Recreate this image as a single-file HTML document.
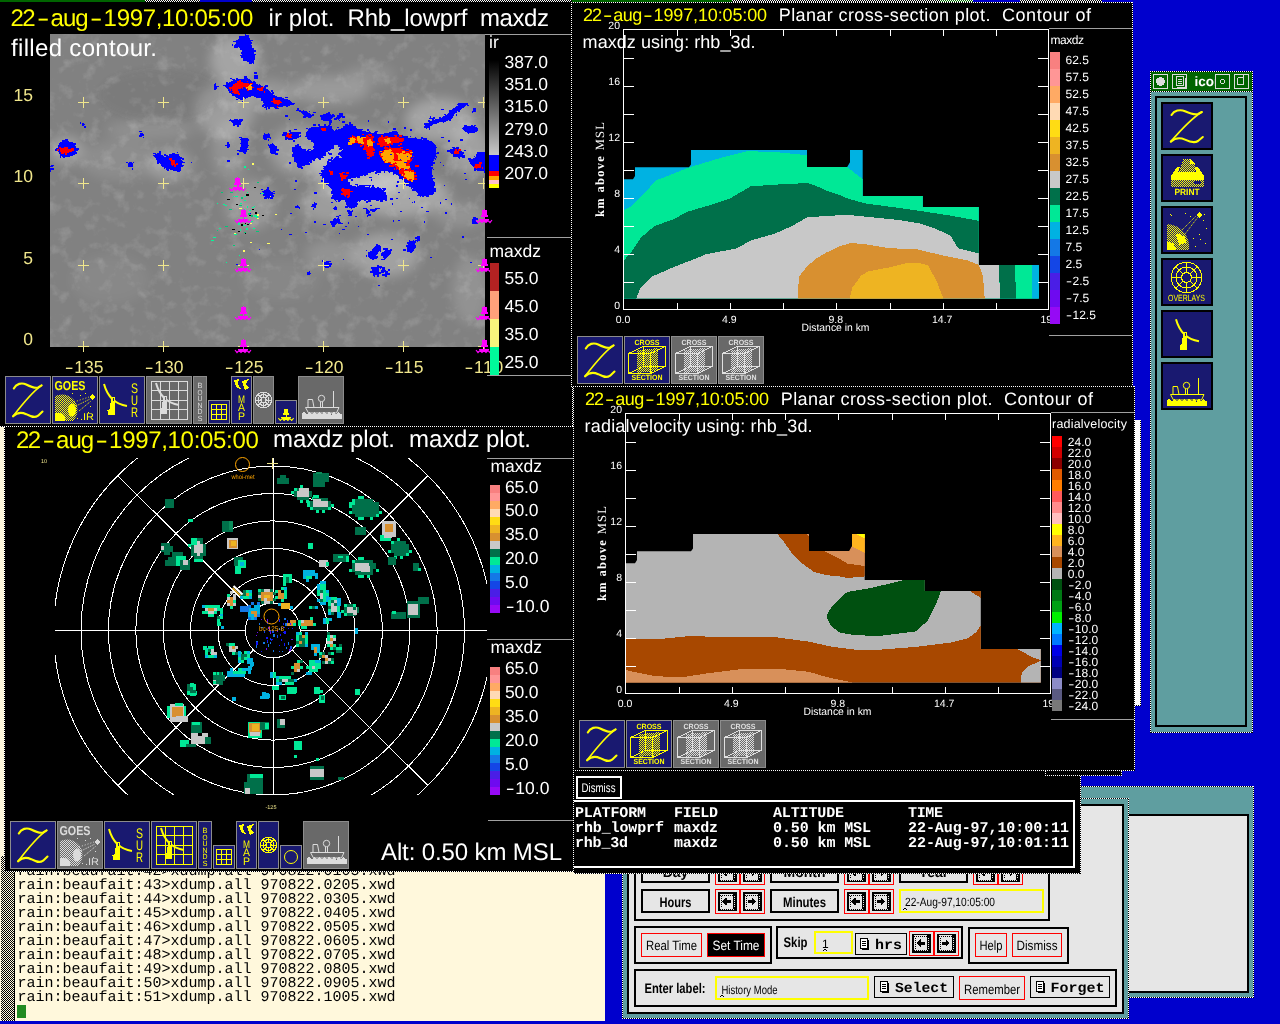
<!DOCTYPE html>
<html><head><meta charset="utf-8"><title>zeb display</title>
<style>html,body{margin:0;padding:0;background:#0000cd;overflow:hidden}svg{display:block;will-change:transform}text{white-space:pre}</style></head><body>
<svg width="1280" height="1024" viewBox="0 0 1280 1024" shape-rendering="crispEdges" text-rendering="geometricPrecision">
<defs>
<pattern id="stipY" width="2" height="2" patternUnits="userSpaceOnUse"><rect width="1" height="1" fill="#ffff00"/><rect x="1" y="1" width="1" height="1" fill="#ffff00"/></pattern>
<pattern id="stipG" width="2" height="2" patternUnits="userSpaceOnUse"><rect width="1" height="1" fill="#dcdcdc"/><rect x="1" y="1" width="1" height="1" fill="#dcdcdc"/></pattern>
<pattern id="stipK" width="2" height="2" patternUnits="userSpaceOnUse"><rect width="2" height="2" fill="#e6e6e6"/><rect width="1" height="1" fill="#000"/><rect x="1" y="1" width="1" height="1" fill="#000"/></pattern>
<pattern id="stipS" width="2" height="2" patternUnits="userSpaceOnUse"><rect width="2" height="2" fill="#fff8dc"/><rect width="1" height="1" fill="#000"/><rect x="1" y="1" width="1" height="1" fill="#000"/></pattern>
<filter id="blur3" x="-30%" y="-30%" width="160%" height="160%"><feGaussianBlur stdDeviation="3"/></filter>
<filter id="blur6" x="-30%" y="-30%" width="160%" height="160%"><feGaussianBlur stdDeviation="6"/></filter>
<filter id="blur1" x="-30%" y="-30%" width="160%" height="160%"><feGaussianBlur stdDeviation="1.2"/></filter>
<filter id="cloud" x="0" y="0" width="100%" height="100%"><feTurbulence type="fractalNoise" baseFrequency="0.07" numOctaves="4" seed="11"/><feColorMatrix type="matrix" values="0 0 0 0 1  0 0 0 0 1  0 0 0 0 1  2.6 0 0 0 -1.35"/></filter>
<linearGradient id="irg" x1="0" y1="0" x2="0" y2="1"><stop offset="0" stop-color="#000"/><stop offset="1" stop-color="#c8c8c8"/></linearGradient>
</defs>
<rect x="0" y="0" width="1280" height="1024" fill="#0000cd" />
<rect x="0" y="0" width="145" height="2" fill="#006400" />
<rect x="145" y="0" width="55" height="2" fill="#000" />
<line x1="145" y1="0.5" x2="200" y2="0.5" stroke="#fff" stroke-width="1" stroke-dasharray="1 1"/>
<line x1="146" y1="1.5" x2="200" y2="1.5" stroke="#fff" stroke-width="1" stroke-dasharray="1 1"/>
<rect x="200" y="0" width="52" height="2" fill="#0000cd" />
<rect x="252" y="0" width="319" height="2" fill="#000" />
<line x1="252" y1="0.5" x2="571" y2="0.5" stroke="#fff" stroke-width="1" stroke-dasharray="1 1"/>
<line x1="253" y1="1.5" x2="571" y2="1.5" stroke="#fff" stroke-width="1" stroke-dasharray="1 1"/>
<rect x="571" y="0" width="1" height="2" fill="#000" />
<rect x="572" y="0" width="160" height="2" fill="#006400" />
<rect x="732" y="0" width="208" height="2" fill="#000" />
<line x1="732" y1="0.5" x2="940" y2="0.5" stroke="#fff" stroke-width="1" stroke-dasharray="1 1"/>
<line x1="733" y1="1.5" x2="940" y2="1.5" stroke="#fff" stroke-width="1" stroke-dasharray="1 1"/>
<rect x="940" y="0" width="33" height="2" fill="#006400" />
<line x1="940" y1="0.5" x2="973" y2="0.5" stroke="#fff" stroke-width="1" stroke-dasharray="1 1"/>
<line x1="941" y1="1.5" x2="973" y2="1.5" stroke="#fff" stroke-width="1" stroke-dasharray="1 1"/>
<rect x="973" y="0" width="47" height="2" fill="#0000cd" />
<rect x="1020" y="0" width="82" height="2" fill="#000" />
<line x1="1020" y1="0.5" x2="1102" y2="0.5" stroke="#fff" stroke-width="1" stroke-dasharray="1 1"/>
<line x1="1021" y1="1.5" x2="1102" y2="1.5" stroke="#fff" stroke-width="1" stroke-dasharray="1 1"/>
<rect x="0" y="427" width="605" height="594" fill="#fff8dc" />
<rect x="1" y="856" width="13" height="165" fill="url(#stipS)" />
<rect x="14" y="856" width="1" height="165" fill="#000" />
<text x="17.6" y="874.75" font-size="15" fill="#000" font-family="'Liberation Mono', monospace" textLength="378" lengthAdjust="spacing" >rain:beaufait:42&gt;xdump.all 970822.0105.xwd</text>
<text x="17.6" y="888.75" font-size="15" fill="#000" font-family="'Liberation Mono', monospace" textLength="378" lengthAdjust="spacing" >rain:beaufait:43&gt;xdump.all 970822.0205.xwd</text>
<text x="17.6" y="902.75" font-size="15" fill="#000" font-family="'Liberation Mono', monospace" textLength="378" lengthAdjust="spacing" >rain:beaufait:44&gt;xdump.all 970822.0305.xwd</text>
<text x="17.6" y="916.75" font-size="15" fill="#000" font-family="'Liberation Mono', monospace" textLength="378" lengthAdjust="spacing" >rain:beaufait:45&gt;xdump.all 970822.0405.xwd</text>
<text x="17.6" y="930.75" font-size="15" fill="#000" font-family="'Liberation Mono', monospace" textLength="378" lengthAdjust="spacing" >rain:beaufait:46&gt;xdump.all 970822.0505.xwd</text>
<text x="17.6" y="944.75" font-size="15" fill="#000" font-family="'Liberation Mono', monospace" textLength="378" lengthAdjust="spacing" >rain:beaufait:47&gt;xdump.all 970822.0605.xwd</text>
<text x="17.6" y="958.75" font-size="15" fill="#000" font-family="'Liberation Mono', monospace" textLength="378" lengthAdjust="spacing" >rain:beaufait:48&gt;xdump.all 970822.0705.xwd</text>
<text x="17.6" y="972.75" font-size="15" fill="#000" font-family="'Liberation Mono', monospace" textLength="378" lengthAdjust="spacing" >rain:beaufait:49&gt;xdump.all 970822.0805.xwd</text>
<text x="17.6" y="986.75" font-size="15" fill="#000" font-family="'Liberation Mono', monospace" textLength="378" lengthAdjust="spacing" >rain:beaufait:50&gt;xdump.all 970822.0905.xwd</text>
<text x="17.6" y="1000.75" font-size="15" fill="#000" font-family="'Liberation Mono', monospace" textLength="378" lengthAdjust="spacing" >rain:beaufait:51&gt;xdump.all 970822.1005.xwd</text>
<rect x="17" y="1004.5" width="9" height="13" fill="#228b22" />
<rect x="1080" y="786" width="174" height="212" fill="#5f9ea0" />
<line x1="1080" y1="786.5" x2="1254" y2="786.5" stroke="#000" stroke-width="1" />
<line x1="1080" y1="786.5" x2="1254" y2="786.5" stroke="#fff" stroke-width="1" stroke-dasharray="1 1"/>
<line x1="1080" y1="997.5" x2="1254" y2="997.5" stroke="#000" stroke-width="1" />
<line x1="1080" y1="997.5" x2="1254" y2="997.5" stroke="#fff" stroke-width="1" stroke-dasharray="1 1"/>
<line x1="1253.5" y1="786" x2="1253.5" y2="998" stroke="#000" stroke-width="1" />
<line x1="1253.5" y1="786" x2="1253.5" y2="998" stroke="#fff" stroke-width="1" stroke-dasharray="1 1"/>
<rect x="1120" y="814" width="129" height="179" fill="#000" />
<rect x="1122" y="816" width="125" height="175" fill="#e6e6e6" />
<rect x="622" y="798" width="507" height="221" fill="#5f9ea0" />
<line x1="622" y1="798.5" x2="1129" y2="798.5" stroke="#000" stroke-width="1" />
<line x1="622" y1="798.5" x2="1129" y2="798.5" stroke="#fff" stroke-width="1" stroke-dasharray="1 1"/>
<line x1="622.5" y1="798" x2="622.5" y2="1019" stroke="#000" stroke-width="1" />
<line x1="622.5" y1="798" x2="622.5" y2="1019" stroke="#fff" stroke-width="1" stroke-dasharray="1 1"/>
<line x1="1128.5" y1="798" x2="1128.5" y2="1019" stroke="#000" stroke-width="1" />
<line x1="1128.5" y1="798" x2="1128.5" y2="1019" stroke="#fff" stroke-width="1" stroke-dasharray="1 1"/>
<line x1="622" y1="1018.5" x2="1129" y2="1018.5" stroke="#000" stroke-width="1" />
<line x1="622" y1="1018.5" x2="1129" y2="1018.5" stroke="#fff" stroke-width="1" stroke-dasharray="1 1"/>
<rect x="627" y="804" width="497" height="210" fill="#000" />
<rect x="629" y="806" width="493" height="206" fill="#e6e6e6" />
<rect x="635" y="841" width="414" height="79" fill="none" stroke="#000" stroke-width="2"/>
<rect x="642" y="861" width="67" height="21" fill="none" stroke="#000" stroke-width="2"/>
<text x="675.5" y="877" font-size="14" fill="#000" font-family="'Liberation Sans', sans-serif" font-weight="bold" text-anchor="middle" >Day</text>
<rect x="771" y="861" width="67" height="21" fill="none" stroke="#000" stroke-width="2"/>
<text x="804.5" y="877" font-size="14" fill="#000" font-family="'Liberation Sans', sans-serif" font-weight="bold" text-anchor="middle" >Month</text>
<rect x="900" y="861" width="67" height="21" fill="none" stroke="#000" stroke-width="2"/>
<text x="933.5" y="877" font-size="14" fill="#000" font-family="'Liberation Sans', sans-serif" font-weight="bold" text-anchor="middle" >Year</text>
<rect x="715.5" y="860.5" width="24" height="24" fill="none" stroke="#ff0000" stroke-width="1"/>
<rect x="718" y="863" width="19" height="19" fill="#000" />
<rect x="719.5" y="864.5" width="13.5" height="15" fill="#e6e6e6" />
<line x1="720" y1="866" x2="733" y2="866" stroke="#000" stroke-width="1" stroke-dasharray="1 1"/>
<line x1="721.5" y1="867" x2="721.5" y2="878" stroke="#000" stroke-width="1" stroke-dasharray="1 1"/>
<line x1="720" y1="879" x2="733" y2="879" stroke="#e6e6e6" stroke-width="1" stroke-dasharray="1 1"/>
<line x1="721" y1="880" x2="734" y2="880" stroke="#e6e6e6" stroke-width="1" stroke-dasharray="1 1"/>
<line x1="734.5" y1="867" x2="734.5" y2="879" stroke="#e6e6e6" stroke-width="1" stroke-dasharray="1 1"/>
<polygon points="730.5,871.0 726.5,871.0 726.5,868.5 722.0,872.5 726.5,876.5 726.5,874.0 730.5,874.0" fill="#000" />
<rect x="740.5" y="860.5" width="24" height="24" fill="none" stroke="#ff0000" stroke-width="1"/>
<rect x="743" y="863" width="19" height="19" fill="#000" />
<rect x="744.5" y="864.5" width="13.5" height="15" fill="#e6e6e6" />
<line x1="745" y1="866" x2="758" y2="866" stroke="#000" stroke-width="1" stroke-dasharray="1 1"/>
<line x1="746.5" y1="867" x2="746.5" y2="878" stroke="#000" stroke-width="1" stroke-dasharray="1 1"/>
<line x1="745" y1="879" x2="758" y2="879" stroke="#e6e6e6" stroke-width="1" stroke-dasharray="1 1"/>
<line x1="746" y1="880" x2="759" y2="880" stroke="#e6e6e6" stroke-width="1" stroke-dasharray="1 1"/>
<line x1="759.5" y1="867" x2="759.5" y2="879" stroke="#e6e6e6" stroke-width="1" stroke-dasharray="1 1"/>
<polygon points="747.5,871.0 751.5,871.0 751.5,868.5 756.0,872.5 751.5,876.5 751.5,874.0 747.5,874.0" fill="#000" />
<rect x="844.5" y="860.5" width="24" height="24" fill="none" stroke="#ff0000" stroke-width="1"/>
<rect x="847" y="863" width="19" height="19" fill="#000" />
<rect x="848.5" y="864.5" width="13.5" height="15" fill="#e6e6e6" />
<line x1="849" y1="866" x2="862" y2="866" stroke="#000" stroke-width="1" stroke-dasharray="1 1"/>
<line x1="850.5" y1="867" x2="850.5" y2="878" stroke="#000" stroke-width="1" stroke-dasharray="1 1"/>
<line x1="849" y1="879" x2="862" y2="879" stroke="#e6e6e6" stroke-width="1" stroke-dasharray="1 1"/>
<line x1="850" y1="880" x2="863" y2="880" stroke="#e6e6e6" stroke-width="1" stroke-dasharray="1 1"/>
<line x1="863.5" y1="867" x2="863.5" y2="879" stroke="#e6e6e6" stroke-width="1" stroke-dasharray="1 1"/>
<polygon points="859.5,871.0 855.5,871.0 855.5,868.5 851.0,872.5 855.5,876.5 855.5,874.0 859.5,874.0" fill="#000" />
<rect x="869.5" y="860.5" width="24" height="24" fill="none" stroke="#ff0000" stroke-width="1"/>
<rect x="872" y="863" width="19" height="19" fill="#000" />
<rect x="873.5" y="864.5" width="13.5" height="15" fill="#e6e6e6" />
<line x1="874" y1="866" x2="887" y2="866" stroke="#000" stroke-width="1" stroke-dasharray="1 1"/>
<line x1="875.5" y1="867" x2="875.5" y2="878" stroke="#000" stroke-width="1" stroke-dasharray="1 1"/>
<line x1="874" y1="879" x2="887" y2="879" stroke="#e6e6e6" stroke-width="1" stroke-dasharray="1 1"/>
<line x1="875" y1="880" x2="888" y2="880" stroke="#e6e6e6" stroke-width="1" stroke-dasharray="1 1"/>
<line x1="888.5" y1="867" x2="888.5" y2="879" stroke="#e6e6e6" stroke-width="1" stroke-dasharray="1 1"/>
<polygon points="876.5,871.0 880.5,871.0 880.5,868.5 885.0,872.5 880.5,876.5 880.5,874.0 876.5,874.0" fill="#000" />
<rect x="973.5" y="860.5" width="24" height="24" fill="none" stroke="#ff0000" stroke-width="1"/>
<rect x="976" y="863" width="19" height="19" fill="#000" />
<rect x="977.5" y="864.5" width="13.5" height="15" fill="#e6e6e6" />
<line x1="978" y1="866" x2="991" y2="866" stroke="#000" stroke-width="1" stroke-dasharray="1 1"/>
<line x1="979.5" y1="867" x2="979.5" y2="878" stroke="#000" stroke-width="1" stroke-dasharray="1 1"/>
<line x1="978" y1="879" x2="991" y2="879" stroke="#e6e6e6" stroke-width="1" stroke-dasharray="1 1"/>
<line x1="979" y1="880" x2="992" y2="880" stroke="#e6e6e6" stroke-width="1" stroke-dasharray="1 1"/>
<line x1="992.5" y1="867" x2="992.5" y2="879" stroke="#e6e6e6" stroke-width="1" stroke-dasharray="1 1"/>
<polygon points="988.5,871.0 984.5,871.0 984.5,868.5 980.0,872.5 984.5,876.5 984.5,874.0 988.5,874.0" fill="#000" />
<rect x="998.5" y="860.5" width="24" height="24" fill="none" stroke="#ff0000" stroke-width="1"/>
<rect x="1001" y="863" width="19" height="19" fill="#000" />
<rect x="1002.5" y="864.5" width="13.5" height="15" fill="#e6e6e6" />
<line x1="1003" y1="866" x2="1016" y2="866" stroke="#000" stroke-width="1" stroke-dasharray="1 1"/>
<line x1="1004.5" y1="867" x2="1004.5" y2="878" stroke="#000" stroke-width="1" stroke-dasharray="1 1"/>
<line x1="1003" y1="879" x2="1016" y2="879" stroke="#e6e6e6" stroke-width="1" stroke-dasharray="1 1"/>
<line x1="1004" y1="880" x2="1017" y2="880" stroke="#e6e6e6" stroke-width="1" stroke-dasharray="1 1"/>
<line x1="1017.5" y1="867" x2="1017.5" y2="879" stroke="#e6e6e6" stroke-width="1" stroke-dasharray="1 1"/>
<polygon points="1005.5,871.0 1009.5,871.0 1009.5,868.5 1014.0,872.5 1009.5,876.5 1009.5,874.0 1005.5,874.0" fill="#000" />
<rect x="642" y="890" width="67" height="22" fill="none" stroke="#000" stroke-width="2"/>
<text x="675.5" y="906.5" font-size="14" fill="#000" font-family="'Liberation Sans', sans-serif" textLength="32" lengthAdjust="spacingAndGlyphs" font-weight="bold" text-anchor="middle" >Hours</text>
<rect x="771" y="890" width="67" height="22" fill="none" stroke="#000" stroke-width="2"/>
<text x="804.5" y="906.5" font-size="14" fill="#000" font-family="'Liberation Sans', sans-serif" textLength="43" lengthAdjust="spacingAndGlyphs" font-weight="bold" text-anchor="middle" >Minutes</text>
<rect x="715.5" y="889.5" width="24" height="24" fill="none" stroke="#ff0000" stroke-width="1"/>
<rect x="718" y="892" width="19" height="19" fill="#000" />
<rect x="719.5" y="893.5" width="13.5" height="15" fill="#e6e6e6" />
<line x1="720" y1="895" x2="733" y2="895" stroke="#000" stroke-width="1" stroke-dasharray="1 1"/>
<line x1="721.5" y1="896" x2="721.5" y2="907" stroke="#000" stroke-width="1" stroke-dasharray="1 1"/>
<line x1="720" y1="908" x2="733" y2="908" stroke="#e6e6e6" stroke-width="1" stroke-dasharray="1 1"/>
<line x1="721" y1="909" x2="734" y2="909" stroke="#e6e6e6" stroke-width="1" stroke-dasharray="1 1"/>
<line x1="734.5" y1="896" x2="734.5" y2="908" stroke="#e6e6e6" stroke-width="1" stroke-dasharray="1 1"/>
<polygon points="730.5,900.0 726.5,900.0 726.5,897.5 722.0,901.5 726.5,905.5 726.5,903.0 730.5,903.0" fill="#000" />
<rect x="740.5" y="889.5" width="24" height="24" fill="none" stroke="#ff0000" stroke-width="1"/>
<rect x="743" y="892" width="19" height="19" fill="#000" />
<rect x="744.5" y="893.5" width="13.5" height="15" fill="#e6e6e6" />
<line x1="745" y1="895" x2="758" y2="895" stroke="#000" stroke-width="1" stroke-dasharray="1 1"/>
<line x1="746.5" y1="896" x2="746.5" y2="907" stroke="#000" stroke-width="1" stroke-dasharray="1 1"/>
<line x1="745" y1="908" x2="758" y2="908" stroke="#e6e6e6" stroke-width="1" stroke-dasharray="1 1"/>
<line x1="746" y1="909" x2="759" y2="909" stroke="#e6e6e6" stroke-width="1" stroke-dasharray="1 1"/>
<line x1="759.5" y1="896" x2="759.5" y2="908" stroke="#e6e6e6" stroke-width="1" stroke-dasharray="1 1"/>
<polygon points="747.5,900.0 751.5,900.0 751.5,897.5 756.0,901.5 751.5,905.5 751.5,903.0 747.5,903.0" fill="#000" />
<rect x="844.5" y="889.5" width="24" height="24" fill="none" stroke="#ff0000" stroke-width="1"/>
<rect x="847" y="892" width="19" height="19" fill="#000" />
<rect x="848.5" y="893.5" width="13.5" height="15" fill="#e6e6e6" />
<line x1="849" y1="895" x2="862" y2="895" stroke="#000" stroke-width="1" stroke-dasharray="1 1"/>
<line x1="850.5" y1="896" x2="850.5" y2="907" stroke="#000" stroke-width="1" stroke-dasharray="1 1"/>
<line x1="849" y1="908" x2="862" y2="908" stroke="#e6e6e6" stroke-width="1" stroke-dasharray="1 1"/>
<line x1="850" y1="909" x2="863" y2="909" stroke="#e6e6e6" stroke-width="1" stroke-dasharray="1 1"/>
<line x1="863.5" y1="896" x2="863.5" y2="908" stroke="#e6e6e6" stroke-width="1" stroke-dasharray="1 1"/>
<polygon points="859.5,900.0 855.5,900.0 855.5,897.5 851.0,901.5 855.5,905.5 855.5,903.0 859.5,903.0" fill="#000" />
<rect x="869.5" y="889.5" width="24" height="24" fill="none" stroke="#ff0000" stroke-width="1"/>
<rect x="872" y="892" width="19" height="19" fill="#000" />
<rect x="873.5" y="893.5" width="13.5" height="15" fill="#e6e6e6" />
<line x1="874" y1="895" x2="887" y2="895" stroke="#000" stroke-width="1" stroke-dasharray="1 1"/>
<line x1="875.5" y1="896" x2="875.5" y2="907" stroke="#000" stroke-width="1" stroke-dasharray="1 1"/>
<line x1="874" y1="908" x2="887" y2="908" stroke="#e6e6e6" stroke-width="1" stroke-dasharray="1 1"/>
<line x1="875" y1="909" x2="888" y2="909" stroke="#e6e6e6" stroke-width="1" stroke-dasharray="1 1"/>
<line x1="888.5" y1="896" x2="888.5" y2="908" stroke="#e6e6e6" stroke-width="1" stroke-dasharray="1 1"/>
<polygon points="876.5,900.0 880.5,900.0 880.5,897.5 885.0,901.5 880.5,905.5 880.5,903.0 876.5,903.0" fill="#000" />
<rect x="900" y="890" width="143" height="22" fill="none" stroke="#ffff00" stroke-width="2"/>
<text x="905" y="906" font-size="12" fill="#000" font-family="'Liberation Sans', sans-serif" textLength="90" lengthAdjust="spacingAndGlyphs" >22-Aug-97,10:05:00</text>
<path d="M902.5,910.5 l2.5,-2.5 l2.5,2.5" fill="none" stroke="#000" stroke-width="1"/>
<rect x="635" y="927" width="136" height="36" fill="none" stroke="#000" stroke-width="2"/>
<rect x="641.5" y="933.5" width="60" height="23" fill="none" stroke="#ff0000" stroke-width="1"/>
<text x="671.5" y="950" font-size="13.5" fill="#000" font-family="'Liberation Sans', sans-serif" textLength="51" lengthAdjust="spacingAndGlyphs" text-anchor="middle" >Real Time</text>
<rect x="707.5" y="933.5" width="57" height="23" fill="#000" stroke="#ff0000" stroke-width="1"/>
<text x="736" y="950" font-size="13.5" fill="#fff" font-family="'Liberation Sans', sans-serif" textLength="47" lengthAdjust="spacingAndGlyphs" text-anchor="middle" >Set Time</text>
<rect x="777" y="927" width="185" height="31" fill="none" stroke="#000" stroke-width="2"/>
<text x="783.5" y="946.5" font-size="14" fill="#000" font-family="'Liberation Sans', sans-serif" textLength="24" lengthAdjust="spacingAndGlyphs" font-weight="bold" >Skip</text>
<rect x="815" y="931.5" width="37" height="21.5" fill="none" stroke="#ffff00" stroke-width="2"/>
<text x="822" y="948" font-size="12" fill="#000" font-family="'Liberation Sans', sans-serif" >1</text>
<path d="M822.5,951.5 l2.5,-2.5 l2.5,2.5" fill="none" stroke="#000" stroke-width="1"/>
<rect x="855.5" y="933.5" width="51" height="21" fill="none" stroke="#000" stroke-width="1"/>
<rect x="860.5" y="938.5" width="7" height="10" fill="#fff" stroke="#000" stroke-width="1"/>
<line x1="862" y1="941.5" x2="866" y2="941.5" stroke="#000" stroke-width="1" />
<line x1="862" y1="943.5" x2="866" y2="943.5" stroke="#000" stroke-width="1" />
<line x1="862" y1="945.5" x2="866" y2="945.5" stroke="#000" stroke-width="1" />
<line x1="868.5" y1="940" x2="868.5" y2="950" stroke="#000" stroke-width="1" />
<line x1="862" y1="949.5" x2="869" y2="949.5" stroke="#000" stroke-width="1" />
<text x="875" y="948.5" font-size="14" fill="#000" font-family="'Liberation Mono', monospace" textLength="27" lengthAdjust="spacingAndGlyphs" font-weight="bold" >hrs</text>
<rect x="909.5" y="931" width="24" height="24" fill="none" stroke="#ff0000" stroke-width="1"/>
<rect x="912" y="933.5" width="19" height="19" fill="#000" />
<rect x="913.5" y="935" width="13.5" height="15" fill="#e6e6e6" />
<line x1="914" y1="936.5" x2="927" y2="936.5" stroke="#000" stroke-width="1" stroke-dasharray="1 1"/>
<line x1="915.5" y1="937.5" x2="915.5" y2="948.5" stroke="#000" stroke-width="1" stroke-dasharray="1 1"/>
<line x1="914" y1="949.5" x2="927" y2="949.5" stroke="#e6e6e6" stroke-width="1" stroke-dasharray="1 1"/>
<line x1="915" y1="950.5" x2="928" y2="950.5" stroke="#e6e6e6" stroke-width="1" stroke-dasharray="1 1"/>
<line x1="928.5" y1="937.5" x2="928.5" y2="949.5" stroke="#e6e6e6" stroke-width="1" stroke-dasharray="1 1"/>
<polygon points="924.5,941.5 920.5,941.5 920.5,939.0 916.0,943.0 920.5,947.0 920.5,944.5 924.5,944.5" fill="#000" />
<rect x="934.5" y="931" width="24" height="24" fill="none" stroke="#ff0000" stroke-width="1"/>
<rect x="937" y="933.5" width="19" height="19" fill="#000" />
<rect x="938.5" y="935" width="13.5" height="15" fill="#e6e6e6" />
<line x1="939" y1="936.5" x2="952" y2="936.5" stroke="#000" stroke-width="1" stroke-dasharray="1 1"/>
<line x1="940.5" y1="937.5" x2="940.5" y2="948.5" stroke="#000" stroke-width="1" stroke-dasharray="1 1"/>
<line x1="939" y1="949.5" x2="952" y2="949.5" stroke="#e6e6e6" stroke-width="1" stroke-dasharray="1 1"/>
<line x1="940" y1="950.5" x2="953" y2="950.5" stroke="#e6e6e6" stroke-width="1" stroke-dasharray="1 1"/>
<line x1="953.5" y1="937.5" x2="953.5" y2="949.5" stroke="#e6e6e6" stroke-width="1" stroke-dasharray="1 1"/>
<polygon points="941.5,941.5 945.5,941.5 945.5,939.0 950.0,943.0 945.5,947.0 945.5,944.5 941.5,944.5" fill="#000" />
<rect x="969" y="927.5" width="99" height="35" fill="none" stroke="#000" stroke-width="2"/>
<rect x="975.5" y="933.5" width="31" height="23" fill="none" stroke="#ff0000" stroke-width="1"/>
<text x="991" y="950" font-size="13.5" fill="#000" font-family="'Liberation Sans', sans-serif" textLength="23" lengthAdjust="spacingAndGlyphs" text-anchor="middle" >Help</text>
<rect x="1012.5" y="933.5" width="49" height="23" fill="none" stroke="#ff0000" stroke-width="1"/>
<text x="1037" y="950" font-size="13.5" fill="#000" font-family="'Liberation Sans', sans-serif" textLength="41" lengthAdjust="spacingAndGlyphs" text-anchor="middle" >Dismiss</text>
<rect x="635" y="970" width="481" height="36" fill="none" stroke="#000" stroke-width="2"/>
<text x="644.5" y="992.5" font-size="14" fill="#000" font-family="'Liberation Sans', sans-serif" textLength="61" lengthAdjust="spacingAndGlyphs" font-weight="bold" >Enter label:</text>
<rect x="716" y="977" width="152" height="21.5" fill="none" stroke="#ffff00" stroke-width="2"/>
<text x="721.5" y="993.5" font-size="12" fill="#000" font-family="'Liberation Sans', sans-serif" textLength="56" lengthAdjust="spacingAndGlyphs" >History Mode</text>
<path d="M719.5,997.5 l2.5,-2.5 l2.5,2.5" fill="none" stroke="#000" stroke-width="1"/>
<rect x="874.5" y="976.5" width="79" height="21" fill="none" stroke="#000" stroke-width="1"/>
<rect x="880.5" y="981.5" width="7" height="10" fill="#fff" stroke="#000" stroke-width="1"/>
<line x1="882" y1="984.5" x2="886" y2="984.5" stroke="#000" stroke-width="1" />
<line x1="882" y1="986.5" x2="886" y2="986.5" stroke="#000" stroke-width="1" />
<line x1="882" y1="988.5" x2="886" y2="988.5" stroke="#000" stroke-width="1" />
<line x1="888.5" y1="983" x2="888.5" y2="993" stroke="#000" stroke-width="1" />
<line x1="882" y1="992.5" x2="889" y2="992.5" stroke="#000" stroke-width="1" />
<text x="895" y="992" font-size="14" fill="#000" font-family="'Liberation Mono', monospace" textLength="53" lengthAdjust="spacingAndGlyphs" font-weight="bold" >Select</text>
<rect x="959.5" y="976.5" width="65" height="23" fill="none" stroke="#ff0000" stroke-width="1"/>
<text x="992" y="993.5" font-size="13.5" fill="#000" font-family="'Liberation Sans', sans-serif" textLength="56" lengthAdjust="spacingAndGlyphs" text-anchor="middle" >Remember</text>
<rect x="1030.5" y="976.5" width="79" height="21" fill="none" stroke="#000" stroke-width="1"/>
<rect x="1036.5" y="981.5" width="7" height="10" fill="#fff" stroke="#000" stroke-width="1"/>
<line x1="1038" y1="984.5" x2="1042" y2="984.5" stroke="#000" stroke-width="1" />
<line x1="1038" y1="986.5" x2="1042" y2="986.5" stroke="#000" stroke-width="1" />
<line x1="1038" y1="988.5" x2="1042" y2="988.5" stroke="#000" stroke-width="1" />
<line x1="1044.5" y1="983" x2="1044.5" y2="993" stroke="#000" stroke-width="1" />
<line x1="1038" y1="992.5" x2="1045" y2="992.5" stroke="#000" stroke-width="1" />
<text x="1050.5" y="992" font-size="14" fill="#000" font-family="'Liberation Mono', monospace" textLength="54" lengthAdjust="spacingAndGlyphs" font-weight="bold" >Forget</text>
<rect x="1150" y="71" width="103" height="662" fill="#5f9ea0" />
<rect x="1150" y="71" width="103" height="21" fill="#006400" />
<line x1="1150" y1="71.5" x2="1253" y2="71.5" stroke="#000" stroke-width="1" />
<line x1="1150" y1="71.5" x2="1253" y2="71.5" stroke="#fff" stroke-width="1" stroke-dasharray="1 1"/>
<line x1="1150" y1="91.5" x2="1253" y2="91.5" stroke="#000" stroke-width="1" />
<line x1="1150" y1="91.5" x2="1253" y2="91.5" stroke="#fff" stroke-width="1" stroke-dasharray="1 1"/>
<line x1="1150" y1="732.5" x2="1253" y2="732.5" stroke="#000" stroke-width="1" />
<line x1="1150" y1="732.5" x2="1253" y2="732.5" stroke="#fff" stroke-width="1" stroke-dasharray="1 1"/>
<line x1="1150.5" y1="71" x2="1150.5" y2="733" stroke="#000" stroke-width="1" />
<line x1="1150.5" y1="71" x2="1150.5" y2="733" stroke="#fff" stroke-width="1" stroke-dasharray="1 1"/>
<line x1="1252.5" y1="71" x2="1252.5" y2="733" stroke="#000" stroke-width="1" />
<line x1="1252.5" y1="71" x2="1252.5" y2="733" stroke="#fff" stroke-width="1" stroke-dasharray="1 1"/>
<text x="1194.5" y="86" font-size="13.5" fill="#fff" font-family="'Liberation Sans', sans-serif" font-weight="bold" >icons</text>
<rect x="1153.5" y="74.5" width="14" height="14" fill="#006400" stroke="#dcdcdc" stroke-width="1"/>
<rect x="1172.5" y="74.5" width="14" height="14" fill="#006400" stroke="#dcdcdc" stroke-width="1"/>
<rect x="1215.5" y="74.5" width="14" height="14" fill="#006400" stroke="#dcdcdc" stroke-width="1"/>
<rect x="1234.5" y="74.5" width="14" height="14" fill="#006400" stroke="#dcdcdc" stroke-width="1"/>
<circle cx="1160.5" cy="81.5" r="4.5" fill="#dcdcdc"/>
<rect x="1176.5" y="76.5" width="7" height="9" fill="none" stroke="#dcdcdc" stroke-width="1"/>
<line x1="1178" y1="79.5" x2="1182" y2="79.5" stroke="#dcdcdc" stroke-width="1" />
<line x1="1178" y1="81.5" x2="1182" y2="81.5" stroke="#dcdcdc" stroke-width="1" />
<line x1="1178" y1="83.5" x2="1182" y2="83.5" stroke="#dcdcdc" stroke-width="1" />
<line x1="1177" y1="87.5" x2="1186" y2="87.5" stroke="#dcdcdc" stroke-width="1" />
<line x1="1185.5" y1="78" x2="1185.5" y2="88" stroke="#dcdcdc" stroke-width="1" />
<circle cx="1222.5" cy="81.5" r="2" fill="none" stroke="#dcdcdc" stroke-width="1"/>
<path d="M1237.5,77.5 h6 v-3 M1243.5,77.5 v7 h-6 v-7" fill="none" stroke="#dcdcdc" stroke-width="1"/>
<rect x="1156" y="97" width="90" height="629" fill="none" stroke="#000" stroke-width="2"/>
<rect x="1161" y="102" width="52" height="48" fill="#000" />
<rect x="1163" y="104" width="48" height="44" fill="#191970" />
<rect x="1161" y="154" width="52" height="48" fill="#000" />
<rect x="1163" y="156" width="48" height="44" fill="#191970" />
<rect x="1161" y="206" width="52" height="48" fill="#000" />
<rect x="1163" y="208" width="48" height="44" fill="#191970" />
<rect x="1161" y="258" width="52" height="48" fill="#000" />
<rect x="1163" y="260" width="48" height="44" fill="#191970" />
<rect x="1161" y="310" width="52" height="48" fill="#000" />
<rect x="1163" y="312" width="48" height="44" fill="#191970" />
<rect x="1161" y="362" width="52" height="48" fill="#000" />
<rect x="1163" y="364" width="48" height="44" fill="#191970" />
<g fill="none" stroke="#ffff00" stroke-linecap="round" stroke-linejoin="round" shape-rendering="auto">
<path d="M1171.5,115.0 C1174.0,110.5 1180.0,109.0 1185.0,111.2 C1190.0,113.5 1194.0,115.0 1198.0,114.0 L1201.8,112.0" stroke-width="2.1"/>
<path d="M1201.8,112.0 C1193.0,117.5 1183.0,127.5 1170.8,141.6" stroke-width="1.7"/>
<path d="M1170.8,141.6 C1175.0,138.0 1180.0,137.5 1185.0,139.6 C1190.0,142.0 1194.0,143.5 1198.0,141.0 L1202.8,137.0" stroke-width="2.1"/>
</g>
<polygon points="1179.0,172.0 1183.0,159.0 1190.0,159.0 1195.0,164.0 1195.0,172.0" fill="url(#stipY)" />
<polygon points="1190.0,159.0 1195.0,164.0 1190.0,164.0" fill="#ffff00" />
<polygon points="1171.0,176.0 1177.0,167.0 1180.0,167.0 1178.0,172.0 1196.0,172.0 1195.0,167.0 1198.0,167.0 1204.0,176.0" fill="#ffff00" />
<rect x="1171" y="176" width="33" height="4" fill="#ffff00" />
<rect x="1171" y="180" width="33" height="7" fill="url(#stipY)" />
<rect x="1194" y="181" width="7" height="3" fill="#191970" />
<text x="1187" y="195" font-size="9" fill="#ffff00" font-family="'Liberation Sans', sans-serif" textLength="25" lengthAdjust="spacingAndGlyphs" font-weight="bold" text-anchor="middle" >PRINT</text>
<path d="M1167,250 v-26 a23,23 0 0 1 22,26 z" fill="url(#stipY)" shape-rendering="auto"/>
<path d="M1176,234 a9,8 0 0 1 10,9 l-7,2 z" fill="#ffff00"/>
<path d="M1167,250 v-8 a8,8 0 0 1 9,8 z" fill="#ffff00"/>
<line x1="1185" y1="234" x2="1198" y2="217" stroke="#ffff00" stroke-width="1" stroke-dasharray="1 1" shape-rendering="auto"/>
<line x1="1182" y1="230" x2="1196" y2="216" stroke="#ffff00" stroke-width="1" stroke-dasharray="1 1" shape-rendering="auto"/>
<polygon points="1199.0,212.0 1202.0,215.0 1199.0,218.0 1196.0,215.0" fill="#ffff00" />
<rect x="1170" y="214" width="1" height="1" fill="#ffff00" />
<rect x="1171" y="215" width="1" height="1" fill="#ffff00" />
<rect x="1185" y="213" width="1" height="1" fill="#ffff00" />
<rect x="1190" y="216" width="1" height="1" fill="#ffff00" />
<rect x="1204" y="214" width="1" height="1" fill="#ffff00" />
<rect x="1206" y="228" width="1" height="1" fill="#ffff00" />
<rect x="1199" y="234" width="1" height="1" fill="#ffff00" />
<rect x="1205" y="243" width="1" height="1" fill="#ffff00" />
<rect x="1195" y="246" width="1" height="1" fill="#ffff00" />
<rect x="1200" y="239" width="1" height="1" fill="#ffff00" />
<rect x="1193" y="238" width="1" height="1" fill="#ffff00" />
<rect x="1203" y="220" width="1" height="1" fill="#ffff00" />
<g fill="none" stroke="#ffff00" stroke-width="1">
<circle cx="1186.5" cy="277.5" r="15.3"/><circle cx="1186.5" cy="277.5" r="10.4"/><circle cx="1186.5" cy="277.5" r="4.9"/>
<line x1="1191.4" y1="277.5" x2="1201.8" y2="277.5"/>
<line x1="1190.0" y1="281.0" x2="1197.3" y2="288.3"/>
<line x1="1186.5" y1="282.4" x2="1186.5" y2="292.8"/>
<line x1="1183.0" y1="281.0" x2="1175.7" y2="288.3"/>
<line x1="1181.6" y1="277.5" x2="1171.2" y2="277.5"/>
<line x1="1183.0" y1="274.0" x2="1175.7" y2="266.7"/>
<line x1="1186.5" y1="272.6" x2="1186.5" y2="262.2"/>
<line x1="1190.0" y1="274.0" x2="1197.3" y2="266.7"/>
</g>
<text x="1186.5" y="301" font-size="9" fill="#ffff00" font-family="'Liberation Sans', sans-serif" textLength="37" lengthAdjust="spacingAndGlyphs" text-anchor="middle" >OVERLAYS</text>
<path d="M1176.0,319.2 C1179.0,330.2 1186.0,339.2 1199.0,341.2" fill="none" stroke="#ffff00" stroke-width="2.0" shape-rendering="auto"/>
<polygon points="1183.5,331.7 1187.0,331.7 1187.0,350.2 1179.5,350.2 1179.5,345.7 1181.5,344.2" fill="#ffff00" />
<rect x="1184.5" y="333.2" width="1.5" height="2.5" fill="#191970" />
<g shape-rendering="auto">
<polygon points="1170.5,394.5 1204.0,394.5 1201.5,400.0 1173.5,400.0" fill="none" stroke="#ffff00" stroke-width="1"/>
<polygon points="1173.0,394.5 1173.0,386.5 1177.5,386.5 1179.0,394.5" fill="none" stroke="#ffff00" stroke-width="1"/>
<circle cx="1186.5" cy="385.5" r="3.2" fill="none" stroke="#ffff00" stroke-width="1"/>
</g>
<line x1="1185.5" y1="388.7" x2="1185.5" y2="394.5" stroke="#ffff00" stroke-width="1" />
<line x1="1187.5" y1="388.7" x2="1187.5" y2="394.5" stroke="#ffff00" stroke-width="1" />
<line x1="1198.5" y1="378" x2="1198.5" y2="394.5" stroke="#ffff00" stroke-width="1" />
<polygon points="1167.0,406.0 1167.0,400.0 1169.5,398.8 1172.0,401.6 1174.4,398.8 1176.9,401.6 1179.3,398.8 1181.8,401.6 1184.2,398.8 1186.7,401.6 1189.1,398.8 1191.6,401.6 1194.0,398.8 1196.5,401.6 1198.9,398.8 1201.4,401.6 1203.8,398.8 1206.3,401.6 1207.0,399.0 1207.0,406.0" fill="#ffff00" />
<rect x="0" y="2" width="574" height="425" fill="#000" />
<g>
<clipPath id="irclip"><rect x="50" y="34" width="435" height="313"/></clipPath>
<g clip-path="url(#irclip)" shape-rendering="auto">
<rect x="50" y="34" width="435" height="313" fill="#818181" />
<rect x="50" y="34" width="435" height="313" filter="url(#cloud)" opacity="0.16"/>
<g filter="url(#blur6)" fill="#fff">
<ellipse cx="235" cy="60" rx="25" ry="25" opacity="0.28"/>
<ellipse cx="225" cy="110" rx="30" ry="28" opacity="0.22"/>
<ellipse cx="270" cy="95" rx="25" ry="15" opacity="0.18"/>
<ellipse cx="330" cy="90" rx="40" ry="14" opacity="0.2"/>
<ellipse cx="370" cy="75" rx="25" ry="10" opacity="0.12"/>
<ellipse cx="360" cy="165" rx="50" ry="35" opacity="0.34"/>
<ellipse cx="400" cy="195" rx="50" ry="22" opacity="0.3"/>
<ellipse cx="440" cy="120" rx="35" ry="22" opacity="0.28"/>
<ellipse cx="470" cy="150" rx="20" ry="25" opacity="0.25"/>
<ellipse cx="300" cy="150" rx="30" ry="25" opacity="0.22"/>
<ellipse cx="330" cy="205" rx="30" ry="18" opacity="0.22"/>
<ellipse cx="385" cy="255" rx="35" ry="22" opacity="0.26"/>
<ellipse cx="250" cy="205" rx="25" ry="25" opacity="0.18"/>
<ellipse cx="230" cy="150" rx="18" ry="30" opacity="0.15"/>
<ellipse cx="470" cy="290" rx="18" ry="35" opacity="0.14"/>
<ellipse cx="460" cy="215" rx="25" ry="12" opacity="0.15"/>
<ellipse cx="66" cy="150" rx="18" ry="14" opacity="0.25"/>
<ellipse cx="170" cy="165" rx="22" ry="16" opacity="0.22"/>
<ellipse cx="120" cy="160" rx="40" ry="20" opacity="0.1"/>
<ellipse cx="150" cy="130" rx="45" ry="10" opacity="0.12"/>
<ellipse cx="330" cy="255" rx="25" ry="15" opacity="0.14"/>
<ellipse cx="110" cy="280" rx="40" ry="25" opacity="0.06"/>
<ellipse cx="280" cy="280" rx="40" ry="20" opacity="0.05"/>
</g>
<g filter="url(#blur3)" fill="#505050">
<ellipse cx="160" cy="95" rx="60" ry="25" opacity="0.1"/>
</g>
</g>
<g clip-path="url(#irclip)">
<polygon points="239.6,35.7 248.7,35.7 252.6,48.1 255.5,59.0 251.7,64.0 243.0,59.5 241.2,48.1 234.0,45.9 237.4,42.5" fill="#0000ff" />
<rect x="241" y="36" width="1" height="2" fill="#0000ff" />
<rect x="240" y="36" width="2" height="1" fill="#0000ff" />
<rect x="239" y="33" width="3" height="1" fill="#0000ff" />
<rect x="245" y="34" width="1" height="2" fill="#0000ff" />
<rect x="249" y="41" width="2" height="2" fill="#0000ff" />
<rect x="249" y="40" width="2" height="1" fill="#0000ff" />
<rect x="251" y="42" width="1" height="2" fill="#0000ff" />
<rect x="246" y="35" width="3" height="2" fill="#0000ff" />
<rect x="251" y="40" width="2" height="1" fill="#0000ff" />
<rect x="252" y="54" width="3" height="2" fill="#0000ff" />
<rect x="254" y="57" width="1" height="2" fill="#0000ff" />
<rect x="253" y="50" width="3" height="2" fill="#0000ff" />
<rect x="252" y="48" width="2" height="2" fill="#0000ff" />
<rect x="253" y="54" width="3" height="1" fill="#0000ff" />
<rect x="253" y="63" width="1" height="1" fill="#0000ff" />
<rect x="251" y="61" width="3" height="2" fill="#0000ff" />
<rect x="245" y="59" width="3" height="2" fill="#0000ff" />
<rect x="248" y="61" width="2" height="1" fill="#0000ff" />
<rect x="243" y="60" width="3" height="1" fill="#0000ff" />
<rect x="249" y="62" width="2" height="2" fill="#0000ff" />
<rect x="240" y="48" width="2" height="2" fill="#0000ff" />
<rect x="242" y="47" width="2" height="1" fill="#0000ff" />
<rect x="241" y="56" width="2" height="2" fill="#0000ff" />
<rect x="240" y="55" width="2" height="1" fill="#0000ff" />
<rect x="241" y="52" width="1" height="2" fill="#0000ff" />
<rect x="234" y="46" width="3" height="2" fill="#0000ff" />
<rect x="237" y="47" width="1" height="1" fill="#0000ff" />
<rect x="239" y="46" width="2" height="2" fill="#0000ff" />
<rect x="232" y="44" width="1" height="2" fill="#0000ff" />
<rect x="233" y="41" width="3" height="1" fill="#0000ff" />
<rect x="239" y="37" width="3" height="1" fill="#0000ff" />
<rect x="236" y="42" width="3" height="2" fill="#0000ff" />
<rect x="236" y="40" width="2" height="2" fill="#0000ff" />
<polygon points="224.9,85.1 234.0,79.8 247.6,78.0 254.4,83.2 265.7,87.8 274.8,95.7 290.6,100.7 294.0,104.8 277.0,107.5 265.7,107.0 261.2,98.0 249.8,95.7 240.8,100.2 234.0,96.2 228.3,90.7" fill="#0000ff" />
<rect x="230" y="78" width="2" height="1" fill="#0000ff" />
<rect x="231" y="81" width="2" height="2" fill="#0000ff" />
<rect x="232" y="79" width="2" height="1" fill="#0000ff" />
<rect x="226" y="82" width="2" height="2" fill="#0000ff" />
<rect x="237" y="80" width="2" height="1" fill="#0000ff" />
<rect x="244" y="76" width="3" height="2" fill="#0000ff" />
<rect x="244" y="78" width="3" height="2" fill="#0000ff" />
<rect x="236" y="78" width="2" height="2" fill="#0000ff" />
<rect x="233" y="79" width="2" height="1" fill="#0000ff" />
<rect x="242" y="79" width="1" height="2" fill="#0000ff" />
<rect x="253" y="83" width="1" height="2" fill="#0000ff" />
<rect x="253" y="81" width="2" height="2" fill="#0000ff" />
<rect x="251" y="82" width="3" height="2" fill="#0000ff" />
<rect x="259" y="85" width="2" height="1" fill="#0000ff" />
<rect x="254" y="82" width="2" height="2" fill="#0000ff" />
<rect x="264" y="86" width="2" height="1" fill="#0000ff" />
<rect x="259" y="84" width="1" height="2" fill="#0000ff" />
<rect x="261" y="87" width="2" height="1" fill="#0000ff" />
<rect x="264" y="87" width="2" height="2" fill="#0000ff" />
<rect x="271" y="90" width="2" height="2" fill="#0000ff" />
<rect x="272" y="92" width="2" height="2" fill="#0000ff" />
<rect x="266" y="89" width="2" height="2" fill="#0000ff" />
<rect x="265" y="85" width="3" height="2" fill="#0000ff" />
<rect x="285" y="97" width="3" height="1" fill="#0000ff" />
<rect x="287" y="99" width="1" height="1" fill="#0000ff" />
<rect x="283" y="99" width="1" height="2" fill="#0000ff" />
<rect x="280" y="97" width="2" height="2" fill="#0000ff" />
<rect x="278" y="97" width="2" height="2" fill="#0000ff" />
<rect x="283" y="99" width="2" height="2" fill="#0000ff" />
<rect x="275" y="96" width="1" height="2" fill="#0000ff" />
<rect x="290" y="102" width="1" height="1" fill="#0000ff" />
<rect x="293" y="103" width="2" height="1" fill="#0000ff" />
<rect x="275" y="107" width="3" height="2" fill="#0000ff" />
<rect x="290" y="103" width="3" height="2" fill="#0000ff" />
<rect x="286" y="105" width="1" height="2" fill="#0000ff" />
<rect x="287" y="105" width="1" height="2" fill="#0000ff" />
<rect x="288" y="105" width="1" height="1" fill="#0000ff" />
<rect x="278" y="108" width="1" height="1" fill="#0000ff" />
<rect x="287" y="105" width="2" height="1" fill="#0000ff" />
<rect x="268" y="107" width="2" height="2" fill="#0000ff" />
<rect x="276" y="107" width="2" height="1" fill="#0000ff" />
<rect x="274" y="106" width="1" height="2" fill="#0000ff" />
<rect x="266" y="108" width="1" height="2" fill="#0000ff" />
<rect x="264" y="107" width="3" height="1" fill="#0000ff" />
<rect x="263" y="104" width="2" height="2" fill="#0000ff" />
<rect x="265" y="105" width="1" height="1" fill="#0000ff" />
<rect x="262" y="105" width="2" height="2" fill="#0000ff" />
<rect x="261" y="99" width="2" height="2" fill="#0000ff" />
<rect x="255" y="96" width="1" height="1" fill="#0000ff" />
<rect x="252" y="94" width="3" height="1" fill="#0000ff" />
<rect x="248" y="95" width="3" height="2" fill="#0000ff" />
<rect x="256" y="96" width="2" height="2" fill="#0000ff" />
<rect x="257" y="96" width="2" height="2" fill="#0000ff" />
<rect x="242" y="101" width="1" height="1" fill="#0000ff" />
<rect x="245" y="98" width="1" height="1" fill="#0000ff" />
<rect x="242" y="98" width="2" height="2" fill="#0000ff" />
<rect x="246" y="96" width="2" height="2" fill="#0000ff" />
<rect x="236" y="99" width="2" height="1" fill="#0000ff" />
<rect x="241" y="98" width="2" height="1" fill="#0000ff" />
<rect x="236" y="97" width="2" height="1" fill="#0000ff" />
<rect x="229" y="92" width="1" height="1" fill="#0000ff" />
<rect x="229" y="91" width="2" height="2" fill="#0000ff" />
<rect x="232" y="94" width="2" height="2" fill="#0000ff" />
<rect x="225" y="85" width="2" height="2" fill="#0000ff" />
<rect x="223" y="85" width="2" height="1" fill="#0000ff" />
<rect x="225" y="85" width="3" height="2" fill="#0000ff" />
<polygon points="214.0,83.9 216.3,83.9 216.8,88.5 214.5,88.5" fill="#0000ff" />
<rect x="215" y="85" width="1" height="2" fill="#0000ff" />
<rect x="217" y="86" width="2" height="1" fill="#0000ff" />
<rect x="215" y="83" width="1" height="2" fill="#0000ff" />
<rect x="214" y="88" width="2" height="2" fill="#0000ff" />
<rect x="214" y="85" width="1" height="2" fill="#0000ff" />
<rect x="215" y="85" width="1" height="2" fill="#0000ff" />
<polygon points="254.4,74.9 257.5,74.9 257.5,78.7 254.4,78.7" fill="#0000ff" />
<rect x="254" y="72" width="3" height="2" fill="#0000ff" />
<rect x="255" y="78" width="2" height="1" fill="#0000ff" />
<rect x="255" y="76" width="2" height="2" fill="#0000ff" />
<rect x="254" y="76" width="2" height="1" fill="#0000ff" />
<polygon points="298.6,110.4 306.5,111.1 312.8,115.6 311.0,117.9 303.1,115.0" fill="#0000ff" />
<rect x="302" y="112" width="1" height="2" fill="#0000ff" />
<rect x="299" y="110" width="2" height="2" fill="#0000ff" />
<rect x="302" y="111" width="2" height="2" fill="#0000ff" />
<rect x="313" y="112" width="3" height="1" fill="#0000ff" />
<rect x="312" y="114" width="2" height="2" fill="#0000ff" />
<rect x="309" y="111" width="1" height="1" fill="#0000ff" />
<rect x="310" y="116" width="2" height="1" fill="#0000ff" />
<rect x="303" y="116" width="3" height="2" fill="#0000ff" />
<rect x="308" y="116" width="3" height="2" fill="#0000ff" />
<rect x="306" y="116" width="2" height="1" fill="#0000ff" />
<rect x="296" y="110" width="3" height="1" fill="#0000ff" />
<rect x="297" y="108" width="2" height="2" fill="#0000ff" />
<polygon points="320.1,116.1 326.9,112.9 333.7,115.6 330.3,120.6 323.5,120.6" fill="#0000ff" />
<rect x="322" y="116" width="1" height="2" fill="#0000ff" />
<rect x="326" y="113" width="2" height="1" fill="#0000ff" />
<rect x="320" y="115" width="2" height="1" fill="#0000ff" />
<rect x="332" y="114" width="2" height="2" fill="#0000ff" />
<rect x="333" y="115" width="2" height="2" fill="#0000ff" />
<rect x="328" y="112" width="2" height="2" fill="#0000ff" />
<rect x="330" y="120" width="2" height="1" fill="#0000ff" />
<rect x="331" y="116" width="2" height="2" fill="#0000ff" />
<rect x="324" y="119" width="3" height="1" fill="#0000ff" />
<rect x="327" y="118" width="3" height="2" fill="#0000ff" />
<rect x="329" y="121" width="3" height="2" fill="#0000ff" />
<rect x="321" y="118" width="2" height="2" fill="#0000ff" />
<rect x="321" y="118" width="2" height="1" fill="#0000ff" />
<polygon points="335.9,117.2 342.3,113.8 342.7,116.1 338.6,119.7" fill="#0000ff" />
<rect x="339" y="113" width="2" height="2" fill="#0000ff" />
<rect x="337" y="115" width="2" height="1" fill="#0000ff" />
<rect x="339" y="115" width="2" height="1" fill="#0000ff" />
<rect x="340" y="113" width="3" height="2" fill="#0000ff" />
<rect x="339" y="120" width="1" height="1" fill="#0000ff" />
<rect x="342" y="116" width="3" height="2" fill="#0000ff" />
<rect x="334" y="118" width="3" height="2" fill="#0000ff" />
<polygon points="230.6,120.6 236.2,118.8 241.9,120.6 240.8,124.7 234.0,125.2" fill="#0000ff" />
<rect x="230" y="119" width="1" height="2" fill="#0000ff" />
<rect x="235" y="120" width="1" height="2" fill="#0000ff" />
<rect x="239" y="119" width="1" height="2" fill="#0000ff" />
<rect x="240" y="119" width="3" height="2" fill="#0000ff" />
<rect x="239" y="122" width="2" height="2" fill="#0000ff" />
<rect x="239" y="122" width="2" height="2" fill="#0000ff" />
<rect x="237" y="125" width="2" height="2" fill="#0000ff" />
<rect x="236" y="122" width="3" height="2" fill="#0000ff" />
<rect x="229" y="120" width="3" height="1" fill="#0000ff" />
<rect x="233" y="124" width="2" height="2" fill="#0000ff" />
<polygon points="240.8,138.7 248.0,137.6 248.0,145.5 246.4,152.3 238.5,152.3 240.8,146.7" fill="#0000ff" />
<rect x="239" y="137" width="3" height="1" fill="#0000ff" />
<rect x="240" y="139" width="1" height="1" fill="#0000ff" />
<rect x="242" y="138" width="2" height="1" fill="#0000ff" />
<rect x="247" y="142" width="1" height="2" fill="#0000ff" />
<rect x="246" y="139" width="3" height="2" fill="#0000ff" />
<rect x="248" y="139" width="1" height="1" fill="#0000ff" />
<rect x="248" y="145" width="1" height="1" fill="#0000ff" />
<rect x="248" y="149" width="1" height="1" fill="#0000ff" />
<rect x="245" y="149" width="3" height="1" fill="#0000ff" />
<rect x="244" y="152" width="2" height="2" fill="#0000ff" />
<rect x="243" y="151" width="2" height="2" fill="#0000ff" />
<rect x="237" y="153" width="2" height="2" fill="#0000ff" />
<rect x="239" y="150" width="3" height="1" fill="#0000ff" />
<rect x="237" y="150" width="3" height="1" fill="#0000ff" />
<rect x="240" y="143" width="3" height="1" fill="#0000ff" />
<rect x="241" y="138" width="1" height="2" fill="#0000ff" />
<rect x="242" y="145" width="1" height="2" fill="#0000ff" />
<polygon points="269.1,145.5 272.9,142.8 277.0,147.8 275.9,154.6 270.7,153.5" fill="#0000ff" />
<rect x="269" y="146" width="1" height="2" fill="#0000ff" />
<rect x="272" y="144" width="2" height="1" fill="#0000ff" />
<rect x="276" y="147" width="1" height="1" fill="#0000ff" />
<rect x="274" y="146" width="3" height="2" fill="#0000ff" />
<rect x="276" y="153" width="2" height="2" fill="#0000ff" />
<rect x="277" y="149" width="2" height="2" fill="#0000ff" />
<rect x="277" y="149" width="1" height="2" fill="#0000ff" />
<rect x="275" y="153" width="1" height="2" fill="#0000ff" />
<rect x="274" y="153" width="3" height="1" fill="#0000ff" />
<rect x="268" y="144" width="1" height="2" fill="#0000ff" />
<rect x="270" y="148" width="2" height="1" fill="#0000ff" />
<rect x="270" y="150" width="1" height="2" fill="#0000ff" />
<polygon points="283.8,134.2 290.6,132.4 299.7,131.9 299.2,137.8 290.6,140.1 285.6,138.7" fill="#0000ff" />
<rect x="285" y="132" width="2" height="1" fill="#0000ff" />
<rect x="285" y="132" width="2" height="2" fill="#0000ff" />
<rect x="283" y="132" width="2" height="2" fill="#0000ff" />
<rect x="294" y="129" width="3" height="1" fill="#0000ff" />
<rect x="290" y="132" width="3" height="2" fill="#0000ff" />
<rect x="289" y="130" width="2" height="2" fill="#0000ff" />
<rect x="299" y="132" width="2" height="2" fill="#0000ff" />
<rect x="299" y="136" width="1" height="1" fill="#0000ff" />
<rect x="300" y="135" width="1" height="2" fill="#0000ff" />
<rect x="294" y="140" width="1" height="2" fill="#0000ff" />
<rect x="293" y="140" width="2" height="2" fill="#0000ff" />
<rect x="291" y="138" width="2" height="1" fill="#0000ff" />
<rect x="292" y="138" width="1" height="2" fill="#0000ff" />
<rect x="285" y="138" width="2" height="2" fill="#0000ff" />
<rect x="286" y="137" width="2" height="2" fill="#0000ff" />
<rect x="282" y="134" width="2" height="2" fill="#0000ff" />
<rect x="285" y="137" width="2" height="2" fill="#0000ff" />
<polygon points="262.3,134.7 269.1,134.2 270.2,138.3 264.6,138.7" fill="#0000ff" />
<rect x="264" y="133" width="1" height="2" fill="#0000ff" />
<rect x="267" y="134" width="3" height="2" fill="#0000ff" />
<rect x="268" y="133" width="1" height="1" fill="#0000ff" />
<rect x="270" y="137" width="1" height="2" fill="#0000ff" />
<rect x="265" y="138" width="2" height="2" fill="#0000ff" />
<rect x="268" y="139" width="1" height="2" fill="#0000ff" />
<rect x="263" y="137" width="2" height="2" fill="#0000ff" />
<rect x="264" y="138" width="3" height="2" fill="#0000ff" />
<polygon points="226.7,142.8 229.9,143.7 229.5,147.4 226.7,146.0" fill="#0000ff" />
<rect x="227" y="142" width="2" height="2" fill="#0000ff" />
<rect x="228" y="145" width="2" height="2" fill="#0000ff" />
<rect x="227" y="146" width="2" height="2" fill="#0000ff" />
<rect x="225" y="145" width="2" height="1" fill="#0000ff" />
<polygon points="305.3,136.5 308.7,128.6 322.3,126.3 330.3,125.2 333.7,130.8 345.0,127.4 345.0,123.8 351.8,125.2 358.6,129.7 368.8,132.4 381.2,134.2 397.1,130.8 399.4,136.5 417.5,138.7 431.1,141.0 436.7,146.7 435.6,156.9 431.1,165.9 433.3,184.1 434.5,193.1 426.6,196.5 417.5,192.0 410.7,186.3 399.4,177.3 392.6,168.2 381.2,163.7 374.4,165.9 368.8,172.3 363.1,167.1 356.3,163.7 349.5,165.9 345.0,160.3 338.2,153.5 345.0,147.8 335.9,144.4 326.9,147.8 322.3,156.9 313.3,159.1 306.5,163.7 299.7,167.1 294.0,159.1 292.9,150.1 300.8,147.8 308.7,152.3 315.5,147.8 313.3,142.1" fill="#0000ff" />
<rect x="308" y="129" width="2" height="1" fill="#0000ff" />
<rect x="306" y="134" width="2" height="2" fill="#0000ff" />
<rect x="306" y="132" width="2" height="2" fill="#0000ff" />
<rect x="313" y="124" width="3" height="2" fill="#0000ff" />
<rect x="311" y="127" width="3" height="1" fill="#0000ff" />
<rect x="318" y="124" width="2" height="2" fill="#0000ff" />
<rect x="314" y="127" width="1" height="1" fill="#0000ff" />
<rect x="316" y="127" width="1" height="1" fill="#0000ff" />
<rect x="319" y="126" width="2" height="1" fill="#0000ff" />
<rect x="330" y="126" width="1" height="1" fill="#0000ff" />
<rect x="324" y="124" width="2" height="2" fill="#0000ff" />
<rect x="329" y="123" width="2" height="2" fill="#0000ff" />
<rect x="331" y="130" width="2" height="2" fill="#0000ff" />
<rect x="330" y="126" width="2" height="2" fill="#0000ff" />
<rect x="331" y="126" width="1" height="1" fill="#0000ff" />
<rect x="334" y="131" width="2" height="2" fill="#0000ff" />
<rect x="336" y="129" width="1" height="2" fill="#0000ff" />
<rect x="344" y="127" width="1" height="2" fill="#0000ff" />
<rect x="344" y="126" width="2" height="2" fill="#0000ff" />
<rect x="337" y="127" width="2" height="1" fill="#0000ff" />
<rect x="343" y="126" width="1" height="2" fill="#0000ff" />
<rect x="349" y="124" width="2" height="2" fill="#0000ff" />
<rect x="342" y="121" width="3" height="2" fill="#0000ff" />
<rect x="349" y="122" width="2" height="2" fill="#0000ff" />
<rect x="354" y="126" width="2" height="2" fill="#0000ff" />
<rect x="351" y="124" width="2" height="2" fill="#0000ff" />
<rect x="351" y="126" width="2" height="1" fill="#0000ff" />
<rect x="358" y="129" width="3" height="1" fill="#0000ff" />
<rect x="357" y="129" width="2" height="2" fill="#0000ff" />
<rect x="367" y="129" width="2" height="2" fill="#0000ff" />
<rect x="363" y="131" width="3" height="1" fill="#0000ff" />
<rect x="369" y="131" width="1" height="2" fill="#0000ff" />
<rect x="370" y="134" width="1" height="1" fill="#0000ff" />
<rect x="375" y="131" width="3" height="1" fill="#0000ff" />
<rect x="374" y="132" width="3" height="2" fill="#0000ff" />
<rect x="370" y="132" width="1" height="2" fill="#0000ff" />
<rect x="393" y="128" width="3" height="2" fill="#0000ff" />
<rect x="393" y="131" width="2" height="1" fill="#0000ff" />
<rect x="396" y="131" width="1" height="2" fill="#0000ff" />
<rect x="396" y="132" width="2" height="2" fill="#0000ff" />
<rect x="382" y="134" width="2" height="2" fill="#0000ff" />
<rect x="392" y="131" width="1" height="1" fill="#0000ff" />
<rect x="384" y="133" width="2" height="2" fill="#0000ff" />
<rect x="397" y="135" width="2" height="2" fill="#0000ff" />
<rect x="398" y="135" width="3" height="2" fill="#0000ff" />
<rect x="414" y="138" width="3" height="2" fill="#0000ff" />
<rect x="403" y="136" width="3" height="2" fill="#0000ff" />
<rect x="410" y="136" width="1" height="1" fill="#0000ff" />
<rect x="401" y="135" width="2" height="2" fill="#0000ff" />
<rect x="398" y="137" width="1" height="2" fill="#0000ff" />
<rect x="398" y="137" width="2" height="1" fill="#0000ff" />
<rect x="415" y="139" width="1" height="2" fill="#0000ff" />
<rect x="415" y="137" width="1" height="1" fill="#0000ff" />
<rect x="419" y="139" width="1" height="2" fill="#0000ff" />
<rect x="425" y="138" width="2" height="2" fill="#0000ff" />
<rect x="421" y="137" width="2" height="2" fill="#0000ff" />
<rect x="417" y="139" width="3" height="2" fill="#0000ff" />
<rect x="423" y="138" width="3" height="2" fill="#0000ff" />
<rect x="427" y="140" width="2" height="2" fill="#0000ff" />
<rect x="434" y="146" width="2" height="2" fill="#0000ff" />
<rect x="430" y="141" width="1" height="1" fill="#0000ff" />
<rect x="431" y="143" width="2" height="2" fill="#0000ff" />
<rect x="437" y="152" width="2" height="2" fill="#0000ff" />
<rect x="436" y="153" width="2" height="1" fill="#0000ff" />
<rect x="436" y="156" width="1" height="2" fill="#0000ff" />
<rect x="435" y="151" width="1" height="2" fill="#0000ff" />
<rect x="429" y="163" width="2" height="2" fill="#0000ff" />
<rect x="431" y="164" width="2" height="2" fill="#0000ff" />
<rect x="435" y="158" width="1" height="2" fill="#0000ff" />
<rect x="432" y="162" width="3" height="2" fill="#0000ff" />
<rect x="431" y="175" width="2" height="2" fill="#0000ff" />
<rect x="430" y="170" width="2" height="2" fill="#0000ff" />
<rect x="430" y="169" width="2" height="2" fill="#0000ff" />
<rect x="430" y="167" width="2" height="1" fill="#0000ff" />
<rect x="433" y="169" width="1" height="1" fill="#0000ff" />
<rect x="431" y="182" width="2" height="2" fill="#0000ff" />
<rect x="432" y="178" width="1" height="2" fill="#0000ff" />
<rect x="430" y="167" width="3" height="2" fill="#0000ff" />
<rect x="433" y="189" width="3" height="1" fill="#0000ff" />
<rect x="433" y="184" width="2" height="2" fill="#0000ff" />
<rect x="433" y="190" width="2" height="2" fill="#0000ff" />
<rect x="434" y="190" width="2" height="2" fill="#0000ff" />
<rect x="431" y="193" width="2" height="2" fill="#0000ff" />
<rect x="429" y="193" width="3" height="2" fill="#0000ff" />
<rect x="426" y="195" width="3" height="2" fill="#0000ff" />
<rect x="427" y="195" width="2" height="2" fill="#0000ff" />
<rect x="422" y="196" width="1" height="1" fill="#0000ff" />
<rect x="422" y="195" width="2" height="2" fill="#0000ff" />
<rect x="424" y="194" width="2" height="2" fill="#0000ff" />
<rect x="412" y="189" width="2" height="2" fill="#0000ff" />
<rect x="415" y="189" width="2" height="2" fill="#0000ff" />
<rect x="414" y="189" width="2" height="2" fill="#0000ff" />
<rect x="416" y="191" width="1" height="1" fill="#0000ff" />
<rect x="405" y="182" width="2" height="2" fill="#0000ff" />
<rect x="406" y="184" width="2" height="2" fill="#0000ff" />
<rect x="404" y="183" width="1" height="2" fill="#0000ff" />
<rect x="408" y="184" width="2" height="2" fill="#0000ff" />
<rect x="403" y="180" width="3" height="2" fill="#0000ff" />
<rect x="399" y="176" width="3" height="2" fill="#0000ff" />
<rect x="392" y="170" width="2" height="2" fill="#0000ff" />
<rect x="394" y="171" width="2" height="2" fill="#0000ff" />
<rect x="396" y="173" width="3" height="2" fill="#0000ff" />
<rect x="395" y="170" width="2" height="2" fill="#0000ff" />
<rect x="399" y="177" width="2" height="2" fill="#0000ff" />
<rect x="383" y="162" width="1" height="1" fill="#0000ff" />
<rect x="382" y="163" width="1" height="2" fill="#0000ff" />
<rect x="389" y="167" width="2" height="1" fill="#0000ff" />
<rect x="389" y="167" width="1" height="2" fill="#0000ff" />
<rect x="382" y="164" width="2" height="1" fill="#0000ff" />
<rect x="375" y="162" width="3" height="2" fill="#0000ff" />
<rect x="374" y="164" width="2" height="1" fill="#0000ff" />
<rect x="377" y="164" width="2" height="2" fill="#0000ff" />
<rect x="371" y="169" width="1" height="1" fill="#0000ff" />
<rect x="369" y="170" width="2" height="2" fill="#0000ff" />
<rect x="372" y="169" width="1" height="1" fill="#0000ff" />
<rect x="365" y="167" width="1" height="2" fill="#0000ff" />
<rect x="366" y="169" width="1" height="2" fill="#0000ff" />
<rect x="366" y="168" width="2" height="2" fill="#0000ff" />
<rect x="358" y="163" width="2" height="2" fill="#0000ff" />
<rect x="359" y="165" width="2" height="2" fill="#0000ff" />
<rect x="359" y="165" width="2" height="2" fill="#0000ff" />
<rect x="353" y="163" width="2" height="2" fill="#0000ff" />
<rect x="353" y="164" width="1" height="2" fill="#0000ff" />
<rect x="355" y="162" width="1" height="1" fill="#0000ff" />
<rect x="347" y="163" width="1" height="2" fill="#0000ff" />
<rect x="345" y="162" width="3" height="2" fill="#0000ff" />
<rect x="343" y="160" width="3" height="2" fill="#0000ff" />
<rect x="344" y="159" width="1" height="1" fill="#0000ff" />
<rect x="344" y="159" width="2" height="1" fill="#0000ff" />
<rect x="341" y="155" width="1" height="2" fill="#0000ff" />
<rect x="345" y="158" width="2" height="2" fill="#0000ff" />
<rect x="344" y="148" width="1" height="2" fill="#0000ff" />
<rect x="338" y="153" width="1" height="2" fill="#0000ff" />
<rect x="339" y="148" width="3" height="2" fill="#0000ff" />
<rect x="341" y="147" width="3" height="2" fill="#0000ff" />
<rect x="340" y="146" width="3" height="2" fill="#0000ff" />
<rect x="338" y="145" width="2" height="2" fill="#0000ff" />
<rect x="343" y="148" width="1" height="1" fill="#0000ff" />
<rect x="341" y="146" width="2" height="2" fill="#0000ff" />
<rect x="330" y="147" width="1" height="2" fill="#0000ff" />
<rect x="329" y="148" width="1" height="2" fill="#0000ff" />
<rect x="330" y="145" width="2" height="1" fill="#0000ff" />
<rect x="327" y="145" width="1" height="2" fill="#0000ff" />
<rect x="325" y="148" width="3" height="2" fill="#0000ff" />
<rect x="325" y="147" width="3" height="2" fill="#0000ff" />
<rect x="322" y="154" width="2" height="2" fill="#0000ff" />
<rect x="326" y="148" width="3" height="2" fill="#0000ff" />
<rect x="315" y="157" width="1" height="2" fill="#0000ff" />
<rect x="313" y="159" width="2" height="2" fill="#0000ff" />
<rect x="313" y="156" width="2" height="2" fill="#0000ff" />
<rect x="318" y="156" width="3" height="2" fill="#0000ff" />
<rect x="307" y="162" width="1" height="2" fill="#0000ff" />
<rect x="311" y="160" width="1" height="2" fill="#0000ff" />
<rect x="308" y="163" width="2" height="2" fill="#0000ff" />
<rect x="299" y="166" width="3" height="2" fill="#0000ff" />
<rect x="301" y="164" width="3" height="1" fill="#0000ff" />
<rect x="301" y="167" width="2" height="2" fill="#0000ff" />
<rect x="298" y="166" width="2" height="2" fill="#0000ff" />
<rect x="296" y="160" width="1" height="2" fill="#0000ff" />
<rect x="295" y="159" width="2" height="2" fill="#0000ff" />
<rect x="297" y="163" width="2" height="1" fill="#0000ff" />
<rect x="294" y="157" width="2" height="2" fill="#0000ff" />
<rect x="293" y="150" width="3" height="2" fill="#0000ff" />
<rect x="292" y="151" width="1" height="1" fill="#0000ff" />
<rect x="292" y="155" width="1" height="1" fill="#0000ff" />
<rect x="293" y="150" width="3" height="2" fill="#0000ff" />
<rect x="295" y="148" width="3" height="1" fill="#0000ff" />
<rect x="300" y="148" width="2" height="2" fill="#0000ff" />
<rect x="305" y="152" width="3" height="1" fill="#0000ff" />
<rect x="298" y="146" width="3" height="2" fill="#0000ff" />
<rect x="308" y="149" width="3" height="1" fill="#0000ff" />
<rect x="304" y="149" width="2" height="2" fill="#0000ff" />
<rect x="310" y="151" width="2" height="2" fill="#0000ff" />
<rect x="313" y="147" width="2" height="1" fill="#0000ff" />
<rect x="308" y="151" width="1" height="1" fill="#0000ff" />
<rect x="313" y="146" width="3" height="1" fill="#0000ff" />
<rect x="314" y="145" width="2" height="2" fill="#0000ff" />
<rect x="307" y="137" width="1" height="2" fill="#0000ff" />
<rect x="308" y="138" width="3" height="2" fill="#0000ff" />
<rect x="311" y="140" width="1" height="2" fill="#0000ff" />
<rect x="306" y="136" width="2" height="1" fill="#0000ff" />
<polygon points="335.9,156.9 347.3,159.6 356.3,163.2 347.3,168.6 338.2,167.3 329.6,167.7 324.2,175.0 328.0,182.2 335.9,181.3 343.2,188.1 358.6,186.3 381.2,188.6 386.2,193.1 385.8,199.9 333.7,199.9 331.4,188.6 323.5,182.2 321.2,173.9 326.9,164.8" fill="#0000ff" />
<rect x="347" y="160" width="2" height="2" fill="#0000ff" />
<rect x="348" y="159" width="1" height="2" fill="#0000ff" />
<rect x="337" y="156" width="2" height="2" fill="#0000ff" />
<rect x="336" y="156" width="1" height="1" fill="#0000ff" />
<rect x="343" y="157" width="2" height="2" fill="#0000ff" />
<rect x="349" y="159" width="2" height="2" fill="#0000ff" />
<rect x="352" y="160" width="3" height="2" fill="#0000ff" />
<rect x="349" y="158" width="2" height="2" fill="#0000ff" />
<rect x="350" y="160" width="2" height="2" fill="#0000ff" />
<rect x="351" y="164" width="2" height="1" fill="#0000ff" />
<rect x="352" y="163" width="2" height="1" fill="#0000ff" />
<rect x="345" y="169" width="2" height="2" fill="#0000ff" />
<rect x="352" y="164" width="2" height="1" fill="#0000ff" />
<rect x="342" y="167" width="2" height="2" fill="#0000ff" />
<rect x="346" y="167" width="2" height="2" fill="#0000ff" />
<rect x="344" y="168" width="3" height="2" fill="#0000ff" />
<rect x="344" y="168" width="2" height="2" fill="#0000ff" />
<rect x="332" y="167" width="3" height="2" fill="#0000ff" />
<rect x="329" y="166" width="2" height="2" fill="#0000ff" />
<rect x="329" y="165" width="3" height="1" fill="#0000ff" />
<rect x="323" y="172" width="2" height="1" fill="#0000ff" />
<rect x="328" y="169" width="1" height="2" fill="#0000ff" />
<rect x="326" y="171" width="1" height="2" fill="#0000ff" />
<rect x="326" y="173" width="2" height="2" fill="#0000ff" />
<rect x="327" y="182" width="2" height="1" fill="#0000ff" />
<rect x="327" y="181" width="2" height="1" fill="#0000ff" />
<rect x="323" y="176" width="2" height="1" fill="#0000ff" />
<rect x="330" y="183" width="1" height="1" fill="#0000ff" />
<rect x="335" y="179" width="3" height="2" fill="#0000ff" />
<rect x="329" y="181" width="1" height="2" fill="#0000ff" />
<rect x="336" y="181" width="2" height="1" fill="#0000ff" />
<rect x="336" y="180" width="2" height="1" fill="#0000ff" />
<rect x="336" y="182" width="2" height="1" fill="#0000ff" />
<rect x="342" y="187" width="1" height="2" fill="#0000ff" />
<rect x="355" y="184" width="3" height="1" fill="#0000ff" />
<rect x="356" y="187" width="2" height="2" fill="#0000ff" />
<rect x="354" y="186" width="2" height="1" fill="#0000ff" />
<rect x="357" y="184" width="1" height="2" fill="#0000ff" />
<rect x="345" y="186" width="1" height="1" fill="#0000ff" />
<rect x="345" y="187" width="3" height="2" fill="#0000ff" />
<rect x="345" y="189" width="1" height="1" fill="#0000ff" />
<rect x="378" y="189" width="2" height="2" fill="#0000ff" />
<rect x="371" y="187" width="2" height="1" fill="#0000ff" />
<rect x="369" y="188" width="2" height="1" fill="#0000ff" />
<rect x="365" y="185" width="2" height="1" fill="#0000ff" />
<rect x="369" y="186" width="1" height="2" fill="#0000ff" />
<rect x="360" y="185" width="2" height="2" fill="#0000ff" />
<rect x="361" y="186" width="3" height="2" fill="#0000ff" />
<rect x="372" y="187" width="2" height="2" fill="#0000ff" />
<rect x="377" y="187" width="2" height="1" fill="#0000ff" />
<rect x="362" y="185" width="3" height="2" fill="#0000ff" />
<rect x="384" y="188" width="2" height="2" fill="#0000ff" />
<rect x="383" y="189" width="2" height="2" fill="#0000ff" />
<rect x="379" y="188" width="2" height="2" fill="#0000ff" />
<rect x="385" y="198" width="2" height="2" fill="#0000ff" />
<rect x="385" y="199" width="2" height="2" fill="#0000ff" />
<rect x="385" y="195" width="2" height="2" fill="#0000ff" />
<rect x="380" y="200" width="3" height="2" fill="#0000ff" />
<rect x="345" y="200" width="2" height="2" fill="#0000ff" />
<rect x="338" y="200" width="1" height="2" fill="#0000ff" />
<rect x="366" y="198" width="2" height="2" fill="#0000ff" />
<rect x="352" y="198" width="3" height="2" fill="#0000ff" />
<rect x="346" y="198" width="3" height="2" fill="#0000ff" />
<rect x="368" y="200" width="3" height="2" fill="#0000ff" />
<rect x="361" y="198" width="2" height="2" fill="#0000ff" />
<rect x="355" y="198" width="2" height="2" fill="#0000ff" />
<rect x="335" y="198" width="2" height="1" fill="#0000ff" />
<rect x="336" y="201" width="1" height="1" fill="#0000ff" />
<rect x="373" y="198" width="2" height="2" fill="#0000ff" />
<rect x="352" y="199" width="3" height="2" fill="#0000ff" />
<rect x="359" y="199" width="3" height="1" fill="#0000ff" />
<rect x="350" y="198" width="2" height="2" fill="#0000ff" />
<rect x="364" y="199" width="2" height="2" fill="#0000ff" />
<rect x="359" y="199" width="2" height="2" fill="#0000ff" />
<rect x="358" y="198" width="2" height="2" fill="#0000ff" />
<rect x="335" y="199" width="1" height="2" fill="#0000ff" />
<rect x="338" y="199" width="3" height="2" fill="#0000ff" />
<rect x="376" y="199" width="2" height="2" fill="#0000ff" />
<rect x="376" y="199" width="2" height="2" fill="#0000ff" />
<rect x="333" y="197" width="3" height="1" fill="#0000ff" />
<rect x="331" y="191" width="1" height="2" fill="#0000ff" />
<rect x="331" y="193" width="1" height="1" fill="#0000ff" />
<rect x="333" y="197" width="2" height="2" fill="#0000ff" />
<rect x="333" y="196" width="1" height="1" fill="#0000ff" />
<rect x="331" y="197" width="3" height="2" fill="#0000ff" />
<rect x="328" y="185" width="2" height="1" fill="#0000ff" />
<rect x="324" y="182" width="2" height="2" fill="#0000ff" />
<rect x="331" y="187" width="2" height="1" fill="#0000ff" />
<rect x="326" y="183" width="3" height="2" fill="#0000ff" />
<rect x="319" y="173" width="2" height="1" fill="#0000ff" />
<rect x="321" y="180" width="2" height="2" fill="#0000ff" />
<rect x="323" y="181" width="3" height="2" fill="#0000ff" />
<rect x="323" y="173" width="1" height="1" fill="#0000ff" />
<rect x="324" y="166" width="3" height="2" fill="#0000ff" />
<rect x="323" y="168" width="2" height="1" fill="#0000ff" />
<rect x="321" y="170" width="2" height="2" fill="#0000ff" />
<rect x="329" y="159" width="3" height="2" fill="#0000ff" />
<rect x="328" y="159" width="2" height="2" fill="#0000ff" />
<rect x="327" y="161" width="2" height="2" fill="#0000ff" />
<rect x="327" y="163" width="2" height="1" fill="#0000ff" />
<rect x="331" y="157" width="2" height="2" fill="#0000ff" />
<polygon points="338.2,168.2 349.5,170.5 350.7,177.3 342.7,181.3 335.9,177.3" fill="#0000ff" />
<rect x="343" y="169" width="2" height="2" fill="#0000ff" />
<rect x="342" y="168" width="2" height="2" fill="#0000ff" />
<rect x="347" y="168" width="3" height="2" fill="#0000ff" />
<rect x="339" y="166" width="3" height="2" fill="#0000ff" />
<rect x="349" y="169" width="2" height="1" fill="#0000ff" />
<rect x="348" y="175" width="2" height="2" fill="#0000ff" />
<rect x="349" y="175" width="2" height="2" fill="#0000ff" />
<rect x="349" y="170" width="2" height="2" fill="#0000ff" />
<rect x="349" y="176" width="2" height="2" fill="#0000ff" />
<rect x="343" y="181" width="1" height="1" fill="#0000ff" />
<rect x="348" y="177" width="2" height="2" fill="#0000ff" />
<rect x="343" y="180" width="2" height="2" fill="#0000ff" />
<rect x="340" y="181" width="2" height="2" fill="#0000ff" />
<rect x="342" y="180" width="3" height="2" fill="#0000ff" />
<rect x="334" y="176" width="2" height="2" fill="#0000ff" />
<rect x="338" y="169" width="1" height="2" fill="#0000ff" />
<rect x="334" y="174" width="3" height="2" fill="#0000ff" />
<rect x="334" y="176" width="2" height="2" fill="#0000ff" />
<rect x="337" y="169" width="2" height="2" fill="#0000ff" />
<polygon points="374.4,165.9 383.5,165.9 384.6,170.0 376.7,171.6" fill="#0000ff" />
<rect x="380" y="167" width="1" height="2" fill="#0000ff" />
<rect x="375" y="167" width="1" height="1" fill="#0000ff" />
<rect x="378" y="164" width="2" height="2" fill="#0000ff" />
<rect x="381" y="166" width="2" height="2" fill="#0000ff" />
<rect x="382" y="168" width="3" height="2" fill="#0000ff" />
<rect x="378" y="171" width="3" height="2" fill="#0000ff" />
<rect x="384" y="169" width="2" height="2" fill="#0000ff" />
<rect x="376" y="171" width="2" height="1" fill="#0000ff" />
<rect x="376" y="168" width="2" height="1" fill="#0000ff" />
<rect x="373" y="165" width="1" height="1" fill="#0000ff" />
<polygon points="321.8,172.2 329.2,165.6 339.1,164.0 352.2,156.6 365.3,164.8 371.9,166.9 385.0,165.3 394.8,172.2 378.4,170.5 368.6,173.0 358.8,177.1 348.9,178.8 343.2,182.9 345.6,187.0 334.1,185.3 327.6,178.8 321.8,177.1" fill="#0000ff" />
<rect x="324" y="167" width="3" height="2" fill="#0000ff" />
<rect x="325" y="166" width="3" height="1" fill="#0000ff" />
<rect x="327" y="164" width="2" height="2" fill="#0000ff" />
<rect x="324" y="168" width="3" height="1" fill="#0000ff" />
<rect x="333" y="165" width="3" height="1" fill="#0000ff" />
<rect x="329" y="164" width="2" height="1" fill="#0000ff" />
<rect x="328" y="164" width="2" height="2" fill="#0000ff" />
<rect x="337" y="163" width="2" height="2" fill="#0000ff" />
<rect x="338" y="160" width="3" height="1" fill="#0000ff" />
<rect x="347" y="158" width="2" height="1" fill="#0000ff" />
<rect x="348" y="158" width="2" height="1" fill="#0000ff" />
<rect x="341" y="160" width="2" height="2" fill="#0000ff" />
<rect x="340" y="159" width="3" height="1" fill="#0000ff" />
<rect x="341" y="161" width="2" height="1" fill="#0000ff" />
<rect x="363" y="163" width="2" height="2" fill="#0000ff" />
<rect x="355" y="157" width="2" height="1" fill="#0000ff" />
<rect x="358" y="161" width="2" height="1" fill="#0000ff" />
<rect x="351" y="156" width="3" height="1" fill="#0000ff" />
<rect x="364" y="163" width="2" height="2" fill="#0000ff" />
<rect x="360" y="159" width="2" height="1" fill="#0000ff" />
<rect x="354" y="157" width="1" height="2" fill="#0000ff" />
<rect x="367" y="165" width="1" height="2" fill="#0000ff" />
<rect x="371" y="165" width="2" height="1" fill="#0000ff" />
<rect x="369" y="165" width="2" height="1" fill="#0000ff" />
<rect x="377" y="166" width="2" height="2" fill="#0000ff" />
<rect x="375" y="166" width="2" height="2" fill="#0000ff" />
<rect x="372" y="165" width="3" height="2" fill="#0000ff" />
<rect x="384" y="165" width="3" height="2" fill="#0000ff" />
<rect x="380" y="164" width="2" height="2" fill="#0000ff" />
<rect x="380" y="165" width="2" height="2" fill="#0000ff" />
<rect x="390" y="170" width="1" height="1" fill="#0000ff" />
<rect x="387" y="166" width="2" height="2" fill="#0000ff" />
<rect x="390" y="170" width="2" height="2" fill="#0000ff" />
<rect x="386" y="165" width="2" height="1" fill="#0000ff" />
<rect x="393" y="172" width="2" height="2" fill="#0000ff" />
<rect x="382" y="170" width="3" height="1" fill="#0000ff" />
<rect x="384" y="171" width="1" height="2" fill="#0000ff" />
<rect x="385" y="169" width="3" height="2" fill="#0000ff" />
<rect x="393" y="173" width="1" height="2" fill="#0000ff" />
<rect x="378" y="168" width="3" height="2" fill="#0000ff" />
<rect x="393" y="172" width="1" height="1" fill="#0000ff" />
<rect x="389" y="171" width="1" height="2" fill="#0000ff" />
<rect x="377" y="171" width="3" height="2" fill="#0000ff" />
<rect x="376" y="172" width="1" height="2" fill="#0000ff" />
<rect x="367" y="171" width="2" height="1" fill="#0000ff" />
<rect x="375" y="172" width="1" height="2" fill="#0000ff" />
<rect x="366" y="173" width="2" height="2" fill="#0000ff" />
<rect x="364" y="174" width="2" height="2" fill="#0000ff" />
<rect x="365" y="172" width="2" height="2" fill="#0000ff" />
<rect x="364" y="171" width="3" height="1" fill="#0000ff" />
<rect x="350" y="176" width="2" height="1" fill="#0000ff" />
<rect x="357" y="177" width="3" height="1" fill="#0000ff" />
<rect x="351" y="179" width="2" height="2" fill="#0000ff" />
<rect x="357" y="175" width="3" height="1" fill="#0000ff" />
<rect x="341" y="180" width="3" height="2" fill="#0000ff" />
<rect x="343" y="182" width="2" height="2" fill="#0000ff" />
<rect x="344" y="180" width="2" height="1" fill="#0000ff" />
<rect x="342" y="183" width="2" height="2" fill="#0000ff" />
<rect x="344" y="183" width="2" height="2" fill="#0000ff" />
<rect x="345" y="186" width="1" height="1" fill="#0000ff" />
<rect x="341" y="184" width="2" height="2" fill="#0000ff" />
<rect x="336" y="184" width="2" height="2" fill="#0000ff" />
<rect x="339" y="187" width="1" height="2" fill="#0000ff" />
<rect x="332" y="183" width="3" height="2" fill="#0000ff" />
<rect x="328" y="181" width="2" height="1" fill="#0000ff" />
<rect x="328" y="181" width="2" height="2" fill="#0000ff" />
<rect x="326" y="179" width="3" height="2" fill="#0000ff" />
<rect x="332" y="183" width="3" height="2" fill="#0000ff" />
<rect x="324" y="176" width="2" height="1" fill="#0000ff" />
<rect x="324" y="178" width="3" height="2" fill="#0000ff" />
<rect x="321" y="173" width="2" height="2" fill="#0000ff" />
<rect x="320" y="175" width="2" height="1" fill="#0000ff" />
<polygon points="291.5,147.6 298.0,146.8 306.3,152.5 316.1,149.2 317.7,144.3 334.1,142.7 334.1,147.6 325.9,152.5 321.0,159.1 312.8,157.4 304.6,165.6 298.0,165.6 293.9,157.4" fill="#0000ff" />
<rect x="297" y="144" width="2" height="2" fill="#0000ff" />
<rect x="295" y="145" width="3" height="2" fill="#0000ff" />
<rect x="295" y="146" width="2" height="2" fill="#0000ff" />
<rect x="305" y="152" width="2" height="1" fill="#0000ff" />
<rect x="302" y="149" width="2" height="2" fill="#0000ff" />
<rect x="299" y="146" width="2" height="2" fill="#0000ff" />
<rect x="297" y="145" width="1" height="2" fill="#0000ff" />
<rect x="308" y="150" width="1" height="2" fill="#0000ff" />
<rect x="307" y="150" width="1" height="2" fill="#0000ff" />
<rect x="310" y="151" width="2" height="1" fill="#0000ff" />
<rect x="315" y="147" width="2" height="2" fill="#0000ff" />
<rect x="317" y="145" width="1" height="1" fill="#0000ff" />
<rect x="317" y="146" width="1" height="2" fill="#0000ff" />
<rect x="328" y="142" width="1" height="1" fill="#0000ff" />
<rect x="319" y="144" width="1" height="2" fill="#0000ff" />
<rect x="330" y="142" width="2" height="2" fill="#0000ff" />
<rect x="333" y="141" width="2" height="2" fill="#0000ff" />
<rect x="323" y="142" width="3" height="2" fill="#0000ff" />
<rect x="321" y="144" width="2" height="2" fill="#0000ff" />
<rect x="317" y="144" width="2" height="1" fill="#0000ff" />
<rect x="333" y="148" width="1" height="1" fill="#0000ff" />
<rect x="332" y="145" width="2" height="2" fill="#0000ff" />
<rect x="326" y="151" width="2" height="1" fill="#0000ff" />
<rect x="328" y="152" width="1" height="2" fill="#0000ff" />
<rect x="325" y="151" width="3" height="1" fill="#0000ff" />
<rect x="327" y="150" width="3" height="1" fill="#0000ff" />
<rect x="325" y="153" width="1" height="1" fill="#0000ff" />
<rect x="322" y="157" width="2" height="1" fill="#0000ff" />
<rect x="323" y="154" width="3" height="2" fill="#0000ff" />
<rect x="314" y="156" width="2" height="2" fill="#0000ff" />
<rect x="315" y="156" width="3" height="2" fill="#0000ff" />
<rect x="319" y="158" width="2" height="2" fill="#0000ff" />
<rect x="306" y="163" width="2" height="2" fill="#0000ff" />
<rect x="309" y="159" width="2" height="1" fill="#0000ff" />
<rect x="310" y="161" width="2" height="2" fill="#0000ff" />
<rect x="312" y="158" width="2" height="1" fill="#0000ff" />
<rect x="307" y="162" width="2" height="2" fill="#0000ff" />
<rect x="301" y="164" width="1" height="1" fill="#0000ff" />
<rect x="297" y="166" width="1" height="1" fill="#0000ff" />
<rect x="294" y="160" width="3" height="2" fill="#0000ff" />
<rect x="292" y="156" width="1" height="1" fill="#0000ff" />
<rect x="297" y="164" width="1" height="2" fill="#0000ff" />
<rect x="299" y="164" width="1" height="1" fill="#0000ff" />
<rect x="293" y="148" width="1" height="1" fill="#0000ff" />
<rect x="293" y="155" width="1" height="2" fill="#0000ff" />
<rect x="292" y="154" width="2" height="1" fill="#0000ff" />
<rect x="293" y="148" width="1" height="2" fill="#0000ff" />
<polygon points="371.1,163.2 385.0,162.0 394.8,166.9 398.9,173.5 385.0,166.3 371.1,167.9" fill="#0000ff" />
<rect x="379" y="161" width="1" height="1" fill="#0000ff" />
<rect x="377" y="162" width="2" height="2" fill="#0000ff" />
<rect x="371" y="163" width="2" height="2" fill="#0000ff" />
<rect x="374" y="163" width="2" height="2" fill="#0000ff" />
<rect x="376" y="161" width="2" height="2" fill="#0000ff" />
<rect x="382" y="163" width="1" height="1" fill="#0000ff" />
<rect x="391" y="163" width="3" height="1" fill="#0000ff" />
<rect x="393" y="164" width="1" height="2" fill="#0000ff" />
<rect x="385" y="160" width="3" height="2" fill="#0000ff" />
<rect x="390" y="164" width="3" height="2" fill="#0000ff" />
<rect x="390" y="163" width="3" height="1" fill="#0000ff" />
<rect x="398" y="173" width="2" height="2" fill="#0000ff" />
<rect x="396" y="166" width="2" height="1" fill="#0000ff" />
<rect x="397" y="169" width="2" height="2" fill="#0000ff" />
<rect x="385" y="166" width="3" height="2" fill="#0000ff" />
<rect x="394" y="172" width="2" height="2" fill="#0000ff" />
<rect x="394" y="171" width="2" height="1" fill="#0000ff" />
<rect x="387" y="168" width="1" height="2" fill="#0000ff" />
<rect x="394" y="171" width="1" height="2" fill="#0000ff" />
<rect x="395" y="170" width="2" height="2" fill="#0000ff" />
<rect x="387" y="167" width="1" height="2" fill="#0000ff" />
<rect x="380" y="166" width="3" height="2" fill="#0000ff" />
<rect x="378" y="167" width="2" height="1" fill="#0000ff" />
<rect x="374" y="166" width="2" height="2" fill="#0000ff" />
<rect x="379" y="166" width="1" height="2" fill="#0000ff" />
<rect x="381" y="164" width="2" height="2" fill="#0000ff" />
<rect x="373" y="166" width="2" height="2" fill="#0000ff" />
<rect x="369" y="164" width="1" height="1" fill="#0000ff" />
<rect x="372" y="166" width="2" height="1" fill="#0000ff" />
<polygon points="323.0,172.2 329.2,177.1 329.2,182.0 325.1,180.4" fill="#0000ff" />
<rect x="326" y="173" width="2" height="2" fill="#0000ff" />
<rect x="325" y="173" width="2" height="2" fill="#0000ff" />
<rect x="326" y="176" width="2" height="1" fill="#0000ff" />
<rect x="327" y="178" width="3" height="2" fill="#0000ff" />
<rect x="328" y="180" width="1" height="1" fill="#0000ff" />
<rect x="325" y="179" width="3" height="2" fill="#0000ff" />
<rect x="323" y="178" width="3" height="2" fill="#0000ff" />
<rect x="325" y="177" width="2" height="2" fill="#0000ff" />
<rect x="324" y="179" width="2" height="2" fill="#0000ff" />
<rect x="324" y="177" width="1" height="1" fill="#0000ff" />
<polygon points="424.3,126.3 431.1,120.6 440.1,118.8 446.9,114.3 453.7,108.2 460.5,103.6 467.3,102.5 465.1,106.6 456.0,112.0 451.9,118.8 444.7,121.8 435.6,122.9 426.6,128.8" fill="#0000ff" />
<rect x="429" y="118" width="3" height="1" fill="#0000ff" />
<rect x="428" y="120" width="2" height="2" fill="#0000ff" />
<rect x="426" y="123" width="3" height="2" fill="#0000ff" />
<rect x="424" y="123" width="2" height="2" fill="#0000ff" />
<rect x="433" y="117" width="2" height="2" fill="#0000ff" />
<rect x="432" y="118" width="2" height="2" fill="#0000ff" />
<rect x="435" y="119" width="2" height="2" fill="#0000ff" />
<rect x="432" y="119" width="2" height="2" fill="#0000ff" />
<rect x="439" y="117" width="2" height="2" fill="#0000ff" />
<rect x="444" y="114" width="2" height="1" fill="#0000ff" />
<rect x="443" y="116" width="2" height="1" fill="#0000ff" />
<rect x="449" y="110" width="2" height="1" fill="#0000ff" />
<rect x="449" y="111" width="2" height="2" fill="#0000ff" />
<rect x="450" y="110" width="2" height="1" fill="#0000ff" />
<rect x="447" y="114" width="1" height="1" fill="#0000ff" />
<rect x="457" y="104" width="2" height="1" fill="#0000ff" />
<rect x="459" y="103" width="3" height="1" fill="#0000ff" />
<rect x="458" y="103" width="2" height="2" fill="#0000ff" />
<rect x="464" y="103" width="2" height="2" fill="#0000ff" />
<rect x="459" y="104" width="1" height="2" fill="#0000ff" />
<rect x="462" y="103" width="3" height="2" fill="#0000ff" />
<rect x="467" y="105" width="2" height="1" fill="#0000ff" />
<rect x="466" y="103" width="2" height="2" fill="#0000ff" />
<rect x="458" y="110" width="2" height="2" fill="#0000ff" />
<rect x="455" y="111" width="2" height="2" fill="#0000ff" />
<rect x="455" y="110" width="2" height="1" fill="#0000ff" />
<rect x="459" y="108" width="2" height="2" fill="#0000ff" />
<rect x="454" y="112" width="1" height="2" fill="#0000ff" />
<rect x="456" y="114" width="1" height="2" fill="#0000ff" />
<rect x="452" y="116" width="1" height="1" fill="#0000ff" />
<rect x="449" y="120" width="1" height="1" fill="#0000ff" />
<rect x="449" y="119" width="2" height="2" fill="#0000ff" />
<rect x="443" y="121" width="1" height="2" fill="#0000ff" />
<rect x="441" y="120" width="2" height="2" fill="#0000ff" />
<rect x="440" y="121" width="2" height="1" fill="#0000ff" />
<rect x="443" y="121" width="3" height="1" fill="#0000ff" />
<rect x="435" y="120" width="3" height="2" fill="#0000ff" />
<rect x="432" y="122" width="3" height="2" fill="#0000ff" />
<rect x="429" y="128" width="1" height="2" fill="#0000ff" />
<rect x="429" y="126" width="1" height="2" fill="#0000ff" />
<rect x="435" y="123" width="2" height="1" fill="#0000ff" />
<rect x="424" y="126" width="2" height="2" fill="#0000ff" />
<polygon points="461.7,127.9 471.9,125.2 477.5,127.9 476.4,132.4 467.3,133.1" fill="#0000ff" />
<rect x="464" y="126" width="2" height="1" fill="#0000ff" />
<rect x="465" y="125" width="2" height="2" fill="#0000ff" />
<rect x="464" y="125" width="2" height="2" fill="#0000ff" />
<rect x="470" y="126" width="1" height="1" fill="#0000ff" />
<rect x="476" y="128" width="2" height="2" fill="#0000ff" />
<rect x="474" y="125" width="2" height="1" fill="#0000ff" />
<rect x="477" y="128" width="1" height="1" fill="#0000ff" />
<rect x="475" y="130" width="1" height="1" fill="#0000ff" />
<rect x="474" y="130" width="2" height="2" fill="#0000ff" />
<rect x="468" y="132" width="1" height="2" fill="#0000ff" />
<rect x="469" y="131" width="3" height="2" fill="#0000ff" />
<rect x="476" y="130" width="2" height="1" fill="#0000ff" />
<rect x="463" y="127" width="2" height="2" fill="#0000ff" />
<rect x="465" y="131" width="3" height="1" fill="#0000ff" />
<rect x="465" y="131" width="1" height="1" fill="#0000ff" />
<polygon points="446.9,150.1 456.0,148.5 463.9,152.3 462.8,156.9 456.0,156.9" fill="#0000ff" />
<rect x="452" y="147" width="3" height="1" fill="#0000ff" />
<rect x="453" y="148" width="3" height="2" fill="#0000ff" />
<rect x="453" y="147" width="2" height="1" fill="#0000ff" />
<rect x="454" y="149" width="2" height="2" fill="#0000ff" />
<rect x="459" y="150" width="2" height="2" fill="#0000ff" />
<rect x="463" y="153" width="1" height="1" fill="#0000ff" />
<rect x="464" y="150" width="2" height="1" fill="#0000ff" />
<rect x="456" y="147" width="3" height="2" fill="#0000ff" />
<rect x="462" y="156" width="3" height="2" fill="#0000ff" />
<rect x="463" y="155" width="2" height="2" fill="#0000ff" />
<rect x="458" y="156" width="2" height="2" fill="#0000ff" />
<rect x="459" y="157" width="1" height="2" fill="#0000ff" />
<rect x="456" y="154" width="3" height="2" fill="#0000ff" />
<rect x="451" y="152" width="2" height="1" fill="#0000ff" />
<rect x="453" y="154" width="2" height="2" fill="#0000ff" />
<rect x="453" y="155" width="3" height="2" fill="#0000ff" />
<rect x="450" y="151" width="1" height="2" fill="#0000ff" />
<rect x="447" y="150" width="2" height="2" fill="#0000ff" />
<polygon points="469.6,160.3 475.3,158.0 477.5,152.3 485.0,152.3 485.0,171.6 477.5,170.5 470.7,164.8" fill="#0000ff" />
<rect x="469" y="159" width="3" height="2" fill="#0000ff" />
<rect x="473" y="158" width="2" height="1" fill="#0000ff" />
<rect x="474" y="156" width="1" height="1" fill="#0000ff" />
<rect x="476" y="154" width="2" height="2" fill="#0000ff" />
<rect x="477" y="152" width="3" height="1" fill="#0000ff" />
<rect x="485" y="152" width="1" height="2" fill="#0000ff" />
<rect x="481" y="153" width="2" height="2" fill="#0000ff" />
<rect x="485" y="164" width="1" height="2" fill="#0000ff" />
<rect x="484" y="163" width="1" height="2" fill="#0000ff" />
<rect x="484" y="153" width="2" height="2" fill="#0000ff" />
<rect x="483" y="164" width="3" height="1" fill="#0000ff" />
<rect x="485" y="151" width="2" height="2" fill="#0000ff" />
<rect x="484" y="171" width="2" height="2" fill="#0000ff" />
<rect x="486" y="163" width="2" height="2" fill="#0000ff" />
<rect x="482" y="166" width="3" height="2" fill="#0000ff" />
<rect x="484" y="170" width="3" height="2" fill="#0000ff" />
<rect x="482" y="169" width="3" height="1" fill="#0000ff" />
<rect x="478" y="169" width="1" height="1" fill="#0000ff" />
<rect x="475" y="169" width="1" height="2" fill="#0000ff" />
<rect x="474" y="169" width="2" height="2" fill="#0000ff" />
<rect x="476" y="167" width="2" height="2" fill="#0000ff" />
<rect x="474" y="167" width="2" height="2" fill="#0000ff" />
<rect x="468" y="158" width="3" height="2" fill="#0000ff" />
<rect x="469" y="161" width="2" height="1" fill="#0000ff" />
<polygon points="473.0,109.3 475.5,109.3 475.5,111.6 473.0,111.6" fill="#0000ff" />
<rect x="473" y="108" width="3" height="1" fill="#0000ff" />
<rect x="474" y="110" width="2" height="2" fill="#0000ff" />
<rect x="474" y="109" width="2" height="2" fill="#0000ff" />
<rect x="472" y="111" width="1" height="2" fill="#0000ff" />
<polygon points="57.2,148.6 59.3,142.6 65.8,140.9 73.5,142.6 77.0,148.6 75.2,154.6 67.5,157.2 60.3,156.3" fill="#0000ff" />
<rect x="57" y="149" width="1" height="2" fill="#0000ff" />
<rect x="56" y="148" width="1" height="2" fill="#0000ff" />
<rect x="62" y="142" width="2" height="2" fill="#0000ff" />
<rect x="62" y="140" width="2" height="2" fill="#0000ff" />
<rect x="64" y="140" width="2" height="1" fill="#0000ff" />
<rect x="68" y="142" width="1" height="2" fill="#0000ff" />
<rect x="65" y="139" width="3" height="2" fill="#0000ff" />
<rect x="67" y="141" width="2" height="1" fill="#0000ff" />
<rect x="75" y="143" width="1" height="2" fill="#0000ff" />
<rect x="76" y="148" width="3" height="2" fill="#0000ff" />
<rect x="74" y="143" width="2" height="2" fill="#0000ff" />
<rect x="76" y="149" width="2" height="2" fill="#0000ff" />
<rect x="75" y="148" width="1" height="2" fill="#0000ff" />
<rect x="74" y="152" width="2" height="1" fill="#0000ff" />
<rect x="75" y="152" width="2" height="2" fill="#0000ff" />
<rect x="74" y="154" width="1" height="1" fill="#0000ff" />
<rect x="63" y="156" width="2" height="2" fill="#0000ff" />
<rect x="61" y="155" width="2" height="1" fill="#0000ff" />
<rect x="64" y="156" width="1" height="1" fill="#0000ff" />
<rect x="55" y="149" width="3" height="2" fill="#0000ff" />
<rect x="60" y="156" width="1" height="2" fill="#0000ff" />
<rect x="60" y="153" width="1" height="2" fill="#0000ff" />
<polygon points="153.4,155.5 158.6,152.9 165.5,157.2 172.3,153.4 178.9,154.1 182.3,162.3 180.1,172.7 172.3,170.1 163.8,167.5 158.6,162.3" fill="#0000ff" />
<rect x="157" y="154" width="1" height="2" fill="#0000ff" />
<rect x="153" y="153" width="3" height="1" fill="#0000ff" />
<rect x="159" y="153" width="2" height="1" fill="#0000ff" />
<rect x="159" y="151" width="2" height="2" fill="#0000ff" />
<rect x="164" y="154" width="2" height="2" fill="#0000ff" />
<rect x="169" y="154" width="1" height="1" fill="#0000ff" />
<rect x="167" y="156" width="2" height="2" fill="#0000ff" />
<rect x="166" y="155" width="2" height="2" fill="#0000ff" />
<rect x="172" y="153" width="3" height="1" fill="#0000ff" />
<rect x="177" y="152" width="1" height="1" fill="#0000ff" />
<rect x="181" y="157" width="1" height="2" fill="#0000ff" />
<rect x="181" y="161" width="2" height="1" fill="#0000ff" />
<rect x="179" y="157" width="2" height="2" fill="#0000ff" />
<rect x="182" y="158" width="2" height="2" fill="#0000ff" />
<rect x="181" y="165" width="3" height="1" fill="#0000ff" />
<rect x="179" y="163" width="3" height="1" fill="#0000ff" />
<rect x="182" y="162" width="3" height="1" fill="#0000ff" />
<rect x="181" y="165" width="2" height="2" fill="#0000ff" />
<rect x="175" y="170" width="2" height="1" fill="#0000ff" />
<rect x="179" y="171" width="1" height="1" fill="#0000ff" />
<rect x="173" y="169" width="3" height="2" fill="#0000ff" />
<rect x="166" y="168" width="3" height="1" fill="#0000ff" />
<rect x="167" y="169" width="2" height="2" fill="#0000ff" />
<rect x="166" y="168" width="3" height="2" fill="#0000ff" />
<rect x="164" y="165" width="3" height="2" fill="#0000ff" />
<rect x="161" y="165" width="2" height="1" fill="#0000ff" />
<rect x="162" y="166" width="1" height="1" fill="#0000ff" />
<rect x="164" y="167" width="1" height="2" fill="#0000ff" />
<rect x="157" y="162" width="2" height="2" fill="#0000ff" />
<rect x="157" y="161" width="3" height="2" fill="#0000ff" />
<rect x="158" y="161" width="1" height="2" fill="#0000ff" />
<polygon points="127.7,163.2 130.8,161.5 133.7,164.1 132.0,167.5 128.5,167.2" fill="#0000ff" />
<rect x="126" y="162" width="2" height="1" fill="#0000ff" />
<rect x="133" y="162" width="1" height="1" fill="#0000ff" />
<rect x="132" y="168" width="1" height="2" fill="#0000ff" />
<rect x="130" y="165" width="3" height="2" fill="#0000ff" />
<rect x="128" y="164" width="3" height="1" fill="#0000ff" />
<polygon points="139.7,133.5 143.1,132.8 144.2,135.7 141.1,136.9" fill="#0000ff" />
<rect x="139" y="131" width="3" height="1" fill="#0000ff" />
<rect x="142" y="134" width="1" height="1" fill="#0000ff" />
<rect x="143" y="137" width="1" height="1" fill="#0000ff" />
<rect x="139" y="135" width="2" height="2" fill="#0000ff" />
<polygon points="81.8,123.7 84.0,123.7 84.0,125.9 81.8,125.9" fill="#0000ff" />
<rect x="84" y="124" width="1" height="1" fill="#0000ff" />
<rect x="82" y="123" width="2" height="2" fill="#0000ff" />
<rect x="84" y="126" width="2" height="2" fill="#0000ff" />
<rect x="80" y="122" width="1" height="2" fill="#0000ff" />
<polygon points="50.0,167.5 52.4,168.4 50.7,172.3 50.0,172.3" fill="#0000ff" />
<rect x="51" y="165" width="3" height="1" fill="#0000ff" />
<rect x="52" y="168" width="2" height="2" fill="#0000ff" />
<rect x="50" y="166" width="3" height="1" fill="#0000ff" />
<rect x="47" y="171" width="3" height="2" fill="#0000ff" />
<polygon points="329.1,182.3 335.9,180.0 347.3,180.0 349.5,186.8 363.1,186.8 381.2,189.1 386.2,193.6 384.6,199.3 367.6,198.1 358.6,200.4 354.1,208.3 347.3,207.2 345.0,200.4 333.7,199.3 334.8,192.5" fill="#0000ff" />
<rect x="335" y="180" width="2" height="1" fill="#0000ff" />
<rect x="328" y="181" width="2" height="2" fill="#0000ff" />
<rect x="329" y="180" width="2" height="1" fill="#0000ff" />
<rect x="340" y="180" width="2" height="2" fill="#0000ff" />
<rect x="341" y="179" width="3" height="1" fill="#0000ff" />
<rect x="336" y="180" width="2" height="2" fill="#0000ff" />
<rect x="346" y="180" width="1" height="2" fill="#0000ff" />
<rect x="337" y="181" width="1" height="2" fill="#0000ff" />
<rect x="348" y="182" width="2" height="2" fill="#0000ff" />
<rect x="348" y="183" width="2" height="2" fill="#0000ff" />
<rect x="346" y="179" width="2" height="2" fill="#0000ff" />
<rect x="354" y="186" width="2" height="2" fill="#0000ff" />
<rect x="349" y="186" width="1" height="1" fill="#0000ff" />
<rect x="359" y="185" width="1" height="1" fill="#0000ff" />
<rect x="357" y="186" width="2" height="2" fill="#0000ff" />
<rect x="349" y="185" width="3" height="2" fill="#0000ff" />
<rect x="358" y="187" width="1" height="2" fill="#0000ff" />
<rect x="369" y="185" width="2" height="1" fill="#0000ff" />
<rect x="379" y="188" width="2" height="2" fill="#0000ff" />
<rect x="361" y="187" width="2" height="2" fill="#0000ff" />
<rect x="374" y="187" width="1" height="1" fill="#0000ff" />
<rect x="372" y="185" width="2" height="2" fill="#0000ff" />
<rect x="364" y="185" width="2" height="1" fill="#0000ff" />
<rect x="368" y="188" width="2" height="2" fill="#0000ff" />
<rect x="371" y="187" width="2" height="2" fill="#0000ff" />
<rect x="382" y="188" width="2" height="1" fill="#0000ff" />
<rect x="381" y="190" width="2" height="2" fill="#0000ff" />
<rect x="380" y="189" width="2" height="1" fill="#0000ff" />
<rect x="385" y="198" width="1" height="1" fill="#0000ff" />
<rect x="386" y="196" width="1" height="2" fill="#0000ff" />
<rect x="374" y="197" width="3" height="1" fill="#0000ff" />
<rect x="377" y="199" width="2" height="2" fill="#0000ff" />
<rect x="375" y="196" width="2" height="2" fill="#0000ff" />
<rect x="378" y="198" width="1" height="2" fill="#0000ff" />
<rect x="380" y="198" width="3" height="1" fill="#0000ff" />
<rect x="382" y="197" width="2" height="2" fill="#0000ff" />
<rect x="368" y="196" width="2" height="2" fill="#0000ff" />
<rect x="359" y="200" width="1" height="2" fill="#0000ff" />
<rect x="360" y="198" width="2" height="1" fill="#0000ff" />
<rect x="367" y="197" width="2" height="2" fill="#0000ff" />
<rect x="368" y="198" width="1" height="2" fill="#0000ff" />
<rect x="356" y="203" width="2" height="2" fill="#0000ff" />
<rect x="353" y="204" width="3" height="2" fill="#0000ff" />
<rect x="355" y="205" width="2" height="2" fill="#0000ff" />
<rect x="357" y="203" width="1" height="2" fill="#0000ff" />
<rect x="350" y="207" width="2" height="1" fill="#0000ff" />
<rect x="351" y="207" width="1" height="2" fill="#0000ff" />
<rect x="351" y="206" width="3" height="1" fill="#0000ff" />
<rect x="345" y="206" width="3" height="2" fill="#0000ff" />
<rect x="344" y="198" width="3" height="1" fill="#0000ff" />
<rect x="346" y="203" width="2" height="1" fill="#0000ff" />
<rect x="339" y="200" width="1" height="2" fill="#0000ff" />
<rect x="339" y="201" width="1" height="1" fill="#0000ff" />
<rect x="336" y="198" width="3" height="1" fill="#0000ff" />
<rect x="341" y="198" width="3" height="1" fill="#0000ff" />
<rect x="335" y="197" width="2" height="1" fill="#0000ff" />
<rect x="332" y="195" width="3" height="2" fill="#0000ff" />
<rect x="333" y="196" width="2" height="2" fill="#0000ff" />
<rect x="335" y="197" width="1" height="2" fill="#0000ff" />
<rect x="327" y="181" width="2" height="1" fill="#0000ff" />
<rect x="333" y="189" width="3" height="1" fill="#0000ff" />
<rect x="332" y="188" width="1" height="2" fill="#0000ff" />
<rect x="333" y="189" width="2" height="2" fill="#0000ff" />
<rect x="327" y="180" width="2" height="2" fill="#0000ff" />
<polygon points="405.0,180.0 433.3,180.0 434.5,187.9 426.6,194.7 419.8,197.0 415.2,189.1 407.3,185.7" fill="#0000ff" />
<rect x="416" y="180" width="2" height="2" fill="#0000ff" />
<rect x="415" y="180" width="1" height="2" fill="#0000ff" />
<rect x="425" y="179" width="2" height="1" fill="#0000ff" />
<rect x="416" y="180" width="2" height="2" fill="#0000ff" />
<rect x="432" y="178" width="3" height="1" fill="#0000ff" />
<rect x="430" y="179" width="2" height="2" fill="#0000ff" />
<rect x="411" y="178" width="3" height="2" fill="#0000ff" />
<rect x="407" y="178" width="2" height="1" fill="#0000ff" />
<rect x="403" y="178" width="3" height="2" fill="#0000ff" />
<rect x="406" y="180" width="2" height="2" fill="#0000ff" />
<rect x="423" y="177" width="3" height="2" fill="#0000ff" />
<rect x="405" y="178" width="2" height="1" fill="#0000ff" />
<rect x="434" y="188" width="2" height="2" fill="#0000ff" />
<rect x="433" y="182" width="2" height="2" fill="#0000ff" />
<rect x="432" y="182" width="3" height="2" fill="#0000ff" />
<rect x="427" y="192" width="1" height="2" fill="#0000ff" />
<rect x="430" y="190" width="1" height="1" fill="#0000ff" />
<rect x="426" y="192" width="2" height="1" fill="#0000ff" />
<rect x="433" y="189" width="2" height="1" fill="#0000ff" />
<rect x="424" y="192" width="2" height="1" fill="#0000ff" />
<rect x="421" y="194" width="2" height="2" fill="#0000ff" />
<rect x="422" y="195" width="1" height="2" fill="#0000ff" />
<rect x="417" y="195" width="2" height="1" fill="#0000ff" />
<rect x="415" y="189" width="3" height="1" fill="#0000ff" />
<rect x="420" y="195" width="1" height="1" fill="#0000ff" />
<rect x="415" y="189" width="1" height="1" fill="#0000ff" />
<rect x="411" y="187" width="1" height="2" fill="#0000ff" />
<rect x="413" y="187" width="3" height="1" fill="#0000ff" />
<rect x="410" y="185" width="3" height="1" fill="#0000ff" />
<rect x="407" y="183" width="3" height="1" fill="#0000ff" />
<rect x="405" y="180" width="2" height="2" fill="#0000ff" />
<polygon points="262.3,191.3 268.0,188.6 272.0,192.5 274.8,197.0 268.0,198.1 263.4,195.9" fill="#0000ff" />
<rect x="261" y="189" width="2" height="1" fill="#0000ff" />
<rect x="266" y="189" width="2" height="1" fill="#0000ff" />
<rect x="273" y="193" width="2" height="1" fill="#0000ff" />
<rect x="267" y="187" width="2" height="2" fill="#0000ff" />
<rect x="273" y="191" width="2" height="1" fill="#0000ff" />
<rect x="271" y="192" width="2" height="2" fill="#0000ff" />
<rect x="268" y="197" width="1" height="2" fill="#0000ff" />
<rect x="270" y="197" width="3" height="2" fill="#0000ff" />
<rect x="270" y="196" width="3" height="2" fill="#0000ff" />
<rect x="264" y="197" width="2" height="2" fill="#0000ff" />
<rect x="265" y="197" width="2" height="2" fill="#0000ff" />
<rect x="264" y="195" width="1" height="1" fill="#0000ff" />
<rect x="260" y="193" width="2" height="1" fill="#0000ff" />
<polygon points="330.3,221.9 338.6,217.4 340.5,220.8 334.8,225.3 331.4,225.3" fill="#0000ff" />
<rect x="338" y="218" width="1" height="2" fill="#0000ff" />
<rect x="334" y="218" width="2" height="2" fill="#0000ff" />
<rect x="333" y="220" width="1" height="1" fill="#0000ff" />
<rect x="333" y="219" width="1" height="2" fill="#0000ff" />
<rect x="336" y="216" width="3" height="1" fill="#0000ff" />
<rect x="338" y="222" width="2" height="2" fill="#0000ff" />
<rect x="338" y="222" width="1" height="1" fill="#0000ff" />
<rect x="338" y="222" width="3" height="2" fill="#0000ff" />
<rect x="332" y="225" width="3" height="2" fill="#0000ff" />
<rect x="330" y="221" width="2" height="2" fill="#0000ff" />
<polygon points="367.2,255.9 375.6,245.7 380.1,244.6 381.2,248.0 374.4,258.2 371.0,259.3" fill="#0000ff" />
<rect x="368" y="253" width="2" height="1" fill="#0000ff" />
<rect x="368" y="254" width="2" height="2" fill="#0000ff" />
<rect x="368" y="252" width="2" height="2" fill="#0000ff" />
<rect x="368" y="254" width="2" height="2" fill="#0000ff" />
<rect x="370" y="251" width="1" height="1" fill="#0000ff" />
<rect x="378" y="245" width="2" height="2" fill="#0000ff" />
<rect x="376" y="244" width="2" height="1" fill="#0000ff" />
<rect x="379" y="247" width="2" height="2" fill="#0000ff" />
<rect x="376" y="256" width="2" height="2" fill="#0000ff" />
<rect x="379" y="249" width="2" height="1" fill="#0000ff" />
<rect x="380" y="250" width="1" height="2" fill="#0000ff" />
<rect x="373" y="256" width="2" height="2" fill="#0000ff" />
<rect x="374" y="257" width="3" height="2" fill="#0000ff" />
<rect x="372" y="258" width="2" height="2" fill="#0000ff" />
<rect x="368" y="256" width="2" height="1" fill="#0000ff" />
<rect x="366" y="255" width="1" height="2" fill="#0000ff" />
<polygon points="382.4,252.5 386.2,249.1 390.8,250.2 389.2,255.9 384.0,260.4" fill="#0000ff" />
<rect x="383" y="248" width="3" height="2" fill="#0000ff" />
<rect x="385" y="248" width="3" height="2" fill="#0000ff" />
<rect x="390" y="249" width="2" height="2" fill="#0000ff" />
<rect x="390" y="251" width="1" height="2" fill="#0000ff" />
<rect x="387" y="253" width="2" height="1" fill="#0000ff" />
<rect x="390" y="252" width="1" height="2" fill="#0000ff" />
<rect x="381" y="259" width="3" height="1" fill="#0000ff" />
<rect x="384" y="257" width="2" height="2" fill="#0000ff" />
<rect x="384" y="258" width="1" height="1" fill="#0000ff" />
<rect x="384" y="257" width="2" height="2" fill="#0000ff" />
<rect x="381" y="254" width="2" height="2" fill="#0000ff" />
<rect x="381" y="253" width="3" height="2" fill="#0000ff" />
<polygon points="406.6,245.7 410.7,241.2 415.2,241.6 415.7,246.8 411.8,252.9 407.3,252.0" fill="#0000ff" />
<rect x="407" y="242" width="3" height="2" fill="#0000ff" />
<rect x="409" y="240" width="1" height="2" fill="#0000ff" />
<rect x="413" y="240" width="1" height="2" fill="#0000ff" />
<rect x="414" y="241" width="2" height="2" fill="#0000ff" />
<rect x="413" y="242" width="2" height="2" fill="#0000ff" />
<rect x="413" y="242" width="2" height="2" fill="#0000ff" />
<rect x="413" y="247" width="3" height="1" fill="#0000ff" />
<rect x="413" y="246" width="2" height="2" fill="#0000ff" />
<rect x="412" y="250" width="2" height="1" fill="#0000ff" />
<rect x="410" y="251" width="1" height="2" fill="#0000ff" />
<rect x="409" y="250" width="3" height="2" fill="#0000ff" />
<rect x="408" y="251" width="1" height="1" fill="#0000ff" />
<rect x="406" y="245" width="2" height="2" fill="#0000ff" />
<polygon points="416.4,238.5 419.8,237.8 420.2,241.2 417.0,241.6" fill="#0000ff" />
<rect x="415" y="237" width="3" height="2" fill="#0000ff" />
<rect x="417" y="236" width="3" height="2" fill="#0000ff" />
<rect x="417" y="239" width="2" height="2" fill="#0000ff" />
<rect x="415" y="240" width="2" height="1" fill="#0000ff" />
<polygon points="371.0,267.2 379.0,267.2 379.0,275.2 373.3,275.6" fill="#0000ff" />
<rect x="374" y="267" width="3" height="2" fill="#0000ff" />
<rect x="377" y="265" width="2" height="2" fill="#0000ff" />
<rect x="371" y="267" width="1" height="2" fill="#0000ff" />
<rect x="378" y="266" width="3" height="2" fill="#0000ff" />
<rect x="380" y="268" width="1" height="1" fill="#0000ff" />
<rect x="378" y="272" width="3" height="2" fill="#0000ff" />
<rect x="374" y="275" width="1" height="2" fill="#0000ff" />
<rect x="377" y="275" width="2" height="2" fill="#0000ff" />
<rect x="370" y="271" width="2" height="2" fill="#0000ff" />
<rect x="372" y="269" width="2" height="1" fill="#0000ff" />
<rect x="372" y="269" width="2" height="2" fill="#0000ff" />
<polygon points="381.2,267.2 384.6,267.2 386.2,271.8 383.1,272.9" fill="#0000ff" />
<rect x="380" y="266" width="2" height="2" fill="#0000ff" />
<rect x="384" y="270" width="2" height="1" fill="#0000ff" />
<rect x="384" y="268" width="1" height="2" fill="#0000ff" />
<rect x="381" y="271" width="3" height="1" fill="#0000ff" />
<rect x="381" y="272" width="2" height="1" fill="#0000ff" />
<rect x="381" y="270" width="1" height="2" fill="#0000ff" />
<polygon points="384.6,271.8 388.0,271.1 387.6,275.2 384.6,275.2" fill="#0000ff" />
<rect x="388" y="269" width="2" height="2" fill="#0000ff" />
<rect x="388" y="273" width="2" height="2" fill="#0000ff" />
<rect x="382" y="274" width="3" height="2" fill="#0000ff" />
<rect x="385" y="275" width="2" height="2" fill="#0000ff" />
<polygon points="324.2,262.0 328.2,260.7 330.0,264.3 328.2,268.4 324.6,267.9" fill="#0000ff" />
<rect x="322" y="260" width="1" height="2" fill="#0000ff" />
<rect x="329" y="261" width="2" height="1" fill="#0000ff" />
<rect x="329" y="265" width="2" height="2" fill="#0000ff" />
<rect x="329" y="263" width="3" height="2" fill="#0000ff" />
<rect x="326" y="266" width="2" height="1" fill="#0000ff" />
<rect x="323" y="266" width="1" height="2" fill="#0000ff" />
<rect x="323" y="262" width="3" height="2" fill="#0000ff" />
<polygon points="306.9,272.4 309.9,271.5 309.7,274.7 307.2,275.2" fill="#0000ff" />
<rect x="309" y="271" width="1" height="2" fill="#0000ff" />
<rect x="309" y="273" width="2" height="1" fill="#0000ff" />
<rect x="307" y="273" width="2" height="2" fill="#0000ff" />
<rect x="307" y="272" width="1" height="2" fill="#0000ff" />
<polygon points="471.9,219.6 475.9,217.4 476.4,221.9 473.0,223.5" fill="#0000ff" />
<rect x="473" y="217" width="3" height="2" fill="#0000ff" />
<rect x="476" y="218" width="2" height="2" fill="#0000ff" />
<rect x="474" y="222" width="2" height="2" fill="#0000ff" />
<rect x="476" y="222" width="2" height="2" fill="#0000ff" />
<rect x="473" y="223" width="2" height="1" fill="#0000ff" />
<rect x="472" y="222" width="1" height="2" fill="#0000ff" />
<polygon points="348.4,211.7 352.2,211.3 351.8,215.8 348.6,215.3" fill="#0000ff" />
<rect x="352" y="210" width="1" height="2" fill="#0000ff" />
<rect x="351" y="213" width="1" height="1" fill="#0000ff" />
<rect x="350" y="213" width="1" height="2" fill="#0000ff" />
<rect x="348" y="215" width="2" height="1" fill="#0000ff" />
<rect x="347" y="210" width="3" height="2" fill="#0000ff" />
<polygon points="366.5,209.9 368.8,209.5 368.6,214.0 366.1,214.0" fill="#0000ff" />
<rect x="365" y="208" width="2" height="1" fill="#0000ff" />
<rect x="368" y="214" width="3" height="2" fill="#0000ff" />
<rect x="368" y="211" width="2" height="2" fill="#0000ff" />
<rect x="367" y="215" width="1" height="2" fill="#0000ff" />
<rect x="366" y="209" width="2" height="2" fill="#0000ff" />
<polygon points="311.5,204.9 316.9,202.7 317.4,204.5 312.1,207.6" fill="#0000ff" />
<rect x="314" y="202" width="1" height="2" fill="#0000ff" />
<rect x="312" y="204" width="1" height="1" fill="#0000ff" />
<rect x="314" y="206" width="2" height="2" fill="#0000ff" />
<rect x="313" y="208" width="1" height="2" fill="#0000ff" />
<rect x="311" y="206" width="2" height="1" fill="#0000ff" />
<polygon points="295.2,206.1 298.8,206.1 298.8,208.1 295.2,208.1" fill="#0000ff" />
<rect x="297" y="205" width="1" height="1" fill="#0000ff" />
<rect x="299" y="207" width="1" height="2" fill="#0000ff" />
<polygon points="333.7,206.7 336.4,206.3 335.9,209.5 333.7,209.5" fill="#0000ff" />
<rect x="334" y="207" width="2" height="1" fill="#0000ff" />
<rect x="336" y="207" width="1" height="2" fill="#0000ff" />
<rect x="335" y="208" width="2" height="2" fill="#0000ff" />
<rect x="333" y="208" width="3" height="1" fill="#0000ff" />
<polygon points="372.2,209.0 374.9,209.0 374.9,211.7 372.2,211.7" fill="#0000ff" />
<rect x="375" y="208" width="2" height="2" fill="#0000ff" />
<rect x="374" y="210" width="2" height="1" fill="#0000ff" />
<rect x="372" y="211" width="1" height="1" fill="#0000ff" />
<rect x="370" y="209" width="2" height="2" fill="#0000ff" />
<polygon points="232.9,84.4 239.6,82.1 248.7,83.2 252.1,86.6 250.3,90.0 243.0,86.6 238.1,89.4 239.0,93.4 234.0,93.9 231.7,89.4" fill="#ff0000" />
<rect x="237" y="81" width="2" height="2" fill="#ff0000" />
<rect x="236" y="83" width="2" height="2" fill="#ff0000" />
<rect x="239" y="81" width="2" height="2" fill="#ff0000" />
<rect x="239" y="81" width="2" height="2" fill="#ff0000" />
<rect x="247" y="81" width="1" height="1" fill="#ff0000" />
<rect x="244" y="83" width="2" height="2" fill="#ff0000" />
<rect x="239" y="80" width="2" height="2" fill="#ff0000" />
<rect x="250" y="83" width="3" height="1" fill="#ff0000" />
<rect x="251" y="86" width="1" height="2" fill="#ff0000" />
<rect x="252" y="87" width="2" height="1" fill="#ff0000" />
<rect x="247" y="88" width="2" height="1" fill="#ff0000" />
<rect x="247" y="89" width="2" height="2" fill="#ff0000" />
<rect x="242" y="87" width="1" height="2" fill="#ff0000" />
<rect x="239" y="87" width="2" height="2" fill="#ff0000" />
<rect x="241" y="87" width="1" height="1" fill="#ff0000" />
<rect x="238" y="93" width="2" height="2" fill="#ff0000" />
<rect x="235" y="92" width="2" height="2" fill="#ff0000" />
<rect x="235" y="92" width="1" height="2" fill="#ff0000" />
<rect x="230" y="89" width="1" height="2" fill="#ff0000" />
<rect x="232" y="92" width="1" height="1" fill="#ff0000" />
<rect x="230" y="87" width="2" height="2" fill="#ff0000" />
<rect x="229" y="87" width="3" height="2" fill="#ff0000" />
<polygon points="247.1,86.6 251.7,86.2 252.1,90.3 248.0,90.3" fill="#ffa500" />
<rect x="249" y="85" width="1" height="2" fill="#ffa500" />
<rect x="250" y="84" width="2" height="1" fill="#ffa500" />
<rect x="250" y="85" width="1" height="2" fill="#ffa500" />
<rect x="248" y="88" width="3" height="1" fill="#ffa500" />
<rect x="246" y="87" width="1" height="2" fill="#ffa500" />
<polygon points="259.4,87.8 263.4,87.8 263.4,91.2 259.4,91.2" fill="#ff0000" />
<rect x="261" y="87" width="3" height="1" fill="#ff0000" />
<rect x="264" y="91" width="1" height="2" fill="#ff0000" />
<rect x="260" y="89" width="2" height="2" fill="#ff0000" />
<rect x="257" y="88" width="2" height="2" fill="#ff0000" />
<polygon points="272.9,100.7 278.2,99.8 281.6,102.0 278.2,104.8 273.6,103.9" fill="#ff0000" />
<rect x="273" y="99" width="2" height="2" fill="#ff0000" />
<rect x="273" y="98" width="2" height="2" fill="#ff0000" />
<rect x="278" y="100" width="2" height="1" fill="#ff0000" />
<rect x="280" y="102" width="2" height="1" fill="#ff0000" />
<rect x="277" y="106" width="1" height="2" fill="#ff0000" />
<rect x="274" y="102" width="3" height="2" fill="#ff0000" />
<rect x="271" y="101" width="3" height="1" fill="#ff0000" />
<polygon points="349.5,136.9 372.2,136.5 373.3,145.5 374.4,155.7 368.8,156.9 365.4,150.1 363.1,144.4 356.3,143.3 350.7,142.8" fill="#ff0000" />
<rect x="352" y="135" width="1" height="2" fill="#ff0000" />
<rect x="355" y="137" width="1" height="1" fill="#ff0000" />
<rect x="366" y="135" width="2" height="2" fill="#ff0000" />
<rect x="353" y="136" width="2" height="1" fill="#ff0000" />
<rect x="371" y="134" width="1" height="2" fill="#ff0000" />
<rect x="366" y="136" width="2" height="2" fill="#ff0000" />
<rect x="368" y="134" width="3" height="1" fill="#ff0000" />
<rect x="362" y="134" width="2" height="1" fill="#ff0000" />
<rect x="369" y="134" width="3" height="2" fill="#ff0000" />
<rect x="367" y="136" width="2" height="2" fill="#ff0000" />
<rect x="372" y="136" width="2" height="2" fill="#ff0000" />
<rect x="373" y="141" width="2" height="2" fill="#ff0000" />
<rect x="371" y="136" width="1" height="2" fill="#ff0000" />
<rect x="370" y="138" width="3" height="2" fill="#ff0000" />
<rect x="372" y="151" width="3" height="2" fill="#ff0000" />
<rect x="372" y="148" width="2" height="2" fill="#ff0000" />
<rect x="373" y="149" width="2" height="2" fill="#ff0000" />
<rect x="372" y="148" width="2" height="1" fill="#ff0000" />
<rect x="368" y="157" width="2" height="2" fill="#ff0000" />
<rect x="370" y="155" width="2" height="2" fill="#ff0000" />
<rect x="366" y="153" width="2" height="1" fill="#ff0000" />
<rect x="367" y="154" width="2" height="2" fill="#ff0000" />
<rect x="367" y="157" width="1" height="2" fill="#ff0000" />
<rect x="363" y="148" width="3" height="2" fill="#ff0000" />
<rect x="363" y="148" width="2" height="2" fill="#ff0000" />
<rect x="360" y="145" width="2" height="2" fill="#ff0000" />
<rect x="360" y="141" width="3" height="1" fill="#ff0000" />
<rect x="362" y="144" width="1" height="2" fill="#ff0000" />
<rect x="353" y="142" width="2" height="1" fill="#ff0000" />
<rect x="352" y="143" width="2" height="1" fill="#ff0000" />
<rect x="348" y="138" width="2" height="1" fill="#ff0000" />
<rect x="350" y="142" width="2" height="1" fill="#ff0000" />
<polygon points="350.0,138.3 354.5,138.3 354.5,142.8 350.0,142.8" fill="#ffa500" />
<rect x="351" y="139" width="2" height="2" fill="#ffa500" />
<rect x="352" y="137" width="1" height="2" fill="#ffa500" />
<rect x="353" y="139" width="3" height="1" fill="#ffa500" />
<rect x="353" y="140" width="2" height="1" fill="#ffa500" />
<rect x="348" y="143" width="2" height="2" fill="#ffa500" />
<rect x="348" y="142" width="3" height="2" fill="#ffa500" />
<rect x="350" y="143" width="2" height="2" fill="#ffa500" />
<rect x="349" y="140" width="1" height="2" fill="#ffa500" />
<polygon points="357.5,137.4 363.1,137.4 363.1,143.3 357.5,143.3" fill="#ffa500" />
<rect x="357" y="136" width="3" height="2" fill="#ffa500" />
<rect x="361" y="138" width="2" height="2" fill="#ffa500" />
<rect x="363" y="137" width="3" height="1" fill="#ffa500" />
<rect x="361" y="142" width="2" height="2" fill="#ffa500" />
<rect x="362" y="142" width="2" height="2" fill="#ffa500" />
<rect x="360" y="140" width="3" height="1" fill="#ffa500" />
<rect x="357" y="139" width="3" height="2" fill="#ffa500" />
<rect x="357" y="137" width="2" height="2" fill="#ffa500" />
<polygon points="366.5,139.9 372.2,141.0 372.6,146.0 367.6,145.1" fill="#ffa500" />
<rect x="371" y="141" width="1" height="2" fill="#ffa500" />
<rect x="369" y="139" width="2" height="2" fill="#ffa500" />
<rect x="371" y="144" width="2" height="1" fill="#ffa500" />
<rect x="370" y="142" width="3" height="2" fill="#ffa500" />
<rect x="368" y="145" width="3" height="1" fill="#ffa500" />
<rect x="368" y="145" width="1" height="2" fill="#ffa500" />
<rect x="368" y="144" width="1" height="2" fill="#ffa500" />
<rect x="367" y="142" width="1" height="2" fill="#ffa500" />
<polygon points="377.8,137.6 394.8,136.5 405.0,138.7 402.8,142.1 392.6,143.3 385.8,146.7 379.0,144.4" fill="#ff0000" />
<rect x="379" y="137" width="2" height="2" fill="#ff0000" />
<rect x="386" y="136" width="2" height="2" fill="#ff0000" />
<rect x="386" y="136" width="1" height="1" fill="#ff0000" />
<rect x="381" y="135" width="2" height="2" fill="#ff0000" />
<rect x="385" y="136" width="2" height="2" fill="#ff0000" />
<rect x="386" y="138" width="1" height="1" fill="#ff0000" />
<rect x="386" y="137" width="2" height="2" fill="#ff0000" />
<rect x="401" y="139" width="1" height="1" fill="#ff0000" />
<rect x="399" y="135" width="3" height="2" fill="#ff0000" />
<rect x="395" y="135" width="2" height="2" fill="#ff0000" />
<rect x="394" y="135" width="1" height="1" fill="#ff0000" />
<rect x="401" y="139" width="2" height="2" fill="#ff0000" />
<rect x="400" y="143" width="2" height="2" fill="#ff0000" />
<rect x="398" y="142" width="1" height="1" fill="#ff0000" />
<rect x="393" y="140" width="3" height="2" fill="#ff0000" />
<rect x="396" y="141" width="3" height="2" fill="#ff0000" />
<rect x="386" y="144" width="2" height="2" fill="#ff0000" />
<rect x="391" y="143" width="2" height="2" fill="#ff0000" />
<rect x="388" y="142" width="3" height="2" fill="#ff0000" />
<rect x="381" y="145" width="2" height="2" fill="#ff0000" />
<rect x="382" y="145" width="3" height="1" fill="#ff0000" />
<rect x="380" y="145" width="3" height="2" fill="#ff0000" />
<rect x="379" y="142" width="2" height="2" fill="#ff0000" />
<rect x="379" y="139" width="2" height="2" fill="#ff0000" />
<rect x="377" y="143" width="2" height="2" fill="#ff0000" />
<polygon points="384.6,138.7 390.3,138.3 389.9,142.1 384.9,142.4" fill="#ffa500" />
<rect x="385" y="139" width="2" height="1" fill="#ffa500" />
<rect x="387" y="138" width="2" height="2" fill="#ffa500" />
<rect x="388" y="141" width="3" height="2" fill="#ffa500" />
<rect x="387" y="143" width="2" height="1" fill="#ffa500" />
<rect x="387" y="142" width="2" height="1" fill="#ffa500" />
<rect x="384" y="139" width="1" height="1" fill="#ffa500" />
<polygon points="379.0,152.3 388.0,147.8 399.4,147.8 411.8,153.5 410.7,161.4 407.3,165.9 414.1,172.7 415.2,179.5 408.4,181.3 401.6,175.0 397.1,168.2 390.3,163.7 382.4,160.3" fill="#ff0000" />
<rect x="386" y="147" width="2" height="2" fill="#ff0000" />
<rect x="384" y="147" width="2" height="2" fill="#ff0000" />
<rect x="379" y="151" width="3" height="1" fill="#ff0000" />
<rect x="387" y="148" width="2" height="2" fill="#ff0000" />
<rect x="389" y="146" width="1" height="2" fill="#ff0000" />
<rect x="389" y="147" width="1" height="1" fill="#ff0000" />
<rect x="398" y="145" width="2" height="1" fill="#ff0000" />
<rect x="387" y="145" width="3" height="1" fill="#ff0000" />
<rect x="389" y="147" width="2" height="1" fill="#ff0000" />
<rect x="409" y="150" width="2" height="1" fill="#ff0000" />
<rect x="400" y="147" width="3" height="1" fill="#ff0000" />
<rect x="409" y="150" width="3" height="2" fill="#ff0000" />
<rect x="406" y="149" width="3" height="1" fill="#ff0000" />
<rect x="407" y="151" width="3" height="2" fill="#ff0000" />
<rect x="409" y="151" width="2" height="2" fill="#ff0000" />
<rect x="411" y="159" width="1" height="2" fill="#ff0000" />
<rect x="413" y="156" width="1" height="1" fill="#ff0000" />
<rect x="412" y="158" width="1" height="1" fill="#ff0000" />
<rect x="409" y="160" width="2" height="2" fill="#ff0000" />
<rect x="408" y="164" width="2" height="1" fill="#ff0000" />
<rect x="412" y="170" width="1" height="2" fill="#ff0000" />
<rect x="409" y="168" width="2" height="1" fill="#ff0000" />
<rect x="408" y="165" width="2" height="2" fill="#ff0000" />
<rect x="413" y="170" width="1" height="2" fill="#ff0000" />
<rect x="415" y="175" width="2" height="2" fill="#ff0000" />
<rect x="412" y="172" width="3" height="1" fill="#ff0000" />
<rect x="413" y="172" width="3" height="2" fill="#ff0000" />
<rect x="415" y="178" width="2" height="2" fill="#ff0000" />
<rect x="412" y="179" width="2" height="1" fill="#ff0000" />
<rect x="411" y="179" width="2" height="1" fill="#ff0000" />
<rect x="405" y="177" width="2" height="2" fill="#ff0000" />
<rect x="404" y="178" width="2" height="1" fill="#ff0000" />
<rect x="403" y="175" width="3" height="2" fill="#ff0000" />
<rect x="401" y="175" width="1" height="1" fill="#ff0000" />
<rect x="396" y="168" width="1" height="2" fill="#ff0000" />
<rect x="400" y="171" width="1" height="1" fill="#ff0000" />
<rect x="399" y="172" width="2" height="2" fill="#ff0000" />
<rect x="391" y="165" width="3" height="2" fill="#ff0000" />
<rect x="394" y="168" width="1" height="2" fill="#ff0000" />
<rect x="389" y="165" width="3" height="2" fill="#ff0000" />
<rect x="386" y="160" width="1" height="2" fill="#ff0000" />
<rect x="384" y="161" width="2" height="2" fill="#ff0000" />
<rect x="384" y="161" width="2" height="2" fill="#ff0000" />
<rect x="379" y="154" width="1" height="1" fill="#ff0000" />
<rect x="379" y="153" width="1" height="2" fill="#ff0000" />
<rect x="380" y="156" width="2" height="1" fill="#ff0000" />
<polygon points="381.2,153.5 388.0,149.6 394.4,153.5 392.6,162.5 386.2,161.4" fill="#ffa500" />
<rect x="384" y="150" width="2" height="2" fill="#ffa500" />
<rect x="386" y="150" width="2" height="1" fill="#ffa500" />
<rect x="388" y="150" width="1" height="1" fill="#ffa500" />
<rect x="389" y="149" width="2" height="2" fill="#ffa500" />
<rect x="391" y="150" width="1" height="1" fill="#ffa500" />
<rect x="391" y="152" width="1" height="1" fill="#ffa500" />
<rect x="391" y="162" width="2" height="2" fill="#ffa500" />
<rect x="392" y="160" width="2" height="2" fill="#ffa500" />
<rect x="391" y="158" width="3" height="1" fill="#ffa500" />
<rect x="392" y="162" width="3" height="1" fill="#ffa500" />
<rect x="385" y="161" width="2" height="2" fill="#ffa500" />
<rect x="385" y="161" width="3" height="2" fill="#ffa500" />
<rect x="383" y="159" width="2" height="2" fill="#ffa500" />
<rect x="381" y="154" width="2" height="2" fill="#ffa500" />
<rect x="382" y="157" width="2" height="2" fill="#ffa500" />
<rect x="380" y="151" width="2" height="2" fill="#ffa500" />
<polygon points="397.1,153.5 410.7,154.6 409.6,159.6 399.4,160.3" fill="#ffa500" />
<rect x="410" y="152" width="3" height="1" fill="#ffa500" />
<rect x="403" y="154" width="1" height="1" fill="#ffa500" />
<rect x="400" y="153" width="3" height="2" fill="#ffa500" />
<rect x="402" y="151" width="3" height="2" fill="#ffa500" />
<rect x="398" y="153" width="1" height="1" fill="#ffa500" />
<rect x="406" y="153" width="3" height="2" fill="#ffa500" />
<rect x="409" y="155" width="3" height="2" fill="#ffa500" />
<rect x="408" y="154" width="2" height="2" fill="#ffa500" />
<rect x="403" y="158" width="2" height="1" fill="#ffa500" />
<rect x="399" y="158" width="2" height="2" fill="#ffa500" />
<rect x="403" y="160" width="2" height="2" fill="#ffa500" />
<rect x="400" y="159" width="2" height="1" fill="#ffa500" />
<rect x="396" y="153" width="2" height="1" fill="#ffa500" />
<rect x="398" y="158" width="2" height="2" fill="#ffa500" />
<rect x="398" y="157" width="2" height="1" fill="#ffa500" />
<polygon points="396.0,161.4 405.0,161.4 407.3,168.2 399.4,168.6" fill="#ffa500" />
<rect x="396" y="161" width="1" height="2" fill="#ffa500" />
<rect x="402" y="159" width="2" height="1" fill="#ffa500" />
<rect x="402" y="160" width="2" height="2" fill="#ffa500" />
<rect x="400" y="161" width="1" height="2" fill="#ffa500" />
<rect x="405" y="160" width="2" height="2" fill="#ffa500" />
<rect x="404" y="168" width="3" height="2" fill="#ffa500" />
<rect x="407" y="166" width="3" height="2" fill="#ffa500" />
<rect x="405" y="167" width="3" height="2" fill="#ffa500" />
<rect x="399" y="168" width="1" height="2" fill="#ffa500" />
<rect x="406" y="167" width="3" height="2" fill="#ffa500" />
<rect x="395" y="164" width="2" height="1" fill="#ffa500" />
<rect x="397" y="164" width="1" height="2" fill="#ffa500" />
<rect x="394" y="161" width="3" height="1" fill="#ffa500" />
<polygon points="403.9,171.6 413.0,171.6 414.1,178.4 407.3,180.0" fill="#ffa500" />
<rect x="406" y="171" width="2" height="2" fill="#ffa500" />
<rect x="410" y="171" width="1" height="2" fill="#ffa500" />
<rect x="407" y="171" width="2" height="2" fill="#ffa500" />
<rect x="409" y="172" width="1" height="2" fill="#ffa500" />
<rect x="413" y="172" width="1" height="1" fill="#ffa500" />
<rect x="412" y="172" width="2" height="2" fill="#ffa500" />
<rect x="412" y="174" width="2" height="2" fill="#ffa500" />
<rect x="411" y="180" width="1" height="1" fill="#ffa500" />
<rect x="411" y="180" width="2" height="2" fill="#ffa500" />
<rect x="412" y="179" width="2" height="1" fill="#ffa500" />
<rect x="406" y="174" width="1" height="1" fill="#ffa500" />
<rect x="402" y="174" width="1" height="2" fill="#ffa500" />
<rect x="404" y="175" width="2" height="2" fill="#ffa500" />
<rect x="404" y="171" width="3" height="2" fill="#ffa500" />
<polygon points="415.2,165.0 419.3,164.6 418.8,167.3 415.2,167.3" fill="#ff0000" />
<rect x="418" y="165" width="1" height="1" fill="#ff0000" />
<rect x="417" y="166" width="1" height="1" fill="#ff0000" />
<rect x="416" y="165" width="2" height="2" fill="#ff0000" />
<rect x="415" y="166" width="2" height="1" fill="#ff0000" />
<polygon points="330.3,170.9 333.2,170.9 333.2,175.0 330.3,175.0" fill="#ff0000" />
<rect x="331" y="171" width="2" height="2" fill="#ff0000" />
<rect x="331" y="171" width="2" height="1" fill="#ff0000" />
<rect x="330" y="173" width="1" height="2" fill="#ff0000" />
<rect x="329" y="170" width="1" height="2" fill="#ff0000" />
<polygon points="340.0,175.0 348.4,174.5 345.0,179.5 340.9,178.4" fill="#ff0000" />
<rect x="342" y="175" width="3" height="2" fill="#ff0000" />
<rect x="339" y="173" width="2" height="1" fill="#ff0000" />
<rect x="342" y="172" width="3" height="1" fill="#ff0000" />
<rect x="346" y="172" width="3" height="2" fill="#ff0000" />
<rect x="344" y="175" width="2" height="2" fill="#ff0000" />
<rect x="341" y="179" width="2" height="2" fill="#ff0000" />
<rect x="340" y="173" width="3" height="2" fill="#ff0000" />
<polygon points="342.7,190.9 350.7,190.9 350.0,195.4 343.2,194.3" fill="#ff0000" />
<rect x="342" y="189" width="3" height="2" fill="#ff0000" />
<rect x="344" y="191" width="2" height="2" fill="#ff0000" />
<rect x="346" y="189" width="1" height="2" fill="#ff0000" />
<rect x="349" y="191" width="3" height="1" fill="#ff0000" />
<rect x="350" y="191" width="3" height="1" fill="#ff0000" />
<rect x="342" y="193" width="2" height="2" fill="#ff0000" />
<rect x="345" y="195" width="1" height="2" fill="#ff0000" />
<rect x="344" y="194" width="2" height="2" fill="#ff0000" />
<rect x="341" y="193" width="3" height="2" fill="#ff0000" />
<polygon points="474.6,164.1 480.9,163.7 480.9,167.7 475.3,168.2" fill="#ff0000" />
<rect x="479" y="165" width="1" height="2" fill="#ff0000" />
<rect x="479" y="162" width="3" height="2" fill="#ff0000" />
<rect x="482" y="167" width="1" height="2" fill="#ff0000" />
<rect x="476" y="168" width="1" height="1" fill="#ff0000" />
<rect x="478" y="166" width="2" height="2" fill="#ff0000" />
<rect x="474" y="166" width="3" height="2" fill="#ff0000" />
<polygon points="453.7,151.2 459.4,151.2 459.4,153.5 453.7,153.5" fill="#ff0000" />
<rect x="455" y="149" width="2" height="2" fill="#ff0000" />
<rect x="454" y="151" width="3" height="2" fill="#ff0000" />
<rect x="458" y="149" width="3" height="2" fill="#ff0000" />
<rect x="456" y="152" width="3" height="1" fill="#ff0000" />
<rect x="454" y="152" width="1" height="1" fill="#ff0000" />
<rect x="452" y="151" width="2" height="1" fill="#ff0000" />
<polygon points="287.2,135.3 291.8,134.7 291.1,137.8 287.9,138.3" fill="#ff0000" />
<rect x="287" y="135" width="3" height="2" fill="#ff0000" />
<rect x="287" y="133" width="2" height="2" fill="#ff0000" />
<rect x="290" y="134" width="2" height="2" fill="#ff0000" />
<rect x="290" y="137" width="2" height="1" fill="#ff0000" />
<rect x="286" y="135" width="3" height="2" fill="#ff0000" />
<polygon points="322.3,127.9 326.0,127.9 325.5,130.6 322.3,130.6" fill="#ff0000" />
<rect x="324" y="128" width="2" height="1" fill="#ff0000" />
<rect x="324" y="129" width="2" height="1" fill="#ff0000" />
<rect x="324" y="130" width="1" height="1" fill="#ff0000" />
<rect x="321" y="128" width="2" height="2" fill="#ff0000" />
<polygon points="59.6,148.6 65.8,147.7 68.4,149.5 74.4,148.3 74.0,151.2 65.8,152.9 59.9,152.4" fill="#ff0000" />
<rect x="64" y="147" width="2" height="1" fill="#ff0000" />
<rect x="59" y="147" width="2" height="2" fill="#ff0000" />
<rect x="66" y="147" width="2" height="2" fill="#ff0000" />
<rect x="71" y="148" width="2" height="2" fill="#ff0000" />
<rect x="73" y="149" width="1" height="2" fill="#ff0000" />
<rect x="71" y="149" width="3" height="2" fill="#ff0000" />
<rect x="66" y="151" width="2" height="2" fill="#ff0000" />
<rect x="65" y="153" width="2" height="2" fill="#ff0000" />
<rect x="67" y="151" width="2" height="2" fill="#ff0000" />
<rect x="61" y="152" width="2" height="2" fill="#ff0000" />
<rect x="62" y="152" width="2" height="2" fill="#ff0000" />
<rect x="57" y="149" width="2" height="2" fill="#ff0000" />
<polygon points="171.0,160.3 175.4,160.3 175.1,164.9 171.0,164.9" fill="#ff0000" />
<rect x="170" y="159" width="2" height="2" fill="#ff0000" />
<rect x="169" y="158" width="3" height="2" fill="#ff0000" />
<rect x="174" y="164" width="2" height="2" fill="#ff0000" />
<rect x="176" y="163" width="2" height="2" fill="#ff0000" />
<rect x="174" y="165" width="2" height="2" fill="#ff0000" />
<rect x="172" y="164" width="1" height="2" fill="#ff0000" />
<rect x="170" y="159" width="1" height="2" fill="#ff0000" />
<polygon points="342.7,190.2 347.3,190.2 347.3,192.5 342.7,192.5" fill="#ff0000" />
<rect x="342" y="188" width="2" height="1" fill="#ff0000" />
<rect x="345" y="189" width="1" height="2" fill="#ff0000" />
<rect x="347" y="189" width="2" height="2" fill="#ff0000" />
<rect x="345" y="191" width="2" height="2" fill="#ff0000" />
<rect x="342" y="191" width="2" height="1" fill="#ff0000" />
<rect x="341" y="189" width="3" height="2" fill="#ff0000" />
<polygon points="347.7,191.8 350.0,191.8 350.0,195.9 347.7,195.9" fill="#ff0000" />
<rect x="348" y="189" width="2" height="2" fill="#ff0000" />
<rect x="349" y="191" width="2" height="1" fill="#ff0000" />
<rect x="348" y="195" width="2" height="2" fill="#ff0000" />
<rect x="347" y="196" width="2" height="2" fill="#ff0000" />
<rect x="391" y="239" width="2" height="1" fill="#0000ff" />
<rect x="420" y="157" width="2" height="1" fill="#0000ff" />
<rect x="423" y="162" width="2" height="1" fill="#0000ff" />
<rect x="393" y="220" width="1" height="2" fill="#0000ff" />
<rect x="430" y="116" width="1" height="2" fill="#0000ff" />
<rect x="375" y="136" width="1" height="1" fill="#0000ff" />
<rect x="398" y="220" width="2" height="1" fill="#0000ff" />
<rect x="345" y="134" width="3" height="1" fill="#0000ff" />
<rect x="345" y="226" width="2" height="1" fill="#0000ff" />
<rect x="363" y="208" width="3" height="1" fill="#0000ff" />
<rect x="384" y="195" width="1" height="1" fill="#0000ff" />
<rect x="342" y="134" width="1" height="2" fill="#0000ff" />
<rect x="451" y="203" width="1" height="2" fill="#0000ff" />
<rect x="421" y="207" width="2" height="1" fill="#0000ff" />
<rect x="452" y="151" width="2" height="1" fill="#0000ff" />
<rect x="423" y="151" width="3" height="1" fill="#0000ff" />
<rect x="323" y="166" width="2" height="1" fill="#0000ff" />
<rect x="367" y="145" width="1" height="1" fill="#0000ff" />
<rect x="441" y="137" width="3" height="1" fill="#0000ff" />
<rect x="412" y="202" width="1" height="1" fill="#0000ff" />
<rect x="352" y="179" width="1" height="1" fill="#0000ff" />
<rect x="368" y="160" width="1" height="1" fill="#0000ff" />
<rect x="375" y="147" width="3" height="1" fill="#0000ff" />
<rect x="380" y="152" width="2" height="1" fill="#0000ff" />
<rect x="366" y="201" width="2" height="2" fill="#0000ff" />
<rect x="352" y="186" width="3" height="2" fill="#0000ff" />
<rect x="191" y="162" width="1" height="1" fill="#0000ff" />
<rect x="423" y="176" width="2" height="1" fill="#0000ff" />
<rect x="414" y="201" width="1" height="1" fill="#0000ff" />
<rect x="431" y="150" width="1" height="1" fill="#0000ff" />
<rect x="339" y="233" width="1" height="1" fill="#0000ff" />
<rect x="294" y="154" width="2" height="1" fill="#0000ff" />
<rect x="444" y="185" width="1" height="1" fill="#0000ff" />
<rect x="400" y="169" width="1" height="1" fill="#0000ff" />
<rect x="445" y="212" width="2" height="2" fill="#0000ff" />
<rect x="227" y="160" width="3" height="2" fill="#0000ff" />
<rect x="424" y="221" width="1" height="2" fill="#0000ff" />
<rect x="369" y="177" width="3" height="1" fill="#0000ff" />
<rect x="342" y="163" width="2" height="2" fill="#0000ff" />
<rect x="314" y="192" width="3" height="2" fill="#0000ff" />
<rect x="331" y="202" width="2" height="1" fill="#0000ff" />
<rect x="259" y="249" width="1" height="1" fill="#0000ff" />
<rect x="465" y="179" width="2" height="1" fill="#0000ff" />
<rect x="294" y="189" width="2" height="1" fill="#0000ff" />
<rect x="371" y="179" width="1" height="2" fill="#0000ff" />
<rect x="355" y="216" width="2" height="1" fill="#0000ff" />
<rect x="407" y="156" width="1" height="1" fill="#0000ff" />
<rect x="367" y="234" width="2" height="1" fill="#0000ff" />
<rect x="337" y="191" width="2" height="1" fill="#0000ff" />
<rect x="305" y="232" width="2" height="1" fill="#0000ff" />
<rect x="432" y="164" width="1" height="1" fill="#0000ff" />
<rect x="360" y="129" width="3" height="1" fill="#0000ff" />
<rect x="373" y="151" width="3" height="1" fill="#0000ff" />
<rect x="330" y="186" width="1" height="2" fill="#0000ff" />
<rect x="377" y="208" width="3" height="1" fill="#0000ff" />
<rect x="440" y="202" width="1" height="2" fill="#0000ff" />
<rect x="360" y="137" width="1" height="1" fill="#0000ff" />
<rect x="378" y="166" width="2" height="1" fill="#0000ff" />
<rect x="404" y="162" width="3" height="1" fill="#0000ff" />
<rect x="406" y="136" width="2" height="2" fill="#0000ff" />
<rect x="403" y="249" width="3" height="2" fill="#0000ff" />
<rect x="470" y="262" width="2" height="1" fill="#0000ff" />
<rect x="448" y="140" width="2" height="2" fill="#0000ff" />
<rect x="396" y="198" width="2" height="1" fill="#0000ff" />
<rect x="400" y="159" width="1" height="1" fill="#0000ff" />
<rect x="398" y="192" width="2" height="1" fill="#0000ff" />
<rect x="290" y="213" width="2" height="1" fill="#0000ff" />
<rect x="405" y="169" width="2" height="1" fill="#0000ff" />
<rect x="249" y="213" width="2" height="1" fill="#0000ff" />
<rect x="443" y="165" width="1" height="1" fill="#0000ff" />
<rect x="462" y="236" width="2" height="2" fill="#0000ff" />
<rect x="330" y="167" width="1" height="2" fill="#0000ff" />
<rect x="323" y="224" width="3" height="1" fill="#0000ff" />
<rect x="464" y="173" width="2" height="1" fill="#0000ff" />
<rect x="412" y="185" width="1" height="1" fill="#0000ff" />
<rect x="404" y="127" width="2" height="2" fill="#0000ff" />
<rect x="370" y="205" width="2" height="1" fill="#0000ff" />
<rect x="329" y="117" width="1" height="2" fill="#0000ff" />
<rect x="368" y="120" width="1" height="2" fill="#0000ff" />
<rect x="405" y="179" width="2" height="2" fill="#0000ff" />
<rect x="445" y="199" width="2" height="1" fill="#0000ff" />
<rect x="378" y="285" width="2" height="1" fill="#0000ff" />
<rect x="366" y="250" width="1" height="1" fill="#0000ff" />
<rect x="338" y="141" width="3" height="1" fill="#0000ff" />
<rect x="295" y="133" width="2" height="1" fill="#0000ff" />
<rect x="358" y="226" width="1" height="1" fill="#0000ff" />
<rect x="421" y="192" width="3" height="1" fill="#0000ff" />
<rect x="339" y="142" width="2" height="1" fill="#0000ff" />
<rect x="285" y="115" width="3" height="2" fill="#0000ff" />
<rect x="348" y="222" width="1" height="2" fill="#0000ff" />
<rect x="390" y="198" width="3" height="2" fill="#0000ff" />
<rect x="295" y="180" width="2" height="2" fill="#0000ff" />
<rect x="353" y="174" width="1" height="1" fill="#0000ff" />
<rect x="303" y="110" width="1" height="2" fill="#0000ff" />
<rect x="406" y="181" width="2" height="1" fill="#0000ff" />
<rect x="440" y="162" width="1" height="1" fill="#0000ff" />
<rect x="325" y="132" width="2" height="1" fill="#0000ff" />
<rect x="400" y="211" width="2" height="1" fill="#0000ff" />
<rect x="392" y="203" width="1" height="2" fill="#0000ff" />
<rect x="350" y="198" width="2" height="1" fill="#0000ff" />
<rect x="289" y="162" width="2" height="2" fill="#0000ff" />
<rect x="460" y="139" width="3" height="2" fill="#0000ff" />
<rect x="388" y="121" width="1" height="2" fill="#0000ff" />
<rect x="369" y="190" width="2" height="1" fill="#0000ff" />
<rect x="378" y="166" width="1" height="1" fill="#0000ff" />
<rect x="430" y="257" width="2" height="1" fill="#0000ff" />
<rect x="356" y="192" width="2" height="2" fill="#0000ff" />
<rect x="409" y="198" width="1" height="1" fill="#0000ff" />
<rect x="264" y="190" width="2" height="1" fill="#0000ff" />
<rect x="339" y="215" width="2" height="1" fill="#0000ff" />
<rect x="314" y="221" width="2" height="2" fill="#0000ff" />
<rect x="435" y="120" width="3" height="2" fill="#0000ff" />
<rect x="339" y="196" width="1" height="1" fill="#0000ff" />
<rect x="306" y="128" width="2" height="1" fill="#0000ff" />
<rect x="343" y="259" width="1" height="1" fill="#0000ff" />
<rect x="434" y="146" width="1" height="1" fill="#0000ff" />
<rect x="396" y="185" width="2" height="2" fill="#0000ff" />
<rect x="289" y="119" width="1" height="1" fill="#0000ff" />
<rect x="378" y="174" width="1" height="1" fill="#0000ff" />
<rect x="281" y="229" width="1" height="1" fill="#0000ff" />
<rect x="441" y="109" width="3" height="1" fill="#0000ff" />
<rect x="477" y="158" width="1" height="1" fill="#0000ff" />
<rect x="348" y="141" width="2" height="1" fill="#0000ff" />
<rect x="289" y="234" width="3" height="1" fill="#0000ff" />
<rect x="426" y="211" width="3" height="1" fill="#0000ff" />
<rect x="377" y="171" width="2" height="2" fill="#0000ff" />
<rect x="390" y="154" width="2" height="1" fill="#0000ff" />
<rect x="236" y="264" width="2" height="1" fill="#0000ff" />
<rect x="428" y="149" width="1" height="2" fill="#0000ff" />
<rect x="335" y="189" width="2" height="2" fill="#0000ff" />
<rect x="410" y="129" width="2" height="2" fill="#0000ff" />
<rect x="341" y="223" width="2" height="1" fill="#0000ff" />
<rect x="397" y="181" width="2" height="2" fill="#0000ff" />
<rect x="414" y="202" width="1" height="1" fill="#0000ff" />
<rect x="378" y="200" width="1" height="1" fill="#0000ff" />
<rect x="367" y="185" width="3" height="1" fill="#0000ff" />
<rect x="342" y="229" width="3" height="1" fill="#0000ff" />
<rect x="329" y="153" width="3" height="2" fill="#0000ff" />
<rect x="239" y="205" width="3" height="1" fill="#00c878" />
<rect x="240" y="219" width="2" height="1" fill="#000" />
<rect x="235" y="196" width="3" height="1" fill="#00fa9a" />
<rect x="245" y="233" width="1" height="1" fill="#000" />
<rect x="254" y="215" width="3" height="2" fill="#00fa9a" />
<rect x="244" y="166" width="2" height="2" fill="#00fa9a" />
<rect x="240" y="229" width="1" height="2" fill="#00fa9a" />
<rect x="257" y="182" width="2" height="1" fill="#00c878" />
<rect x="249" y="210" width="2" height="1" fill="#00fa9a" />
<rect x="217" y="203" width="1" height="1" fill="#00fa9a" />
<rect x="252" y="209" width="2" height="1" fill="#000" />
<rect x="221" y="192" width="2" height="1" fill="#00c878" />
<rect x="243" y="218" width="2" height="1" fill="#00fa9a" />
<rect x="234" y="234" width="3" height="1" fill="#00fa9a" />
<rect x="236" y="204" width="2" height="1" fill="#000" />
<rect x="267" y="243" width="3" height="1" fill="#ffff64" />
<rect x="252" y="163" width="2" height="2" fill="#ffff64" />
<rect x="233" y="245" width="2" height="1" fill="#00c878" />
<rect x="233" y="196" width="1" height="1" fill="#00fa9a" />
<rect x="223" y="204" width="2" height="1" fill="#00fa9a" />
<rect x="238" y="231" width="2" height="1" fill="#000" />
<rect x="250" y="242" width="2" height="1" fill="#ffff64" />
<rect x="243" y="250" width="2" height="2" fill="#ffff64" />
<rect x="262" y="215" width="2" height="1" fill="#000" />
<rect x="256" y="216" width="2" height="2" fill="#00fa9a" />
<rect x="253" y="228" width="2" height="1" fill="#00fa9a" />
<rect x="245" y="223" width="1" height="1" fill="#000" />
<rect x="211" y="240" width="3" height="1" fill="#00fa9a" />
<rect x="241" y="197" width="2" height="2" fill="#00c878" />
<rect x="256" y="231" width="3" height="1" fill="#00c878" />
<rect x="251" y="221" width="2" height="1" fill="#00fa9a" />
<rect x="230" y="192" width="3" height="1" fill="#00c878" />
<rect x="238" y="189" width="3" height="1" fill="#00c878" />
<rect x="252" y="207" width="2" height="1" fill="#00fa9a" />
<rect x="234" y="233" width="2" height="1" fill="#ffff64" />
<rect x="225" y="226" width="3" height="1" fill="#00c878" />
<rect x="225" y="205" width="2" height="1" fill="#00fa9a" />
<rect x="226" y="262" width="1" height="1" fill="#00fa9a" />
<rect x="249" y="223" width="3" height="1" fill="#00c878" />
<rect x="232" y="229" width="3" height="1" fill="#000" />
<rect x="257" y="218" width="2" height="1" fill="#ffff64" />
<rect x="244" y="196" width="2" height="1" fill="#00fa9a" />
<rect x="240" y="203" width="2" height="1" fill="#00fa9a" />
<rect x="270" y="196" width="1" height="1" fill="#ffff64" />
<rect x="243" y="211" width="1" height="1" fill="#ffff64" />
<rect x="246" y="194" width="3" height="2" fill="#000" />
<rect x="213" y="237" width="3" height="1" fill="#00fa9a" />
<rect x="239" y="208" width="3" height="1" fill="#ffff64" />
<rect x="227" y="199" width="3" height="1" fill="#000" />
<rect x="239" y="255" width="1" height="1" fill="#00fa9a" />
<rect x="261" y="193" width="3" height="1" fill="#00fa9a" />
<rect x="247" y="192" width="1" height="1" fill="#00fa9a" />
<rect x="249" y="215" width="2" height="1" fill="#000" />
<rect x="247" y="206" width="1" height="2" fill="#00fa9a" />
<rect x="255" y="212" width="2" height="2" fill="#000" />
<rect x="248" y="169" width="1" height="1" fill="#00fa9a" />
<rect x="244" y="200" width="2" height="1" fill="#00fa9a" />
<rect x="248" y="213" width="2" height="2" fill="#00c878" />
<rect x="257" y="214" width="2" height="2" fill="#ffff64" />
<rect x="251" y="215" width="2" height="2" fill="#00c878" />
<rect x="219" y="228" width="2" height="1" fill="#00fa9a" />
<rect x="254" y="187" width="2" height="1" fill="#000" />
<rect x="254" y="206" width="1" height="1" fill="#00fa9a" />
<rect x="242" y="224" width="1" height="2" fill="#00fa9a" />
<rect x="243" y="209" width="2" height="2" fill="#00fa9a" />
<rect x="229" y="209" width="3" height="1" fill="#00c878" />
<rect x="243" y="225" width="3" height="1" fill="#00fa9a" />
<rect x="217" y="230" width="1" height="1" fill="#00c878" />
<rect x="246" y="228" width="2" height="2" fill="#00fa9a" />
<rect x="275" y="214" width="2" height="1" fill="#ffff64" />
<rect x="250" y="223" width="2" height="1" fill="#ffff64" />
<rect x="247" y="224" width="2" height="1" fill="#000" />
<rect x="238" y="223" width="2" height="2" fill="#00fa9a" />
<rect x="244" y="232" width="2" height="1" fill="#00c878" />
<rect x="241" y="224" width="2" height="2" fill="#000" />
</g>
<line x1="78" y1="102.5" x2="89" y2="102.5" stroke="#f0e68c" stroke-width="1" />
<line x1="83.5" y1="97" x2="83.5" y2="108" stroke="#f0e68c" stroke-width="1" />
<line x1="78" y1="183.5" x2="89" y2="183.5" stroke="#f0e68c" stroke-width="1" />
<line x1="83.5" y1="178" x2="83.5" y2="189" stroke="#f0e68c" stroke-width="1" />
<line x1="78" y1="265.5" x2="89" y2="265.5" stroke="#f0e68c" stroke-width="1" />
<line x1="83.5" y1="260" x2="83.5" y2="271" stroke="#f0e68c" stroke-width="1" />
<line x1="78" y1="346.5" x2="89" y2="346.5" stroke="#f0e68c" stroke-width="1" />
<line x1="83.5" y1="341" x2="83.5" y2="352" stroke="#f0e68c" stroke-width="1" />
<line x1="158" y1="102.5" x2="169" y2="102.5" stroke="#f0e68c" stroke-width="1" />
<line x1="163.5" y1="97" x2="163.5" y2="108" stroke="#f0e68c" stroke-width="1" />
<line x1="158" y1="183.5" x2="169" y2="183.5" stroke="#f0e68c" stroke-width="1" />
<line x1="163.5" y1="178" x2="163.5" y2="189" stroke="#f0e68c" stroke-width="1" />
<line x1="158" y1="265.5" x2="169" y2="265.5" stroke="#f0e68c" stroke-width="1" />
<line x1="163.5" y1="260" x2="163.5" y2="271" stroke="#f0e68c" stroke-width="1" />
<line x1="158" y1="346.5" x2="169" y2="346.5" stroke="#f0e68c" stroke-width="1" />
<line x1="163.5" y1="341" x2="163.5" y2="352" stroke="#f0e68c" stroke-width="1" />
<line x1="238" y1="102.5" x2="249" y2="102.5" stroke="#f0e68c" stroke-width="1" />
<line x1="243.5" y1="97" x2="243.5" y2="108" stroke="#f0e68c" stroke-width="1" />
<line x1="238" y1="183.5" x2="249" y2="183.5" stroke="#f0e68c" stroke-width="1" />
<line x1="243.5" y1="178" x2="243.5" y2="189" stroke="#f0e68c" stroke-width="1" />
<line x1="238" y1="265.5" x2="249" y2="265.5" stroke="#f0e68c" stroke-width="1" />
<line x1="243.5" y1="260" x2="243.5" y2="271" stroke="#f0e68c" stroke-width="1" />
<line x1="238" y1="346.5" x2="249" y2="346.5" stroke="#f0e68c" stroke-width="1" />
<line x1="243.5" y1="341" x2="243.5" y2="352" stroke="#f0e68c" stroke-width="1" />
<line x1="318" y1="102.5" x2="329" y2="102.5" stroke="#f0e68c" stroke-width="1" />
<line x1="323.5" y1="97" x2="323.5" y2="108" stroke="#f0e68c" stroke-width="1" />
<line x1="318" y1="183.5" x2="329" y2="183.5" stroke="#f0e68c" stroke-width="1" />
<line x1="323.5" y1="178" x2="323.5" y2="189" stroke="#f0e68c" stroke-width="1" />
<line x1="318" y1="265.5" x2="329" y2="265.5" stroke="#f0e68c" stroke-width="1" />
<line x1="323.5" y1="260" x2="323.5" y2="271" stroke="#f0e68c" stroke-width="1" />
<line x1="318" y1="346.5" x2="329" y2="346.5" stroke="#f0e68c" stroke-width="1" />
<line x1="323.5" y1="341" x2="323.5" y2="352" stroke="#f0e68c" stroke-width="1" />
<line x1="398" y1="102.5" x2="409" y2="102.5" stroke="#f0e68c" stroke-width="1" />
<line x1="403.5" y1="97" x2="403.5" y2="108" stroke="#f0e68c" stroke-width="1" />
<line x1="398" y1="183.5" x2="409" y2="183.5" stroke="#f0e68c" stroke-width="1" />
<line x1="403.5" y1="178" x2="403.5" y2="189" stroke="#f0e68c" stroke-width="1" />
<line x1="398" y1="265.5" x2="409" y2="265.5" stroke="#f0e68c" stroke-width="1" />
<line x1="403.5" y1="260" x2="403.5" y2="271" stroke="#f0e68c" stroke-width="1" />
<line x1="398" y1="346.5" x2="409" y2="346.5" stroke="#f0e68c" stroke-width="1" />
<line x1="403.5" y1="341" x2="403.5" y2="352" stroke="#f0e68c" stroke-width="1" />
<line x1="478" y1="102.5" x2="489" y2="102.5" stroke="#f0e68c" stroke-width="1" />
<line x1="483.5" y1="97" x2="483.5" y2="108" stroke="#f0e68c" stroke-width="1" />
<line x1="478" y1="183.5" x2="489" y2="183.5" stroke="#f0e68c" stroke-width="1" />
<line x1="483.5" y1="178" x2="483.5" y2="189" stroke="#f0e68c" stroke-width="1" />
<line x1="478" y1="265.5" x2="489" y2="265.5" stroke="#f0e68c" stroke-width="1" />
<line x1="483.5" y1="260" x2="483.5" y2="271" stroke="#f0e68c" stroke-width="1" />
<line x1="478" y1="346.5" x2="489" y2="346.5" stroke="#f0e68c" stroke-width="1" />
<line x1="483.5" y1="341" x2="483.5" y2="352" stroke="#f0e68c" stroke-width="1" />
<rect x="485" y="34" width="87" height="320" fill="#000" />
<rect x="237" y="177" width="1" height="1" fill="#ff00ff" />
<rect x="235" y="178" width="5" height="5" fill="#ff00ff" />
<rect x="234" y="183" width="7" height="2" fill="#ff00ff" />
<rect x="237" y="185" width="1.5" height="2" fill="#ff00ff" />
<polygon points="232.5,187.0 242.5,187.0 241.0,189.5 234.0,189.5" fill="#ff00ff" />
<path d="M229.5,188.0 l2.0,2.5 l2.0,-2.0 l2.0,2.0 l2.0,-2.0 l2.0,2.0 l2.0,-2.0 l2.0,2.0 l2.0,-2.5" fill="none" stroke="#ff00ff" stroke-width="1.2" shape-rendering="auto"/>
<rect x="242.5" y="209" width="1" height="1" fill="#ff00ff" />
<rect x="240.5" y="210" width="5" height="5" fill="#ff00ff" />
<rect x="239.5" y="215" width="7" height="2" fill="#ff00ff" />
<rect x="242.5" y="217" width="1.5" height="2" fill="#ff00ff" />
<polygon points="238.0,219.0 248.0,219.0 246.5,221.5 239.5,221.5" fill="#ff00ff" />
<path d="M235.0,220.0 l2.0,2.5 l2.0,-2.0 l2.0,2.0 l2.0,-2.0 l2.0,2.0 l2.0,-2.0 l2.0,2.0 l2.0,-2.5" fill="none" stroke="#ff00ff" stroke-width="1.2" shape-rendering="auto"/>
<rect x="242.5" y="258" width="1" height="1" fill="#ff00ff" />
<rect x="240.5" y="259" width="5" height="5" fill="#ff00ff" />
<rect x="239.5" y="264" width="7" height="2" fill="#ff00ff" />
<rect x="242.5" y="266" width="1.5" height="2" fill="#ff00ff" />
<polygon points="238.0,268.0 248.0,268.0 246.5,270.5 239.5,270.5" fill="#ff00ff" />
<path d="M235.0,269.0 l2.0,2.5 l2.0,-2.0 l2.0,2.0 l2.0,-2.0 l2.0,2.0 l2.0,-2.0 l2.0,2.0 l2.0,-2.5" fill="none" stroke="#ff00ff" stroke-width="1.2" shape-rendering="auto"/>
<rect x="242.5" y="306" width="1" height="1" fill="#ff00ff" />
<rect x="240.5" y="307" width="5" height="5" fill="#ff00ff" />
<rect x="239.5" y="312" width="7" height="2" fill="#ff00ff" />
<rect x="242.5" y="314" width="1.5" height="2" fill="#ff00ff" />
<polygon points="238.0,316.0 248.0,316.0 246.5,318.5 239.5,318.5" fill="#ff00ff" />
<path d="M235.0,317.0 l2.0,2.5 l2.0,-2.0 l2.0,2.0 l2.0,-2.0 l2.0,2.0 l2.0,-2.0 l2.0,2.0 l2.0,-2.5" fill="none" stroke="#ff00ff" stroke-width="1.2" shape-rendering="auto"/>
<rect x="242.5" y="339" width="1" height="1" fill="#ff00ff" />
<rect x="240.5" y="340" width="5" height="5" fill="#ff00ff" />
<rect x="239.5" y="345" width="7" height="2" fill="#ff00ff" />
<rect x="242.5" y="347" width="1.5" height="2" fill="#ff00ff" />
<polygon points="238.0,349.0 248.0,349.0 246.5,351.5 239.5,351.5" fill="#ff00ff" />
<path d="M235.0,350.0 l2.0,2.5 l2.0,-2.0 l2.0,2.0 l2.0,-2.0 l2.0,2.0 l2.0,-2.0 l2.0,2.0 l2.0,-2.5" fill="none" stroke="#ff00ff" stroke-width="1.2" shape-rendering="auto"/>
<rect x="483.5" y="209" width="1" height="1" fill="#ff00ff" />
<rect x="481.5" y="210" width="5" height="5" fill="#ff00ff" />
<rect x="480.5" y="215" width="7" height="2" fill="#ff00ff" />
<rect x="483.5" y="217" width="1.5" height="2" fill="#ff00ff" />
<polygon points="479.0,219.0 489.0,219.0 487.5,221.5 480.5,221.5" fill="#ff00ff" />
<path d="M476.0,220.0 l2.0,2.5 l2.0,-2.0 l2.0,2.0 l2.0,-2.0 l2.0,2.0 l2.0,-2.0 l2.0,2.0 l2.0,-2.5" fill="none" stroke="#ff00ff" stroke-width="1.2" shape-rendering="auto"/>
<rect x="483.5" y="258" width="1" height="1" fill="#ff00ff" />
<rect x="481.5" y="259" width="5" height="5" fill="#ff00ff" />
<rect x="480.5" y="264" width="7" height="2" fill="#ff00ff" />
<rect x="483.5" y="266" width="1.5" height="2" fill="#ff00ff" />
<polygon points="479.0,268.0 489.0,268.0 487.5,270.5 480.5,270.5" fill="#ff00ff" />
<path d="M476.0,269.0 l2.0,2.5 l2.0,-2.0 l2.0,2.0 l2.0,-2.0 l2.0,2.0 l2.0,-2.0 l2.0,2.0 l2.0,-2.5" fill="none" stroke="#ff00ff" stroke-width="1.2" shape-rendering="auto"/>
<rect x="483.5" y="306" width="1" height="1" fill="#ff00ff" />
<rect x="481.5" y="307" width="5" height="5" fill="#ff00ff" />
<rect x="480.5" y="312" width="7" height="2" fill="#ff00ff" />
<rect x="483.5" y="314" width="1.5" height="2" fill="#ff00ff" />
<polygon points="479.0,316.0 489.0,316.0 487.5,318.5 480.5,318.5" fill="#ff00ff" />
<path d="M476.0,317.0 l2.0,2.5 l2.0,-2.0 l2.0,2.0 l2.0,-2.0 l2.0,2.0 l2.0,-2.0 l2.0,2.0 l2.0,-2.5" fill="none" stroke="#ff00ff" stroke-width="1.2" shape-rendering="auto"/>
<rect x="483.5" y="339" width="1" height="1" fill="#ff00ff" />
<rect x="481.5" y="340" width="5" height="5" fill="#ff00ff" />
<rect x="480.5" y="345" width="7" height="2" fill="#ff00ff" />
<rect x="483.5" y="347" width="1.5" height="2" fill="#ff00ff" />
<polygon points="479.0,349.0 489.0,349.0 487.5,351.5 480.5,351.5" fill="#ff00ff" />
<path d="M476.0,350.0 l2.0,2.5 l2.0,-2.0 l2.0,2.0 l2.0,-2.0 l2.0,2.0 l2.0,-2.0 l2.0,2.0 l2.0,-2.5" fill="none" stroke="#ff00ff" stroke-width="1.2" shape-rendering="auto"/>
<rect x="498" y="34" width="74" height="330" fill="#000" />
</g>
<text x="33" y="101" font-size="17.5" fill="#f0e68c" font-family="'Liberation Sans', sans-serif" text-anchor="end" >15</text>
<text x="33" y="182" font-size="17.5" fill="#f0e68c" font-family="'Liberation Sans', sans-serif" text-anchor="end" >10</text>
<text x="33" y="264" font-size="17.5" fill="#f0e68c" font-family="'Liberation Sans', sans-serif" text-anchor="end" >5</text>
<text x="33" y="345" font-size="17.5" fill="#f0e68c" font-family="'Liberation Sans', sans-serif" text-anchor="end" >0</text>
<text transform="translate(64.7,372.5) scale(1.51,1)" font-size="17.5" fill="#f0e68c" font-family="'Liberation Sans', sans-serif">-</text>
<text x="74.22" y="372.5" font-size="17.5" fill="#f0e68c" font-family="'Liberation Sans', sans-serif" textLength="29.28" lengthAdjust="spacing" >135</text>
<text transform="translate(144.7,372.5) scale(1.51,1)" font-size="17.5" fill="#f0e68c" font-family="'Liberation Sans', sans-serif">-</text>
<text x="154.22" y="372.5" font-size="17.5" fill="#f0e68c" font-family="'Liberation Sans', sans-serif" textLength="29.28" lengthAdjust="spacing" >130</text>
<text transform="translate(224.7,372.5) scale(1.51,1)" font-size="17.5" fill="#f0e68c" font-family="'Liberation Sans', sans-serif">-</text>
<text x="234.22" y="372.5" font-size="17.5" fill="#f0e68c" font-family="'Liberation Sans', sans-serif" textLength="29.28" lengthAdjust="spacing" >125</text>
<text transform="translate(304.7,372.5) scale(1.51,1)" font-size="17.5" fill="#f0e68c" font-family="'Liberation Sans', sans-serif">-</text>
<text x="314.22" y="372.5" font-size="17.5" fill="#f0e68c" font-family="'Liberation Sans', sans-serif" textLength="29.28" lengthAdjust="spacing" >120</text>
<text transform="translate(384.7,372.5) scale(1.51,1)" font-size="17.5" fill="#f0e68c" font-family="'Liberation Sans', sans-serif">-</text>
<text x="394.22" y="372.5" font-size="17.5" fill="#f0e68c" font-family="'Liberation Sans', sans-serif" textLength="29.28" lengthAdjust="spacing" >115</text>
<text transform="translate(464.4,372.5) scale(1.51,1)" font-size="17.5" fill="#f0e68c" font-family="'Liberation Sans', sans-serif">-</text>
<text x="473.97" y="372.5" font-size="17.5" fill="#f0e68c" font-family="'Liberation Sans', sans-serif" textLength="29.28" lengthAdjust="spacing" >110</text>
<text x="10.4719" y="26" font-size="24" fill="#ffff00" font-family="'Liberation Sans', sans-serif" textLength="25.0559" lengthAdjust="spacing" >22</text>
<text transform="translate(36.9,26) scale(1.55,1)" font-size="24" fill="#ffff00" font-family="'Liberation Sans', sans-serif">-</text>
<text x="50.4858" y="26" font-size="24" fill="#ffff00" font-family="'Liberation Sans', sans-serif" textLength="38.1737" lengthAdjust="spacing" >aug</text>
<text transform="translate(90.1,26) scale(1.55,1)" font-size="24" fill="#ffff00" font-family="'Liberation Sans', sans-serif">-</text>
<text x="103.617" y="26" font-size="24" fill="#ffff00" font-family="'Liberation Sans', sans-serif" textLength="149.675" lengthAdjust="spacing" >1997,10:05:00</text>
<text x="268.5" y="26" font-size="24" fill="#fff" font-family="'Liberation Sans', sans-serif" textLength="66" lengthAdjust="spacing" >ir plot.</text>
<text x="347.5" y="26" font-size="24" fill="#fff" font-family="'Liberation Sans', sans-serif" textLength="120" lengthAdjust="spacing" >Rhb_lowprf</text>
<text x="480" y="26" font-size="24" fill="#fff" font-family="'Liberation Sans', sans-serif" textLength="69" lengthAdjust="spacing" >maxdz</text>
<text x="11" y="56" font-size="24" fill="#fff" font-family="'Liberation Sans', sans-serif" textLength="146" lengthAdjust="spacing" >filled contour.</text>
<line x1="485" y1="34.5" x2="571" y2="34.5" stroke="#a0a0a0" stroke-width="1" />
<line x1="487" y1="237.5" x2="571" y2="237.5" stroke="#a0a0a0" stroke-width="1" />
<line x1="487" y1="375.5" x2="571" y2="375.5" stroke="#a0a0a0" stroke-width="1" />
<text x="489" y="48" font-size="17.5" fill="#fff" font-family="'Liberation Sans', sans-serif" >ir</text>
<rect x="489" y="60" width="10" height="95" fill="url(#irg)" />
<rect x="489" y="155" width="10" height="16" fill="#0000ff" />
<rect x="489" y="171" width="10" height="5" fill="#ff0000" />
<rect x="489" y="176" width="10" height="4" fill="#ffa500" />
<rect x="489" y="180" width="10" height="4" fill="#ffc0cb" />
<rect x="489" y="184" width="10" height="4" fill="#ffff00" />
<text x="504.5" y="67.5" font-size="17.5" fill="#fff" font-family="'Liberation Sans', sans-serif" textLength="43.5" lengthAdjust="spacing" >387.0</text>
<text x="504.5" y="89.85" font-size="17.5" fill="#fff" font-family="'Liberation Sans', sans-serif" textLength="43.5" lengthAdjust="spacing" >351.0</text>
<text x="504.5" y="112.2" font-size="17.5" fill="#fff" font-family="'Liberation Sans', sans-serif" textLength="43.5" lengthAdjust="spacing" >315.0</text>
<text x="504.5" y="134.55" font-size="17.5" fill="#fff" font-family="'Liberation Sans', sans-serif" textLength="43.5" lengthAdjust="spacing" >279.0</text>
<text x="504.5" y="156.9" font-size="17.5" fill="#fff" font-family="'Liberation Sans', sans-serif" textLength="43.5" lengthAdjust="spacing" >243.0</text>
<text x="504.5" y="179.25" font-size="17.5" fill="#fff" font-family="'Liberation Sans', sans-serif" textLength="43.5" lengthAdjust="spacing" >207.0</text>
<text x="489.5" y="257" font-size="17.5" fill="#fff" font-family="'Liberation Sans', sans-serif" textLength="51.5" lengthAdjust="spacing" >maxdz</text>
<rect x="489.5" y="263" width="9.5" height="28" fill="#b22222" />
<text x="504.5" y="284" font-size="17.5" fill="#fff" font-family="'Liberation Sans', sans-serif" textLength="34" lengthAdjust="spacing" >55.0</text>
<rect x="489.5" y="291" width="9.5" height="28" fill="#ffa07a" />
<text x="504.5" y="312" font-size="17.5" fill="#fff" font-family="'Liberation Sans', sans-serif" textLength="34" lengthAdjust="spacing" >45.0</text>
<rect x="489.5" y="319" width="9.5" height="28" fill="#f8f47c" />
<text x="504.5" y="340" font-size="17.5" fill="#fff" font-family="'Liberation Sans', sans-serif" textLength="34" lengthAdjust="spacing" >35.0</text>
<rect x="489.5" y="347" width="9.5" height="28" fill="#00fa9a" />
<text x="504.5" y="368" font-size="17.5" fill="#fff" font-family="'Liberation Sans', sans-serif" textLength="34" lengthAdjust="spacing" >25.0</text>
<rect x="5" y="376" width="46" height="48" fill="#191970" />
<rect x="5.5" y="376.5" width="45" height="47" fill="none" stroke="#8c8c8c" stroke-width="1"/>
<g fill="none" stroke="#ffff00" stroke-linecap="round" stroke-linejoin="round" shape-rendering="auto">
<path d="M13.8,388.5 C16.1,383.8 21.6,382.2 26.2,384.5 C30.8,386.9 34.4,388.5 38.1,387.5 L41.6,385.4" stroke-width="2.1"/>
<path d="M41.6,385.4 C33.5,391.1 24.3,401.6 13.1,416.3" stroke-width="1.7"/>
<path d="M13.1,416.3 C17.0,412.5 21.6,412.0 26.2,414.2 C30.8,416.7 34.4,418.3 38.1,415.7 L42.5,411.5" stroke-width="2.1"/>
</g>
<rect x="52" y="376" width="46" height="48" fill="#191970" />
<rect x="52.5" y="376.5" width="45" height="47" fill="none" stroke="#8c8c8c" stroke-width="1"/>
<text x="54.5" y="389.5" font-size="13" fill="#ffff00" font-family="'Liberation Sans', sans-serif" textLength="31" lengthAdjust="spacingAndGlyphs" font-weight="bold" >GOES</text>
<clipPath id="gc52_376"><rect x="55" y="391" width="32" height="30"/></clipPath>
<g clip-path="url(#gc52_376)" shape-rendering="auto">
<circle cx="62" cy="410" r="15.5" fill="url(#stipY)"/>
<ellipse cx="72" cy="410" rx="4" ry="6.5" fill="#ffff00"/>
<path d="M55,421 v-8 h5 a6,6 0 0 1 5,8 z" fill="#ffff00"/>
</g>
<line x1="76" y1="406" x2="90" y2="399" stroke="#ffff00" stroke-width="1" stroke-dasharray="1 1" shape-rendering="auto"/>
<line x1="79" y1="411" x2="91" y2="401" stroke="#ffff00" stroke-width="1" stroke-dasharray="1 1" shape-rendering="auto"/>
<line x1="74" y1="402" x2="89" y2="397" stroke="#ffff00" stroke-width="1" stroke-dasharray="1 2" shape-rendering="auto"/>
<polygon points="92.0,394.0 95.0,397.0 92.0,400.0 89.0,397.0" fill="#ffff00" />
<rect x="72" y="393" width="1" height="1" fill="#ffff00" />
<rect x="80" y="395" width="1" height="1" fill="#ffff00" />
<rect x="85" y="393" width="1" height="1" fill="#ffff00" />
<rect x="90" y="406" width="1" height="1" fill="#ffff00" />
<rect x="88" y="412" width="1" height="1" fill="#ffff00" />
<rect x="77" y="418" width="1" height="1" fill="#ffff00" />
<text x="80" y="420" font-size="10" fill="#ffff00" font-family="'Liberation Sans', sans-serif" textLength="14" lengthAdjust="spacingAndGlyphs" >.IR</text>
<rect x="99" y="376" width="46" height="48" fill="#191970" />
<rect x="99.5" y="376.5" width="45" height="47" fill="none" stroke="#8c8c8c" stroke-width="1"/>
<path d="M104.0,384.0 C107.0,395.0 114.0,404.0 127.0,406.0" fill="none" stroke="#ffff00" stroke-width="2.0" shape-rendering="auto"/>
<polygon points="111.5,396.5 115.0,396.5 115.0,415.0 107.5,415.0 107.5,410.5 109.5,409.0" fill="#ffff00" />
<rect x="112.5" y="398" width="1.5" height="2.5" fill="#191970" />
<text x="134.5" y="392.5" font-size="14" fill="#ffff00" font-family="'Liberation Sans', sans-serif" textLength="7" lengthAdjust="spacingAndGlyphs" font-weight="normal" text-anchor="middle" >S</text>
<text x="134.5" y="404.7" font-size="14" fill="#ffff00" font-family="'Liberation Sans', sans-serif" textLength="7" lengthAdjust="spacingAndGlyphs" font-weight="normal" text-anchor="middle" >U</text>
<text x="134.5" y="416.9" font-size="14" fill="#ffff00" font-family="'Liberation Sans', sans-serif" textLength="7" lengthAdjust="spacingAndGlyphs" font-weight="normal" text-anchor="middle" >R</text>
<rect x="146" y="376" width="46" height="48" fill="#696969" />
<rect x="146.5" y="376.5" width="45" height="47" fill="none" stroke="#8c8c8c" stroke-width="1"/>
<g stroke="#dcdcdc" stroke-width="1" fill="none">
<line x1="151.5" y1="381" x2="151.5" y2="419"/>
<line x1="151" y1="381.5" x2="188" y2="381.5"/>
<line x1="160.5" y1="381" x2="160.5" y2="419"/>
<line x1="151" y1="390.9" x2="188" y2="390.9"/>
<line x1="169.5" y1="381" x2="169.5" y2="419"/>
<line x1="151" y1="400.3" x2="188" y2="400.3"/>
<line x1="178.5" y1="381" x2="178.5" y2="419"/>
<line x1="151" y1="409.7" x2="188" y2="409.7"/>
<line x1="187.5" y1="381" x2="187.5" y2="419"/>
<line x1="151" y1="419.1" x2="188" y2="419.1"/>
</g>
<path d="M156.0,383.0 C159.0,394.0 166.0,403.0 179.0,405.0" fill="none" stroke="#dcdcdc" stroke-width="2.0" shape-rendering="auto"/>
<polygon points="163.5,395.5 167.0,395.5 167.0,414.0 159.5,414.0 159.5,409.5 161.5,408.0" fill="#dcdcdc" />
<rect x="164.5" y="397" width="1.5" height="2.5" fill="#696969" />
<rect x="193" y="376" width="14" height="48" fill="#696969" />
<rect x="193.5" y="376.5" width="13" height="47" fill="none" stroke="#8c8c8c" stroke-width="1"/>
<text x="200" y="388" font-size="7.5" fill="#dcdcdc" font-family="'Liberation Sans', sans-serif" textLength="5" lengthAdjust="spacingAndGlyphs" font-weight="normal" text-anchor="middle" >B</text>
<text x="200" y="394.6" font-size="7.5" fill="#dcdcdc" font-family="'Liberation Sans', sans-serif" textLength="5" lengthAdjust="spacingAndGlyphs" font-weight="normal" text-anchor="middle" >O</text>
<text x="200" y="401.2" font-size="7.5" fill="#dcdcdc" font-family="'Liberation Sans', sans-serif" textLength="5" lengthAdjust="spacingAndGlyphs" font-weight="normal" text-anchor="middle" >U</text>
<text x="200" y="407.8" font-size="7.5" fill="#dcdcdc" font-family="'Liberation Sans', sans-serif" textLength="5" lengthAdjust="spacingAndGlyphs" font-weight="normal" text-anchor="middle" >N</text>
<text x="200" y="414.4" font-size="7.5" fill="#dcdcdc" font-family="'Liberation Sans', sans-serif" textLength="5" lengthAdjust="spacingAndGlyphs" font-weight="normal" text-anchor="middle" >D</text>
<text x="200" y="421" font-size="7.5" fill="#dcdcdc" font-family="'Liberation Sans', sans-serif" textLength="5" lengthAdjust="spacingAndGlyphs" font-weight="normal" text-anchor="middle" >S</text>
<rect x="208" y="400" width="22" height="24" fill="#191970" />
<rect x="208.5" y="400.5" width="21" height="23" fill="none" stroke="#8c8c8c" stroke-width="1"/>
<g stroke="#ffff00" stroke-width="1" fill="none">
<line x1="211.5" y1="404" x2="211.5" y2="420"/><line x1="211" y1="404.5" x2="227" y2="404.5"/>
<line x1="216.5" y1="404" x2="216.5" y2="420"/><line x1="211" y1="409.5" x2="227" y2="409.5"/>
<line x1="221.5" y1="404" x2="221.5" y2="420"/><line x1="211" y1="414.5" x2="227" y2="414.5"/>
<line x1="226.5" y1="404" x2="226.5" y2="420"/><line x1="211" y1="419.5" x2="227" y2="419.5"/>
</g>
<rect x="231" y="376" width="21" height="48" fill="#191970" />
<rect x="231.5" y="376.5" width="20" height="47" fill="none" stroke="#8c8c8c" stroke-width="1"/>
<polygon points="234.0,380.0 239.0,379.0 238.0,384.0 241.0,389.0 237.0,388.0 235.0,384.0" fill="#ffff00" />
<polygon points="242.0,381.0 249.0,379.0 246.0,384.0 249.0,388.0 245.0,390.0 243.0,385.0" fill="#ffff00" />
<text x="241.5" y="402.5" font-size="11" fill="#ffff00" font-family="'Liberation Sans', sans-serif" textLength="7" lengthAdjust="spacingAndGlyphs" font-weight="normal" text-anchor="middle" >M</text>
<text x="241.5" y="411.2" font-size="11" fill="#ffff00" font-family="'Liberation Sans', sans-serif" textLength="7" lengthAdjust="spacingAndGlyphs" font-weight="normal" text-anchor="middle" >A</text>
<text x="241.5" y="419.9" font-size="11" fill="#ffff00" font-family="'Liberation Sans', sans-serif" textLength="7" lengthAdjust="spacingAndGlyphs" font-weight="normal" text-anchor="middle" >P</text>
<rect x="253" y="376" width="21" height="48" fill="#696969" />
<rect x="253.5" y="376.5" width="20" height="47" fill="none" stroke="#8c8c8c" stroke-width="1"/>
<g fill="none" stroke="#dcdcdc" stroke-width="1">
<circle cx="263.5" cy="400" r="8"/><circle cx="263.5" cy="400" r="5.4"/><circle cx="263.5" cy="400" r="2.6"/>
<line x1="266.1" y1="400.0" x2="271.5" y2="400.0"/>
<line x1="265.3" y1="401.8" x2="269.2" y2="405.7"/>
<line x1="263.5" y1="402.6" x2="263.5" y2="408.0"/>
<line x1="261.7" y1="401.8" x2="257.8" y2="405.7"/>
<line x1="260.9" y1="400.0" x2="255.5" y2="400.0"/>
<line x1="261.7" y1="398.2" x2="257.8" y2="394.3"/>
<line x1="263.5" y1="397.4" x2="263.5" y2="392.0"/>
<line x1="265.3" y1="398.2" x2="269.2" y2="394.3"/>
</g>
<rect x="275" y="400" width="22" height="24" fill="#191970" />
<rect x="275.5" y="400.5" width="21" height="23" fill="none" stroke="#8c8c8c" stroke-width="1"/>
<rect x="285.525" y="407.7" width="0.95" height="0.95" fill="#ffff00" />
<rect x="283.625" y="408.65" width="4.75" height="4.75" fill="#ffff00" />
<rect x="282.675" y="413.4" width="6.65" height="1.9" fill="#ffff00" />
<rect x="285.525" y="415.3" width="1.425" height="1.9" fill="#ffff00" />
<polygon points="281.2,417.2 290.8,417.2 289.3,419.6 282.7,419.6" fill="#ffff00" />
<path d="M278.4,418.1 l1.9,2.4 l1.9,-1.9 l1.9,1.9 l1.9,-1.9 l1.9,1.9 l1.9,-1.9 l1.9,1.9 l1.9,-2.4" fill="none" stroke="#ffff00" stroke-width="1.1" shape-rendering="auto"/>
<rect x="298" y="376" width="46" height="48" fill="#696969" />
<rect x="298.5" y="376.5" width="45" height="47" fill="none" stroke="#8c8c8c" stroke-width="1"/>
<g shape-rendering="auto">
<polygon points="305.5,407.5 339.0,407.5 336.5,413.0 308.5,413.0" fill="none" stroke="#dcdcdc" stroke-width="1"/>
<polygon points="308.0,407.5 308.0,399.5 312.5,399.5 314.0,407.5" fill="none" stroke="#dcdcdc" stroke-width="1"/>
<circle cx="321.5" cy="398.5" r="3.2" fill="none" stroke="#dcdcdc" stroke-width="1"/>
</g>
<line x1="320.5" y1="401.7" x2="320.5" y2="407.5" stroke="#dcdcdc" stroke-width="1" />
<line x1="322.5" y1="401.7" x2="322.5" y2="407.5" stroke="#dcdcdc" stroke-width="1" />
<line x1="333.5" y1="391" x2="333.5" y2="407.5" stroke="#dcdcdc" stroke-width="1" />
<polygon points="302.0,419.0 302.0,413.0 304.5,411.8 307.0,414.6 309.4,411.8 311.9,414.6 314.3,411.8 316.8,414.6 319.2,411.8 321.7,414.6 324.1,411.8 326.6,414.6 329.0,411.8 331.5,414.6 333.9,411.8 336.4,414.6 338.8,411.8 341.3,414.6 342.0,412.0 342.0,419.0" fill="#dcdcdc" />
<line x1="571.5" y1="2" x2="571.5" y2="387" stroke="#000" stroke-width="1" />
<line x1="571.5" y1="2" x2="571.5" y2="387" stroke="#fff" stroke-width="1" stroke-dasharray="1 1"/>
<line x1="572.5" y1="387" x2="572.5" y2="427" stroke="#000" stroke-width="1" />
<line x1="572.5" y1="387" x2="572.5" y2="427" stroke="#fff" stroke-width="1" stroke-dasharray="1 1"/>
<line x1="573.5" y1="388" x2="573.5" y2="427" stroke="#fff" stroke-width="1" stroke-dasharray="1 1"/>
<line x1="0" y1="426.5" x2="572" y2="426.5" stroke="#000" stroke-width="1" />
<line x1="0" y1="426.5" x2="572" y2="426.5" stroke="#fff" stroke-width="1" stroke-dasharray="1 1"/>
<g transform="translate(0,0)">
<rect x="571" y="2" width="562" height="385" fill="#000" />
<clipPath id="xsclipdz"><polygon points="623,179.2 633,179.2 635,176 635,167.2 689,167.2 691,164.5 691,150 807,150 807,167 847.2,167 850,162.3 850,150 862.7,150 862.7,195.9 922.8,195.9 922.8,207 978.8,207 978.8,265 1038.8,265 1038.8,298.5 623,298.5"/></clipPath>
<g clip-path="url(#xsclipdz)">
<rect x="620" y="140" width="425" height="160" fill="#00b2e2" />
<polygon points="623.0,210.8 632.0,206.0 645.8,191.6 656.0,180.4 671.6,174.4 688.8,167.5 706.0,162.3 723.0,157.2 747.0,151.2 774.7,152.0 800.5,154.6 807.0,155.0 807.0,167.0 847.2,167.0 862.7,179.2 862.7,195.0 1040.0,195.0 1040.0,300.0 623.0,300.0" fill="#00e896" />
<polygon points="623.0,261.2 630.3,253.4 640.6,238.0 654.4,226.0 671.6,220.0 688.8,211.3 709.4,205.3 730.0,198.4 750.6,186.4 774.7,184.7 807.3,183.0 814.2,185.0 826.3,190.7 840.0,195.0 847.2,198.4 864.4,203.3 898.8,207.9 922.8,211.3 950.3,215.6 978.8,220.8 978.8,300.0 623.0,300.0" fill="#00704a" />
<polygon points="636.3,298.5 640.6,287.8 651.8,276.6 671.6,268.0 688.8,261.2 706.0,254.3 736.9,248.3 750.6,240.5 774.7,233.7 791.9,226.0 807.3,217.3 826.3,216.0 847.2,214.8 864.4,216.5 898.8,220.0 919.4,223.4 933.1,227.7 950.3,235.4 958.0,248.3 978.8,253.4 978.8,265.0 999.0,265.0 1000.0,300.0 636.0,300.0" fill="#c8c8c8" />
<polygon points="797.9,298.5 798.8,276.6 807.3,266.3 816.0,258.6 826.3,252.6 838.6,246.6 850.6,243.1 864.4,244.0 890.2,248.3 916.0,249.1 941.7,255.2 967.5,260.3 978.8,265.0 983.0,275.8 984.7,298.5" fill="#d89030" />
<polygon points="849.8,298.5 852.3,287.8 860.9,275.8 867.8,271.5 890.2,267.2 907.3,262.9 919.4,262.9 928.0,265.5 936.6,281.0 943.4,298.5" fill="#eeb422" />
<polygon points="999.0,265.0 1015.0,265.0 1016.0,298.5 1000.0,298.5" fill="#00704a" />
<polygon points="1015.0,265.0 1032.0,265.0 1032.0,298.5 1016.0,298.5" fill="#00e896" />
<rect x="1032" y="265" width="7" height="34" fill="#00b2e2" />
</g>
<g stroke="#fff" stroke-width="1" fill="none">
<rect x="623.5" y="29.5" width="425" height="280"/>
<line x1="677.5" y1="29" x2="677.5" y2="36"/><line x1="677.5" y1="303" x2="677.5" y2="310"/>
<line x1="730.5" y1="29" x2="730.5" y2="36"/><line x1="730.5" y1="303" x2="730.5" y2="310"/>
<line x1="783.5" y1="29" x2="783.5" y2="36"/><line x1="783.5" y1="303" x2="783.5" y2="310"/>
<line x1="836.5" y1="29" x2="836.5" y2="36"/><line x1="836.5" y1="303" x2="836.5" y2="310"/>
<line x1="890.5" y1="29" x2="890.5" y2="36"/><line x1="890.5" y1="303" x2="890.5" y2="310"/>
<line x1="943.5" y1="29" x2="943.5" y2="36"/><line x1="943.5" y1="303" x2="943.5" y2="310"/>
<line x1="996.5" y1="29" x2="996.5" y2="36"/><line x1="996.5" y1="303" x2="996.5" y2="310"/>
<line x1="623" y1="58.5" x2="634" y2="58.5"/><line x1="1038" y1="58.5" x2="1049" y2="58.5"/>
<line x1="623" y1="86.5" x2="634" y2="86.5"/><line x1="1038" y1="86.5" x2="1049" y2="86.5"/>
<line x1="623" y1="114.5" x2="634" y2="114.5"/><line x1="1038" y1="114.5" x2="1049" y2="114.5"/>
<line x1="623" y1="142.5" x2="634" y2="142.5"/><line x1="1038" y1="142.5" x2="1049" y2="142.5"/>
<line x1="623" y1="170.5" x2="634" y2="170.5"/><line x1="1038" y1="170.5" x2="1049" y2="170.5"/>
<line x1="623" y1="198.5" x2="634" y2="198.5"/><line x1="1038" y1="198.5" x2="1049" y2="198.5"/>
<line x1="623" y1="226.5" x2="634" y2="226.5"/><line x1="1038" y1="226.5" x2="1049" y2="226.5"/>
<line x1="623" y1="254.5" x2="634" y2="254.5"/><line x1="1038" y1="254.5" x2="1049" y2="254.5"/>
<line x1="623" y1="282.5" x2="634" y2="282.5"/><line x1="1038" y1="282.5" x2="1049" y2="282.5"/>
</g>
<text x="620" y="28.5" font-size="10.5" fill="#fff" font-family="'Liberation Sans', sans-serif" text-anchor="end" >20</text>
<text x="620" y="84.6" font-size="10.5" fill="#fff" font-family="'Liberation Sans', sans-serif" text-anchor="end" >16</text>
<text x="620" y="140.7" font-size="10.5" fill="#fff" font-family="'Liberation Sans', sans-serif" text-anchor="end" >12</text>
<text x="620" y="196.8" font-size="10.5" fill="#fff" font-family="'Liberation Sans', sans-serif" text-anchor="end" >8</text>
<text x="620" y="252.9" font-size="10.5" fill="#fff" font-family="'Liberation Sans', sans-serif" text-anchor="end" >4</text>
<text x="620" y="309" font-size="10.5" fill="#fff" font-family="'Liberation Sans', sans-serif" text-anchor="end" >0</text>
<text x="623" y="322.5" font-size="10.5" fill="#fff" font-family="'Liberation Sans', sans-serif" text-anchor="middle" >0.0</text>
<text x="729.4" y="322.5" font-size="10.5" fill="#fff" font-family="'Liberation Sans', sans-serif" text-anchor="middle" >4.9</text>
<text x="835.8" y="322.5" font-size="10.5" fill="#fff" font-family="'Liberation Sans', sans-serif" text-anchor="middle" >9.8</text>
<text x="942.2" y="322.5" font-size="10.5" fill="#fff" font-family="'Liberation Sans', sans-serif" text-anchor="middle" >14.7</text>
<text x="1040.5" y="322.5" font-size="10.5" fill="#fff" font-family="'Liberation Sans', sans-serif" >19</text>
<text x="835.5" y="331" font-size="10.5" fill="#fff" font-family="'Liberation Sans', sans-serif" textLength="68" lengthAdjust="spacingAndGlyphs" text-anchor="middle" >Distance in km</text>
<text transform="translate(603.5,217) rotate(-90)" font-family="'Liberation Serif', serif" font-size="12.5" fill="#fff" textLength="95" lengthAdjust="spacing"><tspan font-weight="bold">km above</tspan> MSL</text>
<text x="582.958" y="20.5" font-size="18" fill="#ffff00" font-family="'Liberation Sans', sans-serif" textLength="18.9973" lengthAdjust="spacing" >22</text>
<text transform="translate(603.0,20.5) scale(1.56,1)" font-size="18" fill="#ffff00" font-family="'Liberation Sans', sans-serif">-</text>
<text x="613.296" y="20.5" font-size="18" fill="#ffff00" font-family="'Liberation Sans', sans-serif" textLength="28.9431" lengthAdjust="spacing" >aug</text>
<text transform="translate(643.3,20.5) scale(1.56,1)" font-size="18" fill="#ffff00" font-family="'Liberation Sans', sans-serif">-</text>
<text x="653.58" y="20.5" font-size="18" fill="#ffff00" font-family="'Liberation Sans', sans-serif" textLength="113.483" lengthAdjust="spacing" >1997,10:05:00</text>
<text x="778.8" y="20.5" font-size="18" fill="#fff" font-family="'Liberation Sans', sans-serif" textLength="211.6" lengthAdjust="spacing" >Planar cross-section plot.</text>
<text x="1002" y="20.5" font-size="18" fill="#fff" font-family="'Liberation Sans', sans-serif" textLength="89" lengthAdjust="spacing" >Contour of</text>
<text x="582.6" y="47.7" font-size="18" fill="#fff" font-family="'Liberation Sans', sans-serif" textLength="173" lengthAdjust="spacing" >maxdz using: rhb_3d.</text>
<line x1="1049" y1="28.5" x2="1133" y2="28.5" stroke="#a0a0a0" stroke-width="1" />
<line x1="1049" y1="335.5" x2="1133" y2="335.5" stroke="#a0a0a0" stroke-width="1" />
<text x="1050.5" y="44" font-size="12" fill="#fff" font-family="'Liberation Sans', sans-serif" textLength="33.5" lengthAdjust="spacing" >maxdz</text>
<rect x="1050" y="52" width="10" height="17" fill="#f88080" />
<text x="1065.5" y="64.2" font-size="12" fill="#fff" font-family="'Liberation Sans', sans-serif" >62.5</text>
<rect x="1050" y="69" width="10" height="17" fill="#ff9696" />
<text x="1065.5" y="81.2" font-size="12" fill="#fff" font-family="'Liberation Sans', sans-serif" >57.5</text>
<rect x="1050" y="86" width="10" height="17" fill="#ffaa64" />
<text x="1065.5" y="98.2" font-size="12" fill="#fff" font-family="'Liberation Sans', sans-serif" >52.5</text>
<rect x="1050" y="103" width="10" height="17" fill="#ffdab4" />
<text x="1065.5" y="115.2" font-size="12" fill="#fff" font-family="'Liberation Sans', sans-serif" >47.5</text>
<rect x="1050" y="120" width="10" height="17" fill="#ffdc14" />
<text x="1065.5" y="132.2" font-size="12" fill="#fff" font-family="'Liberation Sans', sans-serif" >42.5</text>
<rect x="1050" y="137" width="10" height="17" fill="#eeb422" />
<text x="1065.5" y="149.2" font-size="12" fill="#fff" font-family="'Liberation Sans', sans-serif" >37.5</text>
<rect x="1050" y="154" width="10" height="17" fill="#d89030" />
<text x="1065.5" y="166.2" font-size="12" fill="#fff" font-family="'Liberation Sans', sans-serif" >32.5</text>
<rect x="1050" y="171" width="10" height="17" fill="#c8c8c8" />
<text x="1065.5" y="183.2" font-size="12" fill="#fff" font-family="'Liberation Sans', sans-serif" >27.5</text>
<rect x="1050" y="188" width="10" height="17" fill="#00704a" />
<text x="1065.5" y="200.2" font-size="12" fill="#fff" font-family="'Liberation Sans', sans-serif" >22.5</text>
<rect x="1050" y="205" width="10" height="17" fill="#00e896" />
<text x="1065.5" y="217.2" font-size="12" fill="#fff" font-family="'Liberation Sans', sans-serif" >17.5</text>
<rect x="1050" y="222" width="10" height="17" fill="#00b2e2" />
<text x="1065.5" y="234.2" font-size="12" fill="#fff" font-family="'Liberation Sans', sans-serif" >12.5</text>
<rect x="1050" y="239" width="10" height="17" fill="#1478e6" />
<text x="1065.5" y="251.2" font-size="12" fill="#fff" font-family="'Liberation Sans', sans-serif" >7.5</text>
<rect x="1050" y="256" width="10" height="17" fill="#1446e6" />
<text x="1065.5" y="268.2" font-size="12" fill="#fff" font-family="'Liberation Sans', sans-serif" >2.5</text>
<rect x="1050" y="273" width="10" height="17" fill="#4a1ee6" />
<text transform="translate(1066.0,285.2) scale(1.51,1)" font-size="12" fill="#fff" font-family="'Liberation Sans', sans-serif">-</text>
<text x="1072.51" y="285.2" font-size="12" fill="#fff" font-family="'Liberation Sans', sans-serif" >2.5</text>
<rect x="1050" y="290" width="10" height="17" fill="#6e0af0" />
<text transform="translate(1066.0,302.2) scale(1.51,1)" font-size="12" fill="#fff" font-family="'Liberation Sans', sans-serif">-</text>
<text x="1072.51" y="302.2" font-size="12" fill="#fff" font-family="'Liberation Sans', sans-serif" >7.5</text>
<rect x="1050" y="307" width="10" height="17" fill="#960af5" />
<text transform="translate(1066.0,319.2) scale(1.51,1)" font-size="12" fill="#fff" font-family="'Liberation Sans', sans-serif">-</text>
<text x="1072.51" y="319.2" font-size="12" fill="#fff" font-family="'Liberation Sans', sans-serif" >12.5</text>
<rect x="577" y="336" width="46" height="48" fill="#191970" />
<rect x="577.5" y="336.5" width="45" height="47" fill="none" stroke="#8c8c8c" stroke-width="1"/>
<g fill="none" stroke="#ffff00" stroke-linecap="round" stroke-linejoin="round" shape-rendering="auto">
<path d="M585.8,348.5 C588.1,343.8 593.6,342.2 598.2,344.5 C602.8,346.9 606.4,348.5 610.1,347.5 L613.6,345.4" stroke-width="2.1"/>
<path d="M613.6,345.4 C605.5,351.1 596.3,361.6 585.1,376.3" stroke-width="1.7"/>
<path d="M585.1,376.3 C589.0,372.5 593.6,372.0 598.2,374.2 C602.8,376.7 606.4,378.3 610.1,375.7 L614.5,371.5" stroke-width="2.1"/>
</g>
<rect x="624" y="336" width="46" height="48" fill="#191970" />
<rect x="624.5" y="336.5" width="45" height="47" fill="none" stroke="#8c8c8c" stroke-width="1"/>
<text x="647" y="344.8" font-size="7.5" fill="#ffff00" font-family="'Liberation Sans', sans-serif" textLength="25" lengthAdjust="spacingAndGlyphs" font-weight="bold" text-anchor="middle" >CROSS</text>
<text x="647" y="379.8" font-size="7.5" fill="#ffff00" font-family="'Liberation Sans', sans-serif" textLength="31" lengthAdjust="spacingAndGlyphs" font-weight="bold" text-anchor="middle" >SECTION</text>
<g fill="none" stroke="#ffff00" stroke-width="1">
<rect x="628.5" y="353.5" width="22" height="20"/>
<rect x="643.5" y="346.5" width="22" height="20"/>
<line x1="628.5" y1="353.5" x2="643.5" y2="346.5"/>
<line x1="650.5" y1="353.5" x2="665.5" y2="346.5"/>
<line x1="628.5" y1="373.5" x2="643.5" y2="366.5"/>
<line x1="650.5" y1="373.5" x2="665.5" y2="366.5"/>
</g>
<polygon points="637.0,350.0 658.0,348.0 658.0,371.0 637.0,373.0" fill="url(#stipY)" />
<rect x="671" y="336" width="46" height="48" fill="#696969" />
<rect x="671.5" y="336.5" width="45" height="47" fill="none" stroke="#8c8c8c" stroke-width="1"/>
<text x="694" y="344.8" font-size="7.5" fill="#e0e0e0" font-family="'Liberation Sans', sans-serif" textLength="25" lengthAdjust="spacingAndGlyphs" font-weight="bold" text-anchor="middle" >CROSS</text>
<text x="694" y="379.8" font-size="7.5" fill="#e0e0e0" font-family="'Liberation Sans', sans-serif" textLength="31" lengthAdjust="spacingAndGlyphs" font-weight="bold" text-anchor="middle" >SECTION</text>
<g fill="none" stroke="#e0e0e0" stroke-width="1">
<rect x="675.5" y="353.5" width="22" height="20"/>
<rect x="690.5" y="346.5" width="22" height="20"/>
<line x1="675.5" y1="353.5" x2="690.5" y2="346.5"/>
<line x1="697.5" y1="353.5" x2="712.5" y2="346.5"/>
<line x1="675.5" y1="373.5" x2="690.5" y2="366.5"/>
<line x1="697.5" y1="373.5" x2="712.5" y2="366.5"/>
</g>
<polygon points="684.0,350.0 705.0,348.0 705.0,371.0 684.0,373.0" fill="url(#stipG)" />
<rect x="718" y="336" width="46" height="48" fill="#696969" />
<rect x="718.5" y="336.5" width="45" height="47" fill="none" stroke="#8c8c8c" stroke-width="1"/>
<text x="741" y="344.8" font-size="7.5" fill="#e0e0e0" font-family="'Liberation Sans', sans-serif" textLength="25" lengthAdjust="spacingAndGlyphs" font-weight="bold" text-anchor="middle" >CROSS</text>
<text x="741" y="379.8" font-size="7.5" fill="#e0e0e0" font-family="'Liberation Sans', sans-serif" textLength="31" lengthAdjust="spacingAndGlyphs" font-weight="bold" text-anchor="middle" >SECTION</text>
<g fill="none" stroke="#e0e0e0" stroke-width="1">
<rect x="722.5" y="353.5" width="22" height="20"/>
<rect x="737.5" y="346.5" width="22" height="20"/>
<line x1="722.5" y1="353.5" x2="737.5" y2="346.5"/>
<line x1="744.5" y1="353.5" x2="759.5" y2="346.5"/>
<line x1="722.5" y1="373.5" x2="737.5" y2="366.5"/>
<line x1="744.5" y1="373.5" x2="759.5" y2="366.5"/>
</g>
<polygon points="731.0,350.0 752.0,348.0 752.0,371.0 731.0,373.0" fill="url(#stipG)" />
<line x1="571" y1="2.5" x2="1133" y2="2.5" stroke="#000" stroke-width="1" />
<line x1="571" y1="2.5" x2="1133" y2="2.5" stroke="#fff" stroke-width="1" stroke-dasharray="1 1"/>
<line x1="571.5" y1="2" x2="571.5" y2="387" stroke="#000" stroke-width="1" />
<line x1="571.5" y1="2" x2="571.5" y2="387" stroke="#fff" stroke-width="1" stroke-dasharray="1 1"/>
<line x1="1132.5" y1="2" x2="1132.5" y2="387" stroke="#000" stroke-width="1" />
<line x1="1132.5" y1="2" x2="1132.5" y2="387" stroke="#fff" stroke-width="1" stroke-dasharray="1 1"/>
<line x1="571" y1="386.5" x2="1133" y2="386.5" stroke="#000" stroke-width="1" />
<line x1="571" y1="386.5" x2="1133" y2="386.5" stroke="#fff" stroke-width="1" stroke-dasharray="1 1"/>
</g>
<rect x="1135" y="420" width="6" height="286" fill="#fff" />
<line x1="1140.5" y1="420" x2="1140.5" y2="706" stroke="#000" stroke-width="1" />
<line x1="1140.5" y1="420" x2="1140.5" y2="706" stroke="#fff" stroke-width="1" stroke-dasharray="1 1"/>
<line x1="1135" y1="705.5" x2="1141" y2="705.5" stroke="#000" stroke-width="1" />
<line x1="1135" y1="705.5" x2="1141" y2="705.5" stroke="#fff" stroke-width="1" stroke-dasharray="1 1"/>
<g transform="translate(2,384)">
<rect x="571" y="2" width="562" height="385" fill="#000" />
<clipPath id="xscliprv"><polygon points="623,179.2 633,179.2 635,176 635,167.2 689,167.2 691,164.5 691,150 807,150 807,167 847.2,167 850,162.3 850,150 862.7,150 862.7,195.9 922.8,195.9 922.8,207 978.8,207 978.8,265 1038.8,265 1038.8,298.5 623,298.5"/></clipPath>
<g clip-path="url(#xscliprv)">
<rect x="620" y="140" width="425" height="160" fill="#b4b4b4" />
<polygon points="623.2,254.3 652.4,255.5 691.9,251.7 714.3,253.4 772.7,253.1 807.0,257.7 828.0,262.4 853.8,265.8 879.6,265.5 914.0,262.9 948.3,258.6 965.5,254.3 974.1,248.3 978.9,241.4 978.9,265.0 1039.0,265.0 1039.0,299.0 623.0,299.0" fill="#a84800" />
<polygon points="968.0,207.0 978.9,207.0 978.9,214.0" fill="#a84800" />
<polygon points="623.2,286.0 652.4,292.0 678.0,293.5 704.0,289.5 738.3,285.2 781.3,285.2 807.0,287.8 824.3,293.0 850.3,298.5 623.0,299.0" fill="#d8905a" />
<polygon points="1015.3,265.0 1039.0,265.0 1039.0,276.0 1032.0,274.0" fill="#b4b4b4" />
<polygon points="1018.8,298.5 1019.6,289.5 1025.7,282.7 1039.0,276.6 1039.0,299.0" fill="#b4b4b4" />
<polygon points="775.3,150.0 781.3,157.2 789.9,169.2 800.2,179.5 812.2,188.1 824.3,191.2 838.0,192.4 845.0,194.0 862.9,192.4 862.9,150.0 807.0,150.0" fill="#a84800" />
<polygon points="822.5,167.0 838.0,175.2 845.2,179.5 862.9,182.0 862.9,150.0 850.0,150.0 850.0,162.3 847.3,167.0" fill="#d8905a" />
<polygon points="804.0,150.0 807.0,150.0 807.0,153.0" fill="#d8905a" />
<polygon points="850.0,150.0 862.9,150.0 862.9,169.0 850.0,162.3" fill="#ffb41e" />
<polygon points="854.0,150.0 862.9,150.0 862.9,154.5" fill="#ffff00" />
<polygon points="824.3,232.0 830.0,222.0 838.0,214.0 845.2,208.0 871.0,203.6 900.2,196.4 922.9,195.9 922.9,207.0 938.9,207.0 934.6,219.0 926.0,236.3 914.0,247.4 879.6,251.7 853.8,251.4 836.6,248.3 828.0,240.5" fill="#005010" />
</g>
<g stroke="#fff" stroke-width="1" fill="none">
<rect x="623.5" y="29.5" width="425" height="280"/>
<line x1="677.5" y1="29" x2="677.5" y2="36"/><line x1="677.5" y1="303" x2="677.5" y2="310"/>
<line x1="730.5" y1="29" x2="730.5" y2="36"/><line x1="730.5" y1="303" x2="730.5" y2="310"/>
<line x1="783.5" y1="29" x2="783.5" y2="36"/><line x1="783.5" y1="303" x2="783.5" y2="310"/>
<line x1="836.5" y1="29" x2="836.5" y2="36"/><line x1="836.5" y1="303" x2="836.5" y2="310"/>
<line x1="890.5" y1="29" x2="890.5" y2="36"/><line x1="890.5" y1="303" x2="890.5" y2="310"/>
<line x1="943.5" y1="29" x2="943.5" y2="36"/><line x1="943.5" y1="303" x2="943.5" y2="310"/>
<line x1="996.5" y1="29" x2="996.5" y2="36"/><line x1="996.5" y1="303" x2="996.5" y2="310"/>
<line x1="623" y1="58.5" x2="634" y2="58.5"/><line x1="1038" y1="58.5" x2="1049" y2="58.5"/>
<line x1="623" y1="86.5" x2="634" y2="86.5"/><line x1="1038" y1="86.5" x2="1049" y2="86.5"/>
<line x1="623" y1="114.5" x2="634" y2="114.5"/><line x1="1038" y1="114.5" x2="1049" y2="114.5"/>
<line x1="623" y1="142.5" x2="634" y2="142.5"/><line x1="1038" y1="142.5" x2="1049" y2="142.5"/>
<line x1="623" y1="170.5" x2="634" y2="170.5"/><line x1="1038" y1="170.5" x2="1049" y2="170.5"/>
<line x1="623" y1="198.5" x2="634" y2="198.5"/><line x1="1038" y1="198.5" x2="1049" y2="198.5"/>
<line x1="623" y1="226.5" x2="634" y2="226.5"/><line x1="1038" y1="226.5" x2="1049" y2="226.5"/>
<line x1="623" y1="254.5" x2="634" y2="254.5"/><line x1="1038" y1="254.5" x2="1049" y2="254.5"/>
<line x1="623" y1="282.5" x2="634" y2="282.5"/><line x1="1038" y1="282.5" x2="1049" y2="282.5"/>
</g>
<text x="620" y="28.5" font-size="10.5" fill="#fff" font-family="'Liberation Sans', sans-serif" text-anchor="end" >20</text>
<text x="620" y="84.6" font-size="10.5" fill="#fff" font-family="'Liberation Sans', sans-serif" text-anchor="end" >16</text>
<text x="620" y="140.7" font-size="10.5" fill="#fff" font-family="'Liberation Sans', sans-serif" text-anchor="end" >12</text>
<text x="620" y="196.8" font-size="10.5" fill="#fff" font-family="'Liberation Sans', sans-serif" text-anchor="end" >8</text>
<text x="620" y="252.9" font-size="10.5" fill="#fff" font-family="'Liberation Sans', sans-serif" text-anchor="end" >4</text>
<text x="620" y="309" font-size="10.5" fill="#fff" font-family="'Liberation Sans', sans-serif" text-anchor="end" >0</text>
<text x="623" y="322.5" font-size="10.5" fill="#fff" font-family="'Liberation Sans', sans-serif" text-anchor="middle" >0.0</text>
<text x="729.4" y="322.5" font-size="10.5" fill="#fff" font-family="'Liberation Sans', sans-serif" text-anchor="middle" >4.9</text>
<text x="835.8" y="322.5" font-size="10.5" fill="#fff" font-family="'Liberation Sans', sans-serif" text-anchor="middle" >9.8</text>
<text x="942.2" y="322.5" font-size="10.5" fill="#fff" font-family="'Liberation Sans', sans-serif" text-anchor="middle" >14.7</text>
<text x="1040.5" y="322.5" font-size="10.5" fill="#fff" font-family="'Liberation Sans', sans-serif" >19</text>
<text x="835.5" y="331" font-size="10.5" fill="#fff" font-family="'Liberation Sans', sans-serif" textLength="68" lengthAdjust="spacingAndGlyphs" text-anchor="middle" >Distance in km</text>
<text transform="translate(603.5,217) rotate(-90)" font-family="'Liberation Serif', serif" font-size="12.5" fill="#fff" textLength="95" lengthAdjust="spacing"><tspan font-weight="bold">km above</tspan> MSL</text>
<text x="582.958" y="20.5" font-size="18" fill="#ffff00" font-family="'Liberation Sans', sans-serif" textLength="18.9973" lengthAdjust="spacing" >22</text>
<text transform="translate(603.0,20.5) scale(1.56,1)" font-size="18" fill="#ffff00" font-family="'Liberation Sans', sans-serif">-</text>
<text x="613.296" y="20.5" font-size="18" fill="#ffff00" font-family="'Liberation Sans', sans-serif" textLength="28.9431" lengthAdjust="spacing" >aug</text>
<text transform="translate(643.3,20.5) scale(1.56,1)" font-size="18" fill="#ffff00" font-family="'Liberation Sans', sans-serif">-</text>
<text x="653.58" y="20.5" font-size="18" fill="#ffff00" font-family="'Liberation Sans', sans-serif" textLength="113.483" lengthAdjust="spacing" >1997,10:05:00</text>
<text x="778.8" y="20.5" font-size="18" fill="#fff" font-family="'Liberation Sans', sans-serif" textLength="211.6" lengthAdjust="spacing" >Planar cross-section plot.</text>
<text x="1002" y="20.5" font-size="18" fill="#fff" font-family="'Liberation Sans', sans-serif" textLength="89" lengthAdjust="spacing" >Contour of</text>
<text x="582.6" y="47.7" font-size="18" fill="#fff" font-family="'Liberation Sans', sans-serif" textLength="228" lengthAdjust="spacing" >radialvelocity using: rhb_3d.</text>
<line x1="1049" y1="28.5" x2="1133" y2="28.5" stroke="#a0a0a0" stroke-width="1" />
<line x1="1049" y1="335.5" x2="1133" y2="335.5" stroke="#a0a0a0" stroke-width="1" />
<text x="1050" y="44" font-size="12.5" fill="#fff" font-family="'Liberation Sans', sans-serif" textLength="75" lengthAdjust="spacing" >radialvelocity</text>
<rect x="1050" y="52" width="10" height="11" fill="#ff0000" />
<text x="1065.8" y="61.7" font-size="12" fill="#fff" font-family="'Liberation Sans', sans-serif" >24.0</text>
<rect x="1050" y="63" width="10" height="11" fill="#d20000" />
<text x="1065.8" y="72.7" font-size="12" fill="#fff" font-family="'Liberation Sans', sans-serif" >22.0</text>
<rect x="1050" y="74" width="10" height="11" fill="#8c0000" />
<text x="1065.8" y="83.7" font-size="12" fill="#fff" font-family="'Liberation Sans', sans-serif" >20.0</text>
<rect x="1050" y="85" width="10" height="11" fill="#e15a00" />
<text x="1065.8" y="94.7" font-size="12" fill="#fff" font-family="'Liberation Sans', sans-serif" >18.0</text>
<rect x="1050" y="96" width="10" height="11" fill="#ff7d00" />
<text x="1065.8" y="105.7" font-size="12" fill="#fff" font-family="'Liberation Sans', sans-serif" >16.0</text>
<rect x="1050" y="107" width="10" height="11" fill="#ff5a5a" />
<text x="1065.8" y="116.7" font-size="12" fill="#fff" font-family="'Liberation Sans', sans-serif" >14.0</text>
<rect x="1050" y="118" width="10" height="11" fill="#ff8c8c" />
<text x="1065.8" y="127.7" font-size="12" fill="#fff" font-family="'Liberation Sans', sans-serif" >12.0</text>
<rect x="1050" y="129" width="10" height="11" fill="#ffbebe" />
<text x="1065.8" y="138.7" font-size="12" fill="#fff" font-family="'Liberation Sans', sans-serif" >10.0</text>
<rect x="1050" y="140" width="10" height="11" fill="#ffff00" />
<text x="1065.8" y="149.7" font-size="12" fill="#fff" font-family="'Liberation Sans', sans-serif" >8.0</text>
<rect x="1050" y="151" width="10" height="11" fill="#ffb41e" />
<text x="1065.8" y="160.7" font-size="12" fill="#fff" font-family="'Liberation Sans', sans-serif" >6.0</text>
<rect x="1050" y="162" width="10" height="11" fill="#d8905a" />
<text x="1065.8" y="171.7" font-size="12" fill="#fff" font-family="'Liberation Sans', sans-serif" >4.0</text>
<rect x="1050" y="173" width="10" height="11" fill="#a84800" />
<text x="1065.8" y="182.7" font-size="12" fill="#fff" font-family="'Liberation Sans', sans-serif" >2.0</text>
<rect x="1050" y="184" width="10" height="11" fill="#b4b4b4" />
<text x="1065.8" y="193.7" font-size="12" fill="#fff" font-family="'Liberation Sans', sans-serif" >0.0</text>
<rect x="1050" y="195" width="10" height="11" fill="#005010" />
<text transform="translate(1066.3,204.7) scale(1.51,1)" font-size="12" fill="#fff" font-family="'Liberation Sans', sans-serif">-</text>
<text x="1072.81" y="204.7" font-size="12" fill="#fff" font-family="'Liberation Sans', sans-serif" >2.0</text>
<rect x="1050" y="206" width="10" height="11" fill="#007814" />
<text transform="translate(1066.3,215.7) scale(1.51,1)" font-size="12" fill="#fff" font-family="'Liberation Sans', sans-serif">-</text>
<text x="1072.81" y="215.7" font-size="12" fill="#fff" font-family="'Liberation Sans', sans-serif" >4.0</text>
<rect x="1050" y="217" width="10" height="11" fill="#00a014" />
<text transform="translate(1066.3,226.7) scale(1.51,1)" font-size="12" fill="#fff" font-family="'Liberation Sans', sans-serif">-</text>
<text x="1072.81" y="226.7" font-size="12" fill="#fff" font-family="'Liberation Sans', sans-serif" >6.0</text>
<rect x="1050" y="228" width="10" height="11" fill="#00f000" />
<text transform="translate(1066.3,237.7) scale(1.51,1)" font-size="12" fill="#fff" font-family="'Liberation Sans', sans-serif">-</text>
<text x="1072.81" y="237.7" font-size="12" fill="#fff" font-family="'Liberation Sans', sans-serif" >8.0</text>
<rect x="1050" y="239" width="10" height="11" fill="#00b4ff" />
<text transform="translate(1066.3,248.7) scale(1.51,1)" font-size="12" fill="#fff" font-family="'Liberation Sans', sans-serif">-</text>
<text x="1072.81" y="248.7" font-size="12" fill="#fff" font-family="'Liberation Sans', sans-serif" >10.0</text>
<rect x="1050" y="250" width="10" height="11" fill="#0078ff" />
<text transform="translate(1066.3,259.7) scale(1.51,1)" font-size="12" fill="#fff" font-family="'Liberation Sans', sans-serif">-</text>
<text x="1072.81" y="259.7" font-size="12" fill="#fff" font-family="'Liberation Sans', sans-serif" >12.0</text>
<rect x="1050" y="261" width="10" height="11" fill="#0000e6" />
<text transform="translate(1066.3,270.7) scale(1.51,1)" font-size="12" fill="#fff" font-family="'Liberation Sans', sans-serif">-</text>
<text x="1072.81" y="270.7" font-size="12" fill="#fff" font-family="'Liberation Sans', sans-serif" >14.0</text>
<rect x="1050" y="272" width="10" height="11" fill="#0000b4" />
<text transform="translate(1066.3,281.7) scale(1.51,1)" font-size="12" fill="#fff" font-family="'Liberation Sans', sans-serif">-</text>
<text x="1072.81" y="281.7" font-size="12" fill="#fff" font-family="'Liberation Sans', sans-serif" >16.0</text>
<rect x="1050" y="283" width="10" height="11" fill="#000082" />
<text transform="translate(1066.3,292.7) scale(1.51,1)" font-size="12" fill="#fff" font-family="'Liberation Sans', sans-serif">-</text>
<text x="1072.81" y="292.7" font-size="12" fill="#fff" font-family="'Liberation Sans', sans-serif" >18.0</text>
<rect x="1050" y="294" width="10" height="11" fill="#8c8cc8" />
<text transform="translate(1066.3,303.7) scale(1.51,1)" font-size="12" fill="#fff" font-family="'Liberation Sans', sans-serif">-</text>
<text x="1072.81" y="303.7" font-size="12" fill="#fff" font-family="'Liberation Sans', sans-serif" >20.0</text>
<rect x="1050" y="305" width="10" height="11" fill="#5a5a82" />
<text transform="translate(1066.3,314.7) scale(1.51,1)" font-size="12" fill="#fff" font-family="'Liberation Sans', sans-serif">-</text>
<text x="1072.81" y="314.7" font-size="12" fill="#fff" font-family="'Liberation Sans', sans-serif" >22.0</text>
<rect x="1050" y="316" width="10" height="11" fill="#787878" />
<text transform="translate(1066.3,325.7) scale(1.51,1)" font-size="12" fill="#fff" font-family="'Liberation Sans', sans-serif">-</text>
<text x="1072.81" y="325.7" font-size="12" fill="#fff" font-family="'Liberation Sans', sans-serif" >24.0</text>
<rect x="577" y="336" width="46" height="48" fill="#191970" />
<rect x="577.5" y="336.5" width="45" height="47" fill="none" stroke="#8c8c8c" stroke-width="1"/>
<g fill="none" stroke="#ffff00" stroke-linecap="round" stroke-linejoin="round" shape-rendering="auto">
<path d="M585.8,348.5 C588.1,343.8 593.6,342.2 598.2,344.5 C602.8,346.9 606.4,348.5 610.1,347.5 L613.6,345.4" stroke-width="2.1"/>
<path d="M613.6,345.4 C605.5,351.1 596.3,361.6 585.1,376.3" stroke-width="1.7"/>
<path d="M585.1,376.3 C589.0,372.5 593.6,372.0 598.2,374.2 C602.8,376.7 606.4,378.3 610.1,375.7 L614.5,371.5" stroke-width="2.1"/>
</g>
<rect x="624" y="336" width="46" height="48" fill="#191970" />
<rect x="624.5" y="336.5" width="45" height="47" fill="none" stroke="#8c8c8c" stroke-width="1"/>
<text x="647" y="344.8" font-size="7.5" fill="#ffff00" font-family="'Liberation Sans', sans-serif" textLength="25" lengthAdjust="spacingAndGlyphs" font-weight="bold" text-anchor="middle" >CROSS</text>
<text x="647" y="379.8" font-size="7.5" fill="#ffff00" font-family="'Liberation Sans', sans-serif" textLength="31" lengthAdjust="spacingAndGlyphs" font-weight="bold" text-anchor="middle" >SECTION</text>
<g fill="none" stroke="#ffff00" stroke-width="1">
<rect x="628.5" y="353.5" width="22" height="20"/>
<rect x="643.5" y="346.5" width="22" height="20"/>
<line x1="628.5" y1="353.5" x2="643.5" y2="346.5"/>
<line x1="650.5" y1="353.5" x2="665.5" y2="346.5"/>
<line x1="628.5" y1="373.5" x2="643.5" y2="366.5"/>
<line x1="650.5" y1="373.5" x2="665.5" y2="366.5"/>
</g>
<polygon points="637.0,350.0 658.0,348.0 658.0,371.0 637.0,373.0" fill="url(#stipY)" />
<rect x="671" y="336" width="46" height="48" fill="#696969" />
<rect x="671.5" y="336.5" width="45" height="47" fill="none" stroke="#8c8c8c" stroke-width="1"/>
<text x="694" y="344.8" font-size="7.5" fill="#e0e0e0" font-family="'Liberation Sans', sans-serif" textLength="25" lengthAdjust="spacingAndGlyphs" font-weight="bold" text-anchor="middle" >CROSS</text>
<text x="694" y="379.8" font-size="7.5" fill="#e0e0e0" font-family="'Liberation Sans', sans-serif" textLength="31" lengthAdjust="spacingAndGlyphs" font-weight="bold" text-anchor="middle" >SECTION</text>
<g fill="none" stroke="#e0e0e0" stroke-width="1">
<rect x="675.5" y="353.5" width="22" height="20"/>
<rect x="690.5" y="346.5" width="22" height="20"/>
<line x1="675.5" y1="353.5" x2="690.5" y2="346.5"/>
<line x1="697.5" y1="353.5" x2="712.5" y2="346.5"/>
<line x1="675.5" y1="373.5" x2="690.5" y2="366.5"/>
<line x1="697.5" y1="373.5" x2="712.5" y2="366.5"/>
</g>
<polygon points="684.0,350.0 705.0,348.0 705.0,371.0 684.0,373.0" fill="url(#stipG)" />
<rect x="718" y="336" width="46" height="48" fill="#696969" />
<rect x="718.5" y="336.5" width="45" height="47" fill="none" stroke="#8c8c8c" stroke-width="1"/>
<text x="741" y="344.8" font-size="7.5" fill="#e0e0e0" font-family="'Liberation Sans', sans-serif" textLength="25" lengthAdjust="spacingAndGlyphs" font-weight="bold" text-anchor="middle" >CROSS</text>
<text x="741" y="379.8" font-size="7.5" fill="#e0e0e0" font-family="'Liberation Sans', sans-serif" textLength="31" lengthAdjust="spacingAndGlyphs" font-weight="bold" text-anchor="middle" >SECTION</text>
<g fill="none" stroke="#e0e0e0" stroke-width="1">
<rect x="722.5" y="353.5" width="22" height="20"/>
<rect x="737.5" y="346.5" width="22" height="20"/>
<line x1="722.5" y1="353.5" x2="737.5" y2="346.5"/>
<line x1="744.5" y1="353.5" x2="759.5" y2="346.5"/>
<line x1="722.5" y1="373.5" x2="737.5" y2="366.5"/>
<line x1="744.5" y1="373.5" x2="759.5" y2="366.5"/>
</g>
<polygon points="731.0,350.0 752.0,348.0 752.0,371.0 731.0,373.0" fill="url(#stipG)" />
<line x1="571" y1="2.5" x2="1133" y2="2.5" stroke="#000" stroke-width="1" />
<line x1="571" y1="2.5" x2="1133" y2="2.5" stroke="#fff" stroke-width="1" stroke-dasharray="1 1"/>
<line x1="571.5" y1="2" x2="571.5" y2="387" stroke="#000" stroke-width="1" />
<line x1="571.5" y1="2" x2="571.5" y2="387" stroke="#fff" stroke-width="1" stroke-dasharray="1 1"/>
<line x1="1132.5" y1="2" x2="1132.5" y2="387" stroke="#000" stroke-width="1" />
<line x1="1132.5" y1="2" x2="1132.5" y2="387" stroke="#fff" stroke-width="1" stroke-dasharray="1 1"/>
<line x1="571" y1="386.5" x2="1133" y2="386.5" stroke="#000" stroke-width="1" />
<line x1="571" y1="386.5" x2="1133" y2="386.5" stroke="#fff" stroke-width="1" stroke-dasharray="1 1"/>
</g>
<rect x="4" y="427" width="570" height="445" fill="#000" />
<clipPath id="rclip"><rect x="55" y="458" width="432" height="337"/></clipPath>
<g clip-path="url(#rclip)">
<g stroke="#fff" stroke-width="1" fill="none" shape-rendering="crispEdges">
<circle cx="272.8" cy="630.5" r="27.4"/>
<circle cx="272.8" cy="630.5" r="54.8"/>
<circle cx="272.8" cy="630.5" r="82.2"/>
<circle cx="272.8" cy="630.5" r="109.6"/>
<circle cx="272.8" cy="630.5" r="137.0"/>
<circle cx="272.8" cy="630.5" r="164.4"/>
<circle cx="272.8" cy="630.5" r="191.8"/>
<circle cx="272.8" cy="630.5" r="219.2"/>
<line x1="253.4" y1="611.1" x2="117.9" y2="475.6"/>
<line x1="292.2" y1="649.9" x2="427.7" y2="785.4"/>
<line x1="253.4" y1="649.9" x2="117.9" y2="785.4"/>
<line x1="292.2" y1="611.1" x2="427.7" y2="475.6"/>
</g>
<line x1="55" y1="630.5" x2="245.4" y2="630.5" stroke="#fff" stroke-width="1" />
<line x1="300.2" y1="630.5" x2="487" y2="630.5" stroke="#fff" stroke-width="1" />
<line x1="273.5" y1="458" x2="273.5" y2="603.1" stroke="#fff" stroke-width="1" />
<line x1="273.5" y1="657.9" x2="273.5" y2="795" stroke="#fff" stroke-width="1" />
<rect x="165" y="499" width="3" height="3" fill="#00704a" />
<rect x="165" y="502" width="3" height="3" fill="#00704a" />
<rect x="165" y="505" width="3" height="3" fill="#00704a" />
<rect x="168" y="499" width="3" height="3" fill="#00704a" />
<rect x="168" y="502" width="3" height="3" fill="#00704a" />
<rect x="168" y="505" width="3" height="3" fill="#00704a" />
<rect x="171" y="499" width="3" height="3" fill="#00704a" />
<rect x="171" y="502" width="3" height="3" fill="#00704a" />
<rect x="171" y="505" width="3" height="3" fill="#00704a" />
<rect x="222" y="521" width="11" height="11" fill="#00704a" />
<rect x="229" y="521" width="4" height="9" fill="#0a8c5a" />
<rect x="227" y="538" width="11" height="11" fill="#c8c8c8" />
<rect x="229" y="540" width="8" height="8" fill="#d89030" />
<rect x="231" y="541" width="5" height="5" fill="#eeb422" />
<rect x="161" y="543" width="3" height="3" fill="#00704a" />
<rect x="161" y="546" width="3" height="3" fill="#00704a" />
<rect x="161" y="549" width="3" height="3" fill="#00704a" />
<rect x="164" y="543" width="3" height="3" fill="#00704a" />
<rect x="164" y="546" width="3" height="3" fill="#00704a" />
<rect x="164" y="549" width="3" height="3" fill="#00704a" />
<rect x="164" y="552" width="3" height="3" fill="#00704a" />
<rect x="167" y="543" width="3" height="3" fill="#00704a" />
<rect x="167" y="546" width="3" height="3" fill="#00704a" />
<rect x="167" y="549" width="3" height="3" fill="#00704a" />
<rect x="167" y="552" width="3" height="3" fill="#00704a" />
<rect x="170" y="546" width="3" height="3" fill="#00704a" />
<rect x="170" y="549" width="3" height="3" fill="#00704a" />
<rect x="161" y="546" width="3" height="4" fill="#c8c8c8" />
<rect x="165" y="560" width="3" height="3" fill="#00704a" />
<rect x="165" y="563" width="3" height="3" fill="#00704a" />
<rect x="168" y="557" width="3" height="3" fill="#00704a" />
<rect x="168" y="560" width="3" height="3" fill="#00704a" />
<rect x="168" y="563" width="3" height="3" fill="#00704a" />
<rect x="171" y="557" width="3" height="3" fill="#00704a" />
<rect x="171" y="560" width="3" height="3" fill="#00704a" />
<rect x="171" y="563" width="3" height="3" fill="#00704a" />
<rect x="174" y="557" width="3" height="3" fill="#00704a" />
<rect x="174" y="560" width="3" height="3" fill="#00704a" />
<rect x="174" y="563" width="3" height="3" fill="#00704a" />
<rect x="177" y="557" width="3" height="3" fill="#00704a" />
<rect x="177" y="560" width="3" height="3" fill="#00704a" />
<rect x="172" y="552" width="11" height="10" fill="#00704a" />
<rect x="176" y="556" width="10" height="10" fill="#00e896" />
<rect x="180" y="560" width="10" height="10" fill="#00704a" />
<rect x="183" y="560" width="5" height="5" fill="#c8c8c8" />
<rect x="188" y="544" width="3" height="3" fill="#00e896" />
<rect x="191" y="541" width="3" height="3" fill="#00704a" />
<rect x="191" y="544" width="3" height="3" fill="#00704a" />
<rect x="191" y="547" width="3" height="3" fill="#00704a" />
<rect x="191" y="550" width="3" height="3" fill="#00704a" />
<rect x="191" y="553" width="3" height="3" fill="#00704a" />
<rect x="194" y="538" width="3" height="3" fill="#00704a" />
<rect x="194" y="541" width="3" height="3" fill="#c8c8c8" />
<rect x="194" y="544" width="3" height="3" fill="#c8c8c8" />
<rect x="194" y="547" width="3" height="3" fill="#c8c8c8" />
<rect x="194" y="550" width="3" height="3" fill="#c8c8c8" />
<rect x="194" y="553" width="3" height="3" fill="#00704a" />
<rect x="194" y="556" width="3" height="3" fill="#00704a" />
<rect x="194" y="559" width="3" height="3" fill="#00e896" />
<rect x="197" y="538" width="3" height="3" fill="#00704a" />
<rect x="197" y="541" width="3" height="3" fill="#c8c8c8" />
<rect x="197" y="544" width="3" height="3" fill="#c8c8c8" />
<rect x="197" y="547" width="3" height="3" fill="#c8c8c8" />
<rect x="197" y="550" width="3" height="3" fill="#c8c8c8" />
<rect x="197" y="553" width="3" height="3" fill="#c8c8c8" />
<rect x="197" y="556" width="3" height="3" fill="#00704a" />
<rect x="197" y="559" width="3" height="3" fill="#00e896" />
<rect x="200" y="538" width="3" height="3" fill="#00704a" />
<rect x="200" y="541" width="3" height="3" fill="#00704a" />
<rect x="200" y="544" width="3" height="3" fill="#c8c8c8" />
<rect x="200" y="547" width="3" height="3" fill="#c8c8c8" />
<rect x="200" y="550" width="3" height="3" fill="#c8c8c8" />
<rect x="200" y="553" width="3" height="3" fill="#00704a" />
<rect x="200" y="556" width="3" height="3" fill="#00704a" />
<rect x="200" y="559" width="3" height="3" fill="#00e896" />
<rect x="203" y="544" width="3" height="3" fill="#00704a" />
<rect x="203" y="547" width="3" height="3" fill="#00704a" />
<rect x="203" y="550" width="3" height="3" fill="#00704a" />
<rect x="203" y="553" width="3" height="3" fill="#00704a" />
<rect x="191" y="538" width="6" height="7" fill="#00e896" />
<rect x="234" y="557" width="9" height="9" fill="#00704a" />
<rect x="238" y="560" width="8" height="8" fill="#00e896" />
<rect x="235" y="566" width="6" height="8" fill="#00e896" />
<rect x="240" y="562" width="4" height="4" fill="#00b2e2" />
<rect x="188" y="519" width="5" height="3" fill="#00e896" />
<rect x="277" y="478" width="3" height="3" fill="#00704a" />
<rect x="277" y="481" width="3" height="3" fill="#00704a" />
<rect x="280" y="475" width="3" height="3" fill="#00704a" />
<rect x="280" y="478" width="3" height="3" fill="#00704a" />
<rect x="280" y="481" width="3" height="3" fill="#00704a" />
<rect x="283" y="475" width="3" height="3" fill="#00704a" />
<rect x="283" y="478" width="3" height="3" fill="#00704a" />
<rect x="283" y="481" width="3" height="3" fill="#00704a" />
<rect x="286" y="478" width="3" height="3" fill="#00704a" />
<rect x="286" y="481" width="3" height="3" fill="#00704a" />
<rect x="313" y="473" width="12" height="14" fill="#00704a" />
<rect x="319" y="473" width="10" height="9" fill="#00704a" />
<rect x="316" y="472" width="6" height="2" fill="#0a8c5a" />
<rect x="291" y="491" width="3" height="3" fill="#00e896" />
<rect x="294" y="488" width="3" height="3" fill="#00e896" />
<rect x="294" y="491" width="3" height="3" fill="#00704a" />
<rect x="294" y="494" width="3" height="3" fill="#00704a" />
<rect x="297" y="488" width="3" height="3" fill="#00704a" />
<rect x="297" y="491" width="3" height="3" fill="#c8c8c8" />
<rect x="297" y="494" width="3" height="3" fill="#c8c8c8" />
<rect x="297" y="497" width="3" height="3" fill="#00704a" />
<rect x="300" y="485" width="3" height="3" fill="#00e896" />
<rect x="300" y="488" width="3" height="3" fill="#00704a" />
<rect x="300" y="491" width="3" height="3" fill="#c8c8c8" />
<rect x="300" y="494" width="3" height="3" fill="#c8c8c8" />
<rect x="300" y="497" width="3" height="3" fill="#00704a" />
<rect x="300" y="500" width="3" height="3" fill="#00e896" />
<rect x="303" y="488" width="3" height="3" fill="#00704a" />
<rect x="303" y="491" width="3" height="3" fill="#c8c8c8" />
<rect x="303" y="494" width="3" height="3" fill="#c8c8c8" />
<rect x="303" y="497" width="3" height="3" fill="#00704a" />
<rect x="306" y="488" width="3" height="3" fill="#00704a" />
<rect x="306" y="491" width="3" height="3" fill="#c8c8c8" />
<rect x="306" y="494" width="3" height="3" fill="#c8c8c8" />
<rect x="306" y="497" width="3" height="3" fill="#00704a" />
<rect x="306" y="500" width="3" height="3" fill="#00e896" />
<rect x="309" y="491" width="3" height="3" fill="#00704a" />
<rect x="309" y="494" width="3" height="3" fill="#00704a" />
<rect x="312" y="497" width="3" height="3" fill="#00e896" />
<rect x="299" y="488" width="10" height="9" fill="#c8c8c8" />
<rect x="307" y="501" width="3" height="3" fill="#00e896" />
<rect x="307" y="504" width="3" height="3" fill="#00e896" />
<rect x="310" y="501" width="3" height="3" fill="#00704a" />
<rect x="310" y="504" width="3" height="3" fill="#00704a" />
<rect x="310" y="507" width="3" height="3" fill="#00e896" />
<rect x="313" y="495" width="3" height="3" fill="#00e896" />
<rect x="313" y="498" width="3" height="3" fill="#00704a" />
<rect x="313" y="501" width="3" height="3" fill="#c8c8c8" />
<rect x="313" y="504" width="3" height="3" fill="#00704a" />
<rect x="313" y="507" width="3" height="3" fill="#00704a" />
<rect x="316" y="495" width="3" height="3" fill="#00e896" />
<rect x="316" y="498" width="3" height="3" fill="#00704a" />
<rect x="316" y="501" width="3" height="3" fill="#c8c8c8" />
<rect x="316" y="504" width="3" height="3" fill="#c8c8c8" />
<rect x="316" y="507" width="3" height="3" fill="#00704a" />
<rect x="316" y="510" width="3" height="3" fill="#00e896" />
<rect x="319" y="498" width="3" height="3" fill="#00704a" />
<rect x="319" y="501" width="3" height="3" fill="#c8c8c8" />
<rect x="319" y="504" width="3" height="3" fill="#c8c8c8" />
<rect x="319" y="507" width="3" height="3" fill="#00704a" />
<rect x="322" y="498" width="3" height="3" fill="#00704a" />
<rect x="322" y="501" width="3" height="3" fill="#c8c8c8" />
<rect x="322" y="504" width="3" height="3" fill="#c8c8c8" />
<rect x="322" y="507" width="3" height="3" fill="#00704a" />
<rect x="322" y="510" width="3" height="3" fill="#00e896" />
<rect x="325" y="498" width="3" height="3" fill="#00704a" />
<rect x="325" y="501" width="3" height="3" fill="#c8c8c8" />
<rect x="325" y="504" width="3" height="3" fill="#c8c8c8" />
<rect x="325" y="507" width="3" height="3" fill="#00704a" />
<rect x="328" y="501" width="3" height="3" fill="#00704a" />
<rect x="328" y="504" width="3" height="3" fill="#00704a" />
<rect x="328" y="507" width="3" height="3" fill="#00e896" />
<rect x="331" y="504" width="3" height="3" fill="#00e896" />
<rect x="313" y="499" width="8" height="8" fill="#c8c8c8" />
<rect x="349" y="502" width="3" height="3" fill="#00e896" />
<rect x="349" y="505" width="3" height="3" fill="#00e896" />
<rect x="349" y="511" width="3" height="3" fill="#00e896" />
<rect x="352" y="499" width="3" height="3" fill="#00e896" />
<rect x="352" y="502" width="3" height="3" fill="#00e896" />
<rect x="352" y="505" width="3" height="3" fill="#00704a" />
<rect x="352" y="508" width="3" height="3" fill="#00704a" />
<rect x="352" y="511" width="3" height="3" fill="#00704a" />
<rect x="355" y="499" width="3" height="3" fill="#00704a" />
<rect x="355" y="502" width="3" height="3" fill="#00704a" />
<rect x="355" y="505" width="3" height="3" fill="#00704a" />
<rect x="355" y="508" width="3" height="3" fill="#00704a" />
<rect x="355" y="511" width="3" height="3" fill="#00704a" />
<rect x="355" y="514" width="3" height="3" fill="#00704a" />
<rect x="358" y="496" width="3" height="3" fill="#00e896" />
<rect x="358" y="499" width="3" height="3" fill="#00704a" />
<rect x="358" y="502" width="3" height="3" fill="#00704a" />
<rect x="358" y="505" width="3" height="3" fill="#00704a" />
<rect x="358" y="508" width="3" height="3" fill="#00704a" />
<rect x="358" y="511" width="3" height="3" fill="#00704a" />
<rect x="358" y="514" width="3" height="3" fill="#00704a" />
<rect x="358" y="517" width="3" height="3" fill="#00e896" />
<rect x="361" y="496" width="3" height="3" fill="#00e896" />
<rect x="361" y="499" width="3" height="3" fill="#00704a" />
<rect x="361" y="502" width="3" height="3" fill="#00704a" />
<rect x="361" y="505" width="3" height="3" fill="#00704a" />
<rect x="361" y="508" width="3" height="3" fill="#00704a" />
<rect x="361" y="511" width="3" height="3" fill="#00704a" />
<rect x="361" y="514" width="3" height="3" fill="#00704a" />
<rect x="361" y="517" width="3" height="3" fill="#00e896" />
<rect x="364" y="499" width="3" height="3" fill="#00704a" />
<rect x="364" y="502" width="3" height="3" fill="#00704a" />
<rect x="364" y="505" width="3" height="3" fill="#00704a" />
<rect x="364" y="508" width="3" height="3" fill="#00704a" />
<rect x="364" y="511" width="3" height="3" fill="#00704a" />
<rect x="364" y="514" width="3" height="3" fill="#00704a" />
<rect x="367" y="499" width="3" height="3" fill="#00704a" />
<rect x="367" y="502" width="3" height="3" fill="#00704a" />
<rect x="367" y="505" width="3" height="3" fill="#00704a" />
<rect x="367" y="508" width="3" height="3" fill="#00704a" />
<rect x="367" y="511" width="3" height="3" fill="#00704a" />
<rect x="367" y="514" width="3" height="3" fill="#00704a" />
<rect x="370" y="499" width="3" height="3" fill="#00704a" />
<rect x="370" y="502" width="3" height="3" fill="#00704a" />
<rect x="370" y="505" width="3" height="3" fill="#00704a" />
<rect x="370" y="508" width="3" height="3" fill="#00704a" />
<rect x="370" y="511" width="3" height="3" fill="#00704a" />
<rect x="370" y="514" width="3" height="3" fill="#00704a" />
<rect x="370" y="517" width="3" height="3" fill="#00e896" />
<rect x="373" y="502" width="3" height="3" fill="#00704a" />
<rect x="373" y="505" width="3" height="3" fill="#00704a" />
<rect x="373" y="508" width="3" height="3" fill="#00704a" />
<rect x="373" y="511" width="3" height="3" fill="#00704a" />
<rect x="373" y="514" width="3" height="3" fill="#00704a" />
<rect x="376" y="502" width="3" height="3" fill="#00704a" />
<rect x="376" y="505" width="3" height="3" fill="#00704a" />
<rect x="376" y="508" width="3" height="3" fill="#00704a" />
<rect x="376" y="511" width="3" height="3" fill="#00704a" />
<rect x="376" y="514" width="3" height="3" fill="#00e896" />
<rect x="379" y="511" width="3" height="3" fill="#00e896" />
<rect x="355" y="527" width="11" height="8" fill="#00704a" />
<rect x="382" y="521" width="14" height="16" fill="#c8c8c8" />
<rect x="385" y="524" width="8" height="8" fill="#d89030" />
<rect x="380" y="535" width="11" height="6" fill="#00e896" />
<rect x="384" y="534" width="8" height="4" fill="#c8c8c8" />
<rect x="388" y="550" width="3" height="3" fill="#00e896" />
<rect x="391" y="541" width="3" height="3" fill="#00e896" />
<rect x="391" y="544" width="3" height="3" fill="#00704a" />
<rect x="391" y="547" width="3" height="3" fill="#00704a" />
<rect x="391" y="550" width="3" height="3" fill="#00704a" />
<rect x="394" y="541" width="3" height="3" fill="#00704a" />
<rect x="394" y="544" width="3" height="3" fill="#00704a" />
<rect x="394" y="547" width="3" height="3" fill="#00704a" />
<rect x="394" y="550" width="3" height="3" fill="#00704a" />
<rect x="394" y="553" width="3" height="3" fill="#00704a" />
<rect x="394" y="556" width="3" height="3" fill="#00e896" />
<rect x="397" y="538" width="3" height="3" fill="#00e896" />
<rect x="397" y="541" width="3" height="3" fill="#00704a" />
<rect x="397" y="544" width="3" height="3" fill="#00704a" />
<rect x="397" y="547" width="3" height="3" fill="#00704a" />
<rect x="397" y="550" width="3" height="3" fill="#00704a" />
<rect x="397" y="553" width="3" height="3" fill="#00704a" />
<rect x="400" y="541" width="3" height="3" fill="#00704a" />
<rect x="400" y="544" width="3" height="3" fill="#00704a" />
<rect x="400" y="547" width="3" height="3" fill="#00704a" />
<rect x="400" y="550" width="3" height="3" fill="#00704a" />
<rect x="400" y="553" width="3" height="3" fill="#00704a" />
<rect x="400" y="556" width="3" height="3" fill="#00e896" />
<rect x="403" y="541" width="3" height="3" fill="#00704a" />
<rect x="403" y="544" width="3" height="3" fill="#00704a" />
<rect x="403" y="547" width="3" height="3" fill="#00704a" />
<rect x="403" y="550" width="3" height="3" fill="#00704a" />
<rect x="403" y="553" width="3" height="3" fill="#00704a" />
<rect x="406" y="544" width="3" height="3" fill="#00704a" />
<rect x="406" y="547" width="3" height="3" fill="#00704a" />
<rect x="406" y="550" width="3" height="3" fill="#00704a" />
<rect x="406" y="553" width="3" height="3" fill="#00e896" />
<rect x="409" y="550" width="3" height="3" fill="#00e896" />
<rect x="388" y="557" width="8" height="8" fill="#00704a" />
<rect x="413" y="563" width="6" height="8" fill="#00704a" />
<rect x="418" y="568" width="3" height="3" fill="#00e896" />
<rect x="308" y="543" width="5" height="6" fill="#00e896" />
<rect x="333" y="554" width="16" height="8" fill="#00704a" />
<rect x="338" y="556" width="5" height="2" fill="#00e896" />
<rect x="346" y="556" width="3" height="6" fill="#00e896" />
<rect x="319" y="560" width="9" height="7" fill="#c8c8c8" />
<rect x="326" y="562" width="3" height="4" fill="#00e896" />
<rect x="349" y="569" width="3" height="3" fill="#00e896" />
<rect x="352" y="560" width="3" height="3" fill="#00e896" />
<rect x="352" y="563" width="3" height="3" fill="#00704a" />
<rect x="352" y="566" width="3" height="3" fill="#00704a" />
<rect x="352" y="569" width="3" height="3" fill="#00704a" />
<rect x="355" y="560" width="3" height="3" fill="#00704a" />
<rect x="355" y="563" width="3" height="3" fill="#00704a" />
<rect x="355" y="566" width="3" height="3" fill="#c8c8c8" />
<rect x="355" y="569" width="3" height="3" fill="#00704a" />
<rect x="355" y="572" width="3" height="3" fill="#00704a" />
<rect x="358" y="557" width="3" height="3" fill="#00e896" />
<rect x="358" y="560" width="3" height="3" fill="#00704a" />
<rect x="358" y="563" width="3" height="3" fill="#c8c8c8" />
<rect x="358" y="566" width="3" height="3" fill="#c8c8c8" />
<rect x="358" y="569" width="3" height="3" fill="#00704a" />
<rect x="358" y="572" width="3" height="3" fill="#00704a" />
<rect x="358" y="575" width="3" height="3" fill="#00e896" />
<rect x="361" y="557" width="3" height="3" fill="#00e896" />
<rect x="361" y="560" width="3" height="3" fill="#00704a" />
<rect x="361" y="563" width="3" height="3" fill="#c8c8c8" />
<rect x="361" y="566" width="3" height="3" fill="#c8c8c8" />
<rect x="361" y="569" width="3" height="3" fill="#c8c8c8" />
<rect x="361" y="572" width="3" height="3" fill="#00704a" />
<rect x="361" y="575" width="3" height="3" fill="#00e896" />
<rect x="364" y="560" width="3" height="3" fill="#00704a" />
<rect x="364" y="563" width="3" height="3" fill="#c8c8c8" />
<rect x="364" y="566" width="3" height="3" fill="#c8c8c8" />
<rect x="364" y="569" width="3" height="3" fill="#c8c8c8" />
<rect x="364" y="572" width="3" height="3" fill="#00704a" />
<rect x="367" y="560" width="3" height="3" fill="#00704a" />
<rect x="367" y="563" width="3" height="3" fill="#00704a" />
<rect x="367" y="566" width="3" height="3" fill="#c8c8c8" />
<rect x="367" y="569" width="3" height="3" fill="#c8c8c8" />
<rect x="367" y="572" width="3" height="3" fill="#00704a" />
<rect x="367" y="575" width="3" height="3" fill="#00e896" />
<rect x="370" y="560" width="3" height="3" fill="#00704a" />
<rect x="370" y="563" width="3" height="3" fill="#00704a" />
<rect x="370" y="566" width="3" height="3" fill="#00704a" />
<rect x="370" y="569" width="3" height="3" fill="#00704a" />
<rect x="370" y="572" width="3" height="3" fill="#00704a" />
<rect x="373" y="563" width="3" height="3" fill="#00704a" />
<rect x="373" y="566" width="3" height="3" fill="#00704a" />
<rect x="376" y="569" width="3" height="3" fill="#00e896" />
<rect x="355" y="563" width="14" height="8" fill="#c8c8c8" />
<rect x="407" y="601" width="13" height="17" fill="#00704a" />
<rect x="408" y="604" width="10" height="11" fill="#c8c8c8" />
<rect x="418" y="597" width="11" height="7" fill="#00704a" />
<rect x="391" y="612" width="15" height="7" fill="#00704a" />
<rect x="392" y="611" width="4" height="3" fill="#00e896" />
<rect x="341" y="610" width="3" height="3" fill="#00e896" />
<rect x="344" y="607" width="3" height="3" fill="#00704a" />
<rect x="344" y="610" width="3" height="3" fill="#00704a" />
<rect x="344" y="613" width="3" height="3" fill="#00e896" />
<rect x="347" y="604" width="3" height="3" fill="#00704a" />
<rect x="347" y="607" width="3" height="3" fill="#c8c8c8" />
<rect x="347" y="610" width="3" height="3" fill="#c8c8c8" />
<rect x="347" y="613" width="3" height="3" fill="#00704a" />
<rect x="350" y="604" width="3" height="3" fill="#00704a" />
<rect x="350" y="607" width="3" height="3" fill="#c8c8c8" />
<rect x="350" y="610" width="3" height="3" fill="#c8c8c8" />
<rect x="350" y="613" width="3" height="3" fill="#00704a" />
<rect x="353" y="604" width="3" height="3" fill="#00704a" />
<rect x="353" y="607" width="3" height="3" fill="#c8c8c8" />
<rect x="353" y="610" width="3" height="3" fill="#c8c8c8" />
<rect x="353" y="613" width="3" height="3" fill="#00704a" />
<rect x="356" y="607" width="3" height="3" fill="#00704a" />
<rect x="356" y="610" width="3" height="3" fill="#00704a" />
<rect x="351" y="607" width="6" height="8" fill="#c8c8c8" />
<rect x="330" y="600" width="6" height="6" fill="#c8c8c8" />
<rect x="332" y="608" width="6" height="4" fill="#c8c8c8" />
<rect x="336" y="598" width="5" height="8" fill="#00b2e2" />
<rect x="337" y="612" width="4" height="6" fill="#00b2e2" />
<rect x="187" y="684" width="8" height="8" fill="#00704a" />
<rect x="190" y="683" width="4" height="3" fill="#00e896" />
<rect x="187" y="691" width="10" height="4" fill="#00e896" />
<rect x="167" y="706" width="19" height="12" fill="#00e896" />
<rect x="170" y="704" width="14" height="18" fill="#c8c8c8" />
<rect x="172" y="707" width="11" height="10" fill="#d89030" />
<rect x="176" y="716" width="12" height="6" fill="#c8c8c8" />
<rect x="175" y="703" width="8" height="3" fill="#00e896" />
<rect x="191" y="722" width="11" height="15" fill="#00704a" />
<rect x="192" y="722" width="8" height="3" fill="#00e896" />
<rect x="191" y="733" width="17" height="11" fill="#c8c8c8" />
<rect x="198" y="733" width="4" height="3" fill="#000" />
<rect x="180" y="740" width="9" height="7" fill="#00e896" />
<rect x="186" y="744" width="10" height="3" fill="#00704a" />
<rect x="205" y="737" width="6" height="7" fill="#00704a" />
<rect x="248" y="722" width="14" height="16" fill="#00e896" />
<rect x="249" y="723" width="12" height="10" fill="#d89030" />
<rect x="252" y="724" width="7" height="7" fill="#eeb422" />
<rect x="250" y="732" width="10" height="4" fill="#c8c8c8" />
<rect x="260" y="722" width="9" height="8" fill="#00704a" />
<rect x="265" y="723" width="4" height="6" fill="#00e896" />
<rect x="247" y="774" width="16" height="20" fill="#00704a" />
<rect x="250" y="774" width="13" height="4" fill="#00e896" />
<rect x="244" y="782" width="6" height="12" fill="#00704a" />
<rect x="245" y="788" width="5" height="6" fill="#c8c8c8" />
<rect x="213" y="672" width="10" height="13" fill="#00704a" />
<rect x="217" y="672" width="6" height="5" fill="#00e896" />
<rect x="213" y="680" width="6" height="5" fill="#c8c8c8" />
<rect x="203" y="646" width="4" height="4" fill="#00e896" />
<rect x="206" y="648" width="4" height="4" fill="#00b2e2" />
<rect x="210" y="650" width="4" height="4" fill="#00e896" />
<rect x="213" y="652" width="4" height="4" fill="#c8c8c8" />
<rect x="228" y="643" width="4" height="4" fill="#00704a" />
<rect x="230" y="647" width="4" height="4" fill="#00e896" />
<rect x="232" y="648" width="4" height="4" fill="#c8c8c8" />
<rect x="238" y="652" width="4" height="4" fill="#00e896" />
<rect x="243" y="654" width="4" height="4" fill="#00b2e2" />
<rect x="238" y="668" width="4" height="4" fill="#00b2e2" />
<rect x="242" y="670" width="4" height="4" fill="#00e896" />
<rect x="248" y="666" width="4" height="4" fill="#00b2e2" />
<rect x="250" y="662" width="4" height="4" fill="#00b2e2" />
<rect x="228" y="672" width="4" height="4" fill="#00b2e2" />
<rect x="262" y="692" width="4" height="4" fill="#00b2e2" />
<rect x="266" y="694" width="4" height="4" fill="#00b2e2" />
<rect x="232" y="697" width="4" height="4" fill="#00b2e2" />
<rect x="272" y="672" width="4" height="4" fill="#00e896" />
<rect x="278" y="680" width="4" height="4" fill="#00b2e2" />
<rect x="275" y="686" width="4" height="4" fill="#00e896" />
<rect x="217" y="622" width="4" height="4" fill="#00e896" />
<rect x="277" y="719" width="8" height="9" fill="#00704a" />
<rect x="280" y="719" width="5" height="6" fill="#c8c8c8" />
<rect x="294" y="741" width="8" height="9" fill="#00e896" />
<rect x="294" y="755" width="3" height="3" fill="#00e896" />
<rect x="316" y="758" width="3" height="3" fill="#00e896" />
<rect x="310" y="766" width="14" height="14" fill="#00704a" />
<rect x="310" y="769" width="14" height="8" fill="#c8c8c8" />
<rect x="338" y="777" width="6" height="3" fill="#00704a" />
<rect x="355" y="689" width="5" height="6" fill="#00e896" />
<rect x="314" y="687" width="6" height="7" fill="#00e896" />
<rect x="319" y="695" width="6" height="8" fill="#00e896" />
<rect x="321" y="696" width="3" height="4" fill="#00704a" />
<rect x="287" y="687" width="9" height="7" fill="#00e896" />
<rect x="290" y="688" width="5" height="5" fill="#00b2e2" />
<rect x="279" y="695" width="7" height="5" fill="#00e896" />
<rect x="281" y="696" width="4" height="3" fill="#00704a" />
<rect x="272" y="686" width="5" height="4" fill="#00e896" />
<rect x="202" y="605" width="3" height="3" fill="#00b2e2" />
<rect x="202" y="611" width="3" height="3" fill="#00e896" />
<rect x="205" y="605" width="3" height="3" fill="#00e896" />
<rect x="205" y="608" width="3" height="3" fill="#c8c8c8" />
<rect x="205" y="611" width="3" height="3" fill="#00e896" />
<rect x="208" y="605" width="3" height="3" fill="#00e896" />
<rect x="208" y="608" width="3" height="3" fill="#d89030" />
<rect x="208" y="611" width="3" height="3" fill="#c8c8c8" />
<rect x="208" y="614" width="3" height="3" fill="#00e896" />
<rect x="211" y="605" width="3" height="3" fill="#00e896" />
<rect x="211" y="608" width="3" height="3" fill="#d89030" />
<rect x="211" y="611" width="3" height="3" fill="#c8c8c8" />
<rect x="211" y="614" width="3" height="3" fill="#00e896" />
<rect x="214" y="605" width="3" height="3" fill="#00e896" />
<rect x="214" y="608" width="3" height="3" fill="#c8c8c8" />
<rect x="214" y="611" width="3" height="3" fill="#00e896" />
<rect x="217" y="605" width="3" height="3" fill="#00e896" />
<rect x="217" y="608" width="3" height="3" fill="#00e896" />
<rect x="220" y="608" width="3" height="3" fill="#00e896" />
<rect x="220" y="611" width="3" height="3" fill="#00e896" />
<rect x="220" y="614" width="3" height="3" fill="#00b2e2" />
<rect x="217" y="616" width="3" height="3" fill="#00704a" />
<rect x="217" y="619" width="3" height="3" fill="#00e896" />
<rect x="220" y="616" width="3" height="3" fill="#00e896" />
<rect x="227" y="594" width="3" height="3" fill="#00e896" />
<rect x="227" y="597" width="3" height="3" fill="#c8c8c8" />
<rect x="227" y="600" width="3" height="3" fill="#d89030" />
<rect x="227" y="603" width="3" height="3" fill="#c8c8c8" />
<rect x="230" y="591" width="3" height="3" fill="#c8c8c8" />
<rect x="230" y="597" width="3" height="3" fill="#d89030" />
<rect x="230" y="600" width="3" height="3" fill="#d89030" />
<rect x="230" y="603" width="3" height="3" fill="#d89030" />
<rect x="230" y="606" width="3" height="3" fill="#00e896" />
<rect x="233" y="594" width="3" height="3" fill="#c8c8c8" />
<rect x="233" y="597" width="3" height="3" fill="#c8c8c8" />
<rect x="233" y="600" width="3" height="3" fill="#00e896" />
<rect x="233" y="603" width="3" height="3" fill="#c8c8c8" />
<rect x="240" y="593" width="3" height="3" fill="#00704a" />
<rect x="240" y="596" width="3" height="3" fill="#00b2e2" />
<rect x="243" y="590" width="3" height="3" fill="#00704a" />
<rect x="243" y="593" width="3" height="3" fill="#00704a" />
<rect x="243" y="596" width="3" height="3" fill="#00e896" />
<rect x="246" y="590" width="3" height="3" fill="#00e896" />
<rect x="246" y="593" width="3" height="3" fill="#d89030" />
<rect x="246" y="596" width="3" height="3" fill="#00e896" />
<rect x="249" y="590" width="3" height="3" fill="#00b2e2" />
<rect x="249" y="593" width="3" height="3" fill="#00e896" />
<rect x="249" y="596" width="3" height="3" fill="#00b2e2" />
<rect x="258" y="589" width="3" height="3" fill="#00e896" />
<rect x="258" y="592" width="3" height="3" fill="#00704a" />
<rect x="258" y="595" width="3" height="3" fill="#c8c8c8" />
<rect x="258" y="598" width="3" height="3" fill="#00704a" />
<rect x="261" y="589" width="3" height="3" fill="#00704a" />
<rect x="261" y="592" width="3" height="3" fill="#d89030" />
<rect x="261" y="595" width="3" height="3" fill="#d89030" />
<rect x="261" y="598" width="3" height="3" fill="#d89030" />
<rect x="261" y="601" width="3" height="3" fill="#00704a" />
<rect x="264" y="589" width="3" height="3" fill="#c8c8c8" />
<rect x="264" y="592" width="3" height="3" fill="#d89030" />
<rect x="264" y="595" width="3" height="3" fill="#eeb422" />
<rect x="264" y="598" width="3" height="3" fill="#c8c8c8" />
<rect x="264" y="601" width="3" height="3" fill="#c8c8c8" />
<rect x="267" y="589" width="3" height="3" fill="#c8c8c8" />
<rect x="267" y="592" width="3" height="3" fill="#d89030" />
<rect x="267" y="595" width="3" height="3" fill="#eeb422" />
<rect x="267" y="598" width="3" height="3" fill="#d89030" />
<rect x="267" y="601" width="3" height="3" fill="#c8c8c8" />
<rect x="270" y="589" width="3" height="3" fill="#00704a" />
<rect x="270" y="592" width="3" height="3" fill="#d89030" />
<rect x="270" y="595" width="3" height="3" fill="#d89030" />
<rect x="270" y="598" width="3" height="3" fill="#d89030" />
<rect x="270" y="601" width="3" height="3" fill="#00704a" />
<rect x="273" y="592" width="3" height="3" fill="#00704a" />
<rect x="273" y="598" width="3" height="3" fill="#00704a" />
<rect x="275" y="590" width="3" height="3" fill="#00e896" />
<rect x="275" y="596" width="3" height="3" fill="#00e896" />
<rect x="278" y="590" width="3" height="3" fill="#d89030" />
<rect x="278" y="593" width="3" height="3" fill="#d89030" />
<rect x="278" y="596" width="3" height="3" fill="#d89030" />
<rect x="281" y="587" width="3" height="3" fill="#00e896" />
<rect x="281" y="593" width="3" height="3" fill="#d89030" />
<rect x="281" y="596" width="3" height="3" fill="#d89030" />
<rect x="281" y="599" width="3" height="3" fill="#00e896" />
<rect x="284" y="587" width="3" height="3" fill="#00b2e2" />
<rect x="284" y="590" width="3" height="3" fill="#00e896" />
<rect x="284" y="593" width="3" height="3" fill="#00e896" />
<rect x="284" y="596" width="3" height="3" fill="#00e896" />
<rect x="278" y="603" width="3" height="3" fill="#00b2e2" />
<rect x="281" y="603" width="3" height="3" fill="#eeb422" />
<rect x="281" y="606" width="3" height="3" fill="#eeb422" />
<rect x="284" y="603" width="3" height="3" fill="#eeb422" />
<rect x="284" y="606" width="3" height="3" fill="#eeb422" />
<rect x="287" y="603" width="3" height="3" fill="#eeb422" />
<rect x="287" y="606" width="3" height="3" fill="#eeb422" />
<rect x="290" y="606" width="3" height="3" fill="#00b2e2" />
<rect x="283" y="574" width="3" height="3" fill="#00e896" />
<rect x="283" y="577" width="3" height="3" fill="#00e896" />
<rect x="283" y="580" width="3" height="3" fill="#00e896" />
<rect x="283" y="583" width="3" height="3" fill="#00e896" />
<rect x="286" y="574" width="3" height="3" fill="#00e896" />
<rect x="286" y="577" width="3" height="3" fill="#00704a" />
<rect x="286" y="580" width="3" height="3" fill="#00704a" />
<rect x="289" y="574" width="3" height="3" fill="#00e896" />
<rect x="289" y="577" width="3" height="3" fill="#00e896" />
<rect x="289" y="580" width="3" height="3" fill="#00e896" />
<rect x="303" y="570" width="3" height="3" fill="#00b2e2" />
<rect x="303" y="573" width="3" height="3" fill="#00b2e2" />
<rect x="303" y="576" width="3" height="3" fill="#00b2e2" />
<rect x="306" y="570" width="3" height="3" fill="#00b2e2" />
<rect x="306" y="573" width="3" height="3" fill="#00b2e2" />
<rect x="306" y="576" width="3" height="3" fill="#00e896" />
<rect x="306" y="579" width="3" height="3" fill="#00b2e2" />
<rect x="309" y="570" width="3" height="3" fill="#00b2e2" />
<rect x="309" y="573" width="3" height="3" fill="#00b2e2" />
<rect x="309" y="576" width="3" height="3" fill="#00e896" />
<rect x="312" y="570" width="3" height="3" fill="#00b2e2" />
<rect x="312" y="573" width="3" height="3" fill="#00b2e2" />
<rect x="315" y="573" width="3" height="3" fill="#00b2e2" />
<rect x="315" y="576" width="3" height="3" fill="#00b2e2" />
<rect x="317" y="584" width="3" height="3" fill="#00b2e2" />
<rect x="317" y="587" width="3" height="3" fill="#00b2e2" />
<rect x="317" y="590" width="3" height="3" fill="#00e896" />
<rect x="317" y="593" width="3" height="3" fill="#00e896" />
<rect x="317" y="599" width="3" height="3" fill="#00b2e2" />
<rect x="320" y="581" width="3" height="3" fill="#00b2e2" />
<rect x="320" y="584" width="3" height="3" fill="#00e896" />
<rect x="320" y="587" width="3" height="3" fill="#00e896" />
<rect x="320" y="590" width="3" height="3" fill="#00704a" />
<rect x="320" y="593" width="3" height="3" fill="#c8c8c8" />
<rect x="320" y="596" width="3" height="3" fill="#c8c8c8" />
<rect x="320" y="599" width="3" height="3" fill="#00704a" />
<rect x="320" y="602" width="3" height="3" fill="#00b2e2" />
<rect x="323" y="581" width="3" height="3" fill="#00b2e2" />
<rect x="323" y="584" width="3" height="3" fill="#00e896" />
<rect x="323" y="587" width="3" height="3" fill="#00e896" />
<rect x="323" y="590" width="3" height="3" fill="#00e896" />
<rect x="323" y="593" width="3" height="3" fill="#00e896" />
<rect x="323" y="596" width="3" height="3" fill="#00e896" />
<rect x="323" y="599" width="3" height="3" fill="#00e896" />
<rect x="323" y="602" width="3" height="3" fill="#00b2e2" />
<rect x="326" y="590" width="3" height="3" fill="#00b2e2" />
<rect x="326" y="593" width="3" height="3" fill="#00e896" />
<rect x="326" y="596" width="3" height="3" fill="#00b2e2" />
<rect x="326" y="599" width="3" height="3" fill="#00b2e2" />
<rect x="328" y="597" width="3" height="3" fill="#00b2e2" />
<rect x="328" y="600" width="3" height="3" fill="#00e896" />
<rect x="328" y="603" width="3" height="3" fill="#00e896" />
<rect x="328" y="606" width="3" height="3" fill="#00704a" />
<rect x="328" y="609" width="3" height="3" fill="#00e896" />
<rect x="328" y="612" width="3" height="3" fill="#00b2e2" />
<rect x="331" y="597" width="3" height="3" fill="#00e896" />
<rect x="331" y="600" width="3" height="3" fill="#00704a" />
<rect x="331" y="603" width="3" height="3" fill="#c8c8c8" />
<rect x="331" y="606" width="3" height="3" fill="#c8c8c8" />
<rect x="331" y="609" width="3" height="3" fill="#c8c8c8" />
<rect x="331" y="612" width="3" height="3" fill="#00704a" />
<rect x="334" y="597" width="3" height="3" fill="#00e896" />
<rect x="334" y="600" width="3" height="3" fill="#c8c8c8" />
<rect x="334" y="603" width="3" height="3" fill="#00704a" />
<rect x="334" y="606" width="3" height="3" fill="#c8c8c8" />
<rect x="334" y="609" width="3" height="3" fill="#c8c8c8" />
<rect x="337" y="606" width="3" height="3" fill="#00e896" />
<rect x="337" y="609" width="3" height="3" fill="#00e896" />
<rect x="344" y="604" width="3" height="3" fill="#00e896" />
<rect x="344" y="610" width="3" height="3" fill="#00704a" />
<rect x="344" y="613" width="3" height="3" fill="#00e896" />
<rect x="347" y="604" width="3" height="3" fill="#00704a" />
<rect x="347" y="607" width="3" height="3" fill="#c8c8c8" />
<rect x="347" y="610" width="3" height="3" fill="#c8c8c8" />
<rect x="347" y="613" width="3" height="3" fill="#00704a" />
<rect x="350" y="607" width="3" height="3" fill="#c8c8c8" />
<rect x="350" y="610" width="3" height="3" fill="#c8c8c8" />
<rect x="350" y="613" width="3" height="3" fill="#00704a" />
<rect x="353" y="604" width="3" height="3" fill="#00e896" />
<rect x="353" y="607" width="3" height="3" fill="#00704a" />
<rect x="309" y="606" width="3" height="3" fill="#00e896" />
<rect x="312" y="606" width="3" height="3" fill="#00704a" />
<rect x="315" y="606" width="3" height="3" fill="#00b2e2" />
<rect x="298" y="620" width="3" height="3" fill="#00e896" />
<rect x="298" y="623" width="3" height="3" fill="#00e896" />
<rect x="301" y="620" width="3" height="3" fill="#c8c8c8" />
<rect x="301" y="623" width="3" height="3" fill="#d89030" />
<rect x="301" y="626" width="3" height="3" fill="#00e896" />
<rect x="304" y="620" width="3" height="3" fill="#d89030" />
<rect x="304" y="623" width="3" height="3" fill="#d89030" />
<rect x="304" y="626" width="3" height="3" fill="#00e896" />
<rect x="307" y="620" width="3" height="3" fill="#d89030" />
<rect x="307" y="623" width="3" height="3" fill="#d89030" />
<rect x="310" y="617" width="3" height="3" fill="#00e896" />
<rect x="310" y="620" width="3" height="3" fill="#d89030" />
<rect x="310" y="623" width="3" height="3" fill="#d89030" />
<rect x="313" y="623" width="3" height="3" fill="#00e896" />
<rect x="287" y="623" width="3" height="3" fill="#d89030" />
<rect x="290" y="620" width="3" height="3" fill="#d89030" />
<rect x="290" y="623" width="3" height="3" fill="#d89030" />
<rect x="293" y="620" width="3" height="3" fill="#d89030" />
<rect x="293" y="623" width="3" height="3" fill="#00e896" />
<rect x="323" y="618" width="3" height="3" fill="#00b2e2" />
<rect x="323" y="621" width="3" height="3" fill="#00b2e2" />
<rect x="326" y="618" width="3" height="3" fill="#00e896" />
<rect x="326" y="621" width="3" height="3" fill="#00e896" />
<rect x="329" y="618" width="3" height="3" fill="#00b2e2" />
<rect x="296" y="632" width="3" height="3" fill="#00b2e2" />
<rect x="296" y="635" width="3" height="3" fill="#00e896" />
<rect x="296" y="638" width="3" height="3" fill="#00e896" />
<rect x="296" y="641" width="3" height="3" fill="#00704a" />
<rect x="296" y="644" width="3" height="3" fill="#00e896" />
<rect x="299" y="632" width="3" height="3" fill="#00e896" />
<rect x="299" y="635" width="3" height="3" fill="#00704a" />
<rect x="299" y="638" width="3" height="3" fill="#00704a" />
<rect x="299" y="641" width="3" height="3" fill="#d89030" />
<rect x="299" y="644" width="3" height="3" fill="#00704a" />
<rect x="302" y="635" width="3" height="3" fill="#d89030" />
<rect x="302" y="638" width="3" height="3" fill="#00704a" />
<rect x="302" y="641" width="3" height="3" fill="#00704a" />
<rect x="302" y="644" width="3" height="3" fill="#00704a" />
<rect x="305" y="632" width="3" height="3" fill="#00b2e2" />
<rect x="305" y="635" width="3" height="3" fill="#00e896" />
<rect x="305" y="638" width="3" height="3" fill="#00e896" />
<rect x="305" y="641" width="3" height="3" fill="#00e896" />
<rect x="305" y="644" width="3" height="3" fill="#00b2e2" />
<rect x="311" y="644" width="3" height="3" fill="#00b2e2" />
<rect x="311" y="647" width="3" height="3" fill="#00b2e2" />
<rect x="314" y="644" width="3" height="3" fill="#00b2e2" />
<rect x="314" y="647" width="3" height="3" fill="#d89030" />
<rect x="314" y="650" width="3" height="3" fill="#d89030" />
<rect x="314" y="653" width="3" height="3" fill="#00b2e2" />
<rect x="317" y="644" width="3" height="3" fill="#00b2e2" />
<rect x="317" y="647" width="3" height="3" fill="#00b2e2" />
<rect x="317" y="650" width="3" height="3" fill="#00b2e2" />
<rect x="327" y="632" width="3" height="3" fill="#00704a" />
<rect x="327" y="635" width="3" height="3" fill="#00e896" />
<rect x="327" y="638" width="3" height="3" fill="#00e896" />
<rect x="327" y="641" width="3" height="3" fill="#c8c8c8" />
<rect x="327" y="644" width="3" height="3" fill="#00e896" />
<rect x="330" y="635" width="3" height="3" fill="#c8c8c8" />
<rect x="330" y="638" width="3" height="3" fill="#d89030" />
<rect x="330" y="641" width="3" height="3" fill="#c8c8c8" />
<rect x="330" y="644" width="3" height="3" fill="#d89030" />
<rect x="330" y="647" width="3" height="3" fill="#00e896" />
<rect x="333" y="635" width="3" height="3" fill="#00e896" />
<rect x="333" y="638" width="3" height="3" fill="#c8c8c8" />
<rect x="333" y="644" width="3" height="3" fill="#00e896" />
<rect x="333" y="647" width="3" height="3" fill="#00704a" />
<rect x="336" y="647" width="3" height="3" fill="#00e896" />
<rect x="336" y="650" width="3" height="3" fill="#00704a" />
<rect x="339" y="644" width="3" height="3" fill="#00704a" />
<rect x="339" y="647" width="3" height="3" fill="#00e896" />
<rect x="339" y="650" width="3" height="3" fill="#00704a" />
<rect x="319" y="652" width="3" height="3" fill="#00e896" />
<rect x="319" y="655" width="3" height="3" fill="#00704a" />
<rect x="322" y="652" width="3" height="3" fill="#00704a" />
<rect x="322" y="655" width="3" height="3" fill="#d89030" />
<rect x="322" y="661" width="3" height="3" fill="#00704a" />
<rect x="325" y="655" width="3" height="3" fill="#c8c8c8" />
<rect x="325" y="658" width="3" height="3" fill="#d89030" />
<rect x="325" y="661" width="3" height="3" fill="#c8c8c8" />
<rect x="328" y="652" width="3" height="3" fill="#00704a" />
<rect x="328" y="658" width="3" height="3" fill="#c8c8c8" />
<rect x="328" y="661" width="3" height="3" fill="#00704a" />
<rect x="331" y="652" width="3" height="3" fill="#00e896" />
<rect x="331" y="658" width="3" height="3" fill="#00704a" />
<rect x="331" y="661" width="3" height="3" fill="#00e896" />
<rect x="306" y="666" width="3" height="3" fill="#00e896" />
<rect x="306" y="672" width="3" height="3" fill="#00b2e2" />
<rect x="309" y="660" width="3" height="3" fill="#00e896" />
<rect x="309" y="663" width="3" height="3" fill="#00e896" />
<rect x="309" y="666" width="3" height="3" fill="#00e896" />
<rect x="309" y="669" width="3" height="3" fill="#00e896" />
<rect x="309" y="672" width="3" height="3" fill="#00b2e2" />
<rect x="312" y="660" width="3" height="3" fill="#00e896" />
<rect x="312" y="663" width="3" height="3" fill="#00e896" />
<rect x="312" y="666" width="3" height="3" fill="#c8c8c8" />
<rect x="312" y="669" width="3" height="3" fill="#00e896" />
<rect x="315" y="660" width="3" height="3" fill="#00b2e2" />
<rect x="315" y="663" width="3" height="3" fill="#00e896" />
<rect x="315" y="666" width="3" height="3" fill="#00e896" />
<rect x="315" y="669" width="3" height="3" fill="#00e896" />
<rect x="318" y="660" width="3" height="3" fill="#00b2e2" />
<rect x="318" y="663" width="3" height="3" fill="#00e896" />
<rect x="318" y="666" width="3" height="3" fill="#00e896" />
<rect x="291" y="666" width="3" height="3" fill="#00e896" />
<rect x="291" y="672" width="3" height="3" fill="#00704a" />
<rect x="294" y="663" width="3" height="3" fill="#d89030" />
<rect x="294" y="666" width="3" height="3" fill="#d89030" />
<rect x="294" y="669" width="3" height="3" fill="#d89030" />
<rect x="297" y="660" width="3" height="3" fill="#00e896" />
<rect x="297" y="663" width="3" height="3" fill="#d89030" />
<rect x="297" y="666" width="3" height="3" fill="#d89030" />
<rect x="297" y="669" width="3" height="3" fill="#c8c8c8" />
<rect x="300" y="660" width="3" height="3" fill="#00704a" />
<rect x="300" y="666" width="3" height="3" fill="#00e896" />
<rect x="276" y="676" width="3" height="3" fill="#00b2e2" />
<rect x="276" y="679" width="3" height="3" fill="#00e896" />
<rect x="276" y="682" width="3" height="3" fill="#00b2e2" />
<rect x="279" y="676" width="3" height="3" fill="#00e896" />
<rect x="279" y="679" width="3" height="3" fill="#00704a" />
<rect x="279" y="682" width="3" height="3" fill="#00b2e2" />
<rect x="282" y="676" width="3" height="3" fill="#00e896" />
<rect x="282" y="679" width="3" height="3" fill="#c8c8c8" />
<rect x="285" y="676" width="3" height="3" fill="#00e896" />
<rect x="285" y="679" width="3" height="3" fill="#c8c8c8" />
<rect x="285" y="682" width="3" height="3" fill="#00e896" />
<rect x="288" y="676" width="3" height="3" fill="#00e896" />
<rect x="288" y="679" width="3" height="3" fill="#00704a" />
<rect x="288" y="682" width="3" height="3" fill="#00e896" />
<rect x="291" y="679" width="3" height="3" fill="#00704a" />
<rect x="291" y="682" width="3" height="3" fill="#00e896" />
<rect x="294" y="679" width="3" height="3" fill="#00b2e2" />
<rect x="288" y="687" width="3" height="3" fill="#00e896" />
<rect x="288" y="690" width="3" height="3" fill="#00e896" />
<rect x="291" y="687" width="3" height="3" fill="#00e896" />
<rect x="291" y="690" width="3" height="3" fill="#00e896" />
<rect x="294" y="687" width="3" height="3" fill="#00e896" />
<rect x="294" y="690" width="3" height="3" fill="#00e896" />
<rect x="314" y="687" width="3" height="3" fill="#00e896" />
<rect x="317" y="687" width="3" height="3" fill="#00e896" />
<rect x="320" y="690" width="3" height="3" fill="#00e896" />
<rect x="205" y="649" width="3" height="3" fill="#00e896" />
<rect x="205" y="652" width="3" height="3" fill="#00e896" />
<rect x="205" y="655" width="3" height="3" fill="#00b2e2" />
<rect x="208" y="646" width="3" height="3" fill="#00e896" />
<rect x="208" y="649" width="3" height="3" fill="#00704a" />
<rect x="208" y="655" width="3" height="3" fill="#00e896" />
<rect x="211" y="646" width="3" height="3" fill="#00e896" />
<rect x="211" y="649" width="3" height="3" fill="#c8c8c8" />
<rect x="211" y="652" width="3" height="3" fill="#c8c8c8" />
<rect x="211" y="655" width="3" height="3" fill="#00e896" />
<rect x="214" y="655" width="3" height="3" fill="#00b2e2" />
<rect x="226" y="643" width="3" height="3" fill="#00704a" />
<rect x="229" y="643" width="3" height="3" fill="#00e896" />
<rect x="229" y="646" width="3" height="3" fill="#c8c8c8" />
<rect x="229" y="649" width="3" height="3" fill="#c8c8c8" />
<rect x="232" y="643" width="3" height="3" fill="#00e896" />
<rect x="232" y="646" width="3" height="3" fill="#d89030" />
<rect x="232" y="649" width="3" height="3" fill="#c8c8c8" />
<rect x="232" y="652" width="3" height="3" fill="#00e896" />
<rect x="235" y="646" width="3" height="3" fill="#c8c8c8" />
<rect x="235" y="652" width="3" height="3" fill="#00704a" />
<rect x="238" y="651" width="3" height="3" fill="#00b2e2" />
<rect x="238" y="654" width="3" height="3" fill="#00b2e2" />
<rect x="238" y="657" width="3" height="3" fill="#00e896" />
<rect x="238" y="660" width="3" height="3" fill="#00b2e2" />
<rect x="241" y="654" width="3" height="3" fill="#00704a" />
<rect x="241" y="657" width="3" height="3" fill="#00704a" />
<rect x="241" y="660" width="3" height="3" fill="#00e896" />
<rect x="244" y="651" width="3" height="3" fill="#00e896" />
<rect x="244" y="654" width="3" height="3" fill="#00704a" />
<rect x="244" y="657" width="3" height="3" fill="#00e896" />
<rect x="247" y="651" width="3" height="3" fill="#00b2e2" />
<rect x="247" y="654" width="3" height="3" fill="#00e896" />
<rect x="247" y="657" width="3" height="3" fill="#00e896" />
<rect x="247" y="658" width="3" height="3" fill="#00b2e2" />
<rect x="247" y="661" width="3" height="3" fill="#00b2e2" />
<rect x="250" y="658" width="3" height="3" fill="#00b2e2" />
<rect x="250" y="661" width="3" height="3" fill="#00b2e2" />
<rect x="250" y="664" width="3" height="3" fill="#00b2e2" />
<rect x="227" y="671" width="3" height="3" fill="#00b2e2" />
<rect x="227" y="674" width="3" height="3" fill="#00b2e2" />
<rect x="230" y="668" width="3" height="3" fill="#00b2e2" />
<rect x="230" y="671" width="3" height="3" fill="#00b2e2" />
<rect x="230" y="674" width="3" height="3" fill="#00b2e2" />
<rect x="233" y="671" width="3" height="3" fill="#00e896" />
<rect x="233" y="674" width="3" height="3" fill="#00b2e2" />
<rect x="236" y="671" width="3" height="3" fill="#00e896" />
<rect x="236" y="674" width="3" height="3" fill="#00b2e2" />
<rect x="239" y="668" width="3" height="3" fill="#00e896" />
<rect x="239" y="671" width="3" height="3" fill="#00e896" />
<rect x="239" y="674" width="3" height="3" fill="#00b2e2" />
<rect x="242" y="668" width="3" height="3" fill="#00b2e2" />
<rect x="242" y="671" width="3" height="3" fill="#00e896" />
<rect x="242" y="674" width="3" height="3" fill="#00b2e2" />
<rect x="245" y="668" width="3" height="3" fill="#00b2e2" />
<rect x="248" y="668" width="3" height="3" fill="#00b2e2" />
<rect x="248" y="671" width="3" height="3" fill="#00b2e2" />
<rect x="213" y="672" width="3" height="3" fill="#00e896" />
<rect x="213" y="681" width="3" height="3" fill="#00e896" />
<rect x="216" y="675" width="3" height="3" fill="#00704a" />
<rect x="216" y="678" width="3" height="3" fill="#00704a" />
<rect x="216" y="681" width="3" height="3" fill="#00704a" />
<rect x="219" y="672" width="3" height="3" fill="#00704a" />
<rect x="219" y="675" width="3" height="3" fill="#00704a" />
<rect x="219" y="678" width="3" height="3" fill="#00704a" />
<rect x="222" y="675" width="3" height="3" fill="#00704a" />
<rect x="222" y="678" width="3" height="3" fill="#00704a" />
<rect x="190" y="684" width="3" height="3" fill="#00e896" />
<rect x="190" y="687" width="3" height="3" fill="#00704a" />
<rect x="190" y="690" width="3" height="3" fill="#00704a" />
<rect x="190" y="693" width="3" height="3" fill="#00e896" />
<rect x="193" y="684" width="3" height="3" fill="#00e896" />
<rect x="193" y="687" width="3" height="3" fill="#00e896" />
<rect x="193" y="690" width="3" height="3" fill="#00704a" />
<rect x="193" y="693" width="3" height="3" fill="#00e896" />
<rect x="260" y="696" width="3" height="3" fill="#00b2e2" />
<rect x="263" y="693" width="3" height="3" fill="#00b2e2" />
<rect x="263" y="696" width="3" height="3" fill="#00b2e2" />
<rect x="266" y="693" width="3" height="3" fill="#00b2e2" />
<rect x="266" y="696" width="3" height="3" fill="#00b2e2" />
<rect x="270" y="672" width="3" height="3" fill="#00b2e2" />
<rect x="270" y="675" width="3" height="3" fill="#00b2e2" />
<rect x="273" y="672" width="3" height="3" fill="#00e896" />
<rect x="273" y="675" width="3" height="3" fill="#00e896" />
<rect x="237" y="570" width="3" height="3" fill="#00e896" />
<rect x="248" y="605" width="3" height="3" fill="#1478e6" />
<rect x="248" y="608" width="3" height="3" fill="#00b2e2" />
<rect x="248" y="611" width="3" height="3" fill="#00b2e2" />
<rect x="248" y="614" width="3" height="3" fill="#00b2e2" />
<rect x="248" y="617" width="3" height="3" fill="#1478e6" />
<rect x="251" y="602" width="3" height="3" fill="#1478e6" />
<rect x="251" y="608" width="3" height="3" fill="#00b2e2" />
<rect x="251" y="611" width="3" height="3" fill="#d89030" />
<rect x="251" y="614" width="3" height="3" fill="#00b2e2" />
<rect x="251" y="617" width="3" height="3" fill="#00b2e2" />
<rect x="254" y="605" width="3" height="3" fill="#00b2e2" />
<rect x="254" y="608" width="3" height="3" fill="#00b2e2" />
<rect x="254" y="611" width="3" height="3" fill="#d89030" />
<rect x="254" y="614" width="3" height="3" fill="#d89030" />
<rect x="254" y="617" width="3" height="3" fill="#1478e6" />
<rect x="257" y="602" width="3" height="3" fill="#1478e6" />
<rect x="257" y="605" width="3" height="3" fill="#00b2e2" />
<rect x="257" y="608" width="3" height="3" fill="#00b2e2" />
<rect x="257" y="611" width="3" height="3" fill="#00b2e2" />
<rect x="257" y="614" width="3" height="3" fill="#1478e6" />
<rect x="240" y="606" width="3" height="3" fill="#1478e6" />
<rect x="240" y="609" width="3" height="3" fill="#1478e6" />
<rect x="243" y="606" width="3" height="3" fill="#1478e6" />
<rect x="243" y="609" width="3" height="3" fill="#1478e6" />
<rect x="246" y="606" width="3" height="3" fill="#1478e6" />
<rect x="246" y="609" width="3" height="3" fill="#1478e6" />
<rect x="221" y="626" width="3" height="3" fill="#00b2e2" />
<rect x="355" y="628" width="3" height="3" fill="#00b2e2" />
<rect x="355" y="631" width="3" height="3" fill="#00b2e2" />
<line x1="233.5" y1="586" x2="242.5" y2="594.5" stroke="#fff" stroke-width="2.2" shape-rendering="auto"/>
<line x1="232.5" y1="588" x2="240.5" y2="595.5" stroke="#eeb422" stroke-width="1.6" shape-rendering="auto"/>
<rect x="259" y="623" width="1" height="2" fill="#1478e6" />
<rect x="279" y="645" width="1" height="1" fill="#1414ff" />
<rect x="288" y="628" width="1" height="1" fill="#1414ff" />
<rect x="290" y="623" width="1" height="2" fill="#6e0af0" />
<rect x="266" y="637" width="2" height="2" fill="#1414ff" />
<rect x="261" y="627" width="2" height="1" fill="#1478e6" />
<rect x="280" y="634" width="1" height="2" fill="#1414ff" />
<rect x="279" y="619" width="1" height="3" fill="#1414ff" />
<rect x="256" y="645" width="1" height="3" fill="#1478e6" />
<rect x="282" y="651" width="1" height="1" fill="#1478e6" />
<rect x="281" y="639" width="1" height="2" fill="#1414ff" />
<rect x="270" y="638" width="1" height="2" fill="#1446e6" />
<rect x="277" y="630" width="1" height="2" fill="#6e0af0" />
<rect x="269" y="630" width="2" height="2" fill="#1414ff" />
<rect x="277" y="635" width="1" height="3" fill="#1446e6" />
<rect x="257" y="632" width="1" height="1" fill="#6e0af0" />
<rect x="272" y="630" width="2" height="3" fill="#1446e6" />
<rect x="271" y="639" width="1" height="2" fill="#1414ff" />
<rect x="261" y="619" width="1" height="1" fill="#6e0af0" />
<rect x="261" y="651" width="1" height="1" fill="#1414ff" />
<rect x="267" y="622" width="1" height="2" fill="#1414ff" />
<rect x="256" y="642" width="2" height="3" fill="#1414ff" />
<rect x="269" y="629" width="1" height="2" fill="#6e0af0" />
<rect x="263" y="642" width="2" height="2" fill="#1478e6" />
<rect x="267" y="642" width="1" height="1" fill="#1446e6" />
<rect x="270" y="632" width="1" height="2" fill="#6e0af0" />
<rect x="289" y="649" width="2" height="2" fill="#6e0af0" />
<rect x="256" y="635" width="1" height="1" fill="#6e0af0" />
<rect x="292" y="628" width="1" height="1" fill="#1414ff" />
<rect x="284" y="618" width="2" height="2" fill="#1478e6" />
<rect x="285" y="623" width="2" height="3" fill="#1478e6" />
<rect x="283" y="623" width="1" height="2" fill="#1414ff" />
<rect x="273" y="634" width="2" height="3" fill="#1478e6" />
<rect x="268" y="644" width="1" height="3" fill="#1478e6" />
<rect x="256" y="641" width="2" height="1" fill="#1478e6" />
<rect x="290" y="646" width="2" height="3" fill="#1446e6" />
<rect x="283" y="627" width="2" height="1" fill="#1414ff" />
<rect x="264" y="630" width="1" height="3" fill="#1446e6" />
<rect x="283" y="632" width="1" height="1" fill="#1414ff" />
<rect x="288" y="642" width="1" height="3" fill="#1478e6" />
<rect x="273" y="650" width="1" height="2" fill="#1478e6" />
<rect x="291" y="639" width="2" height="1" fill="#6e0af0" />
<rect x="284" y="631" width="2" height="3" fill="#1414ff" />
<rect x="267" y="640" width="1" height="2" fill="#1414ff" />
<rect x="279" y="651" width="1" height="1" fill="#1446e6" />
<rect x="267" y="619" width="1" height="3" fill="#6e0af0" />
<rect x="286" y="647" width="1" height="2" fill="#1478e6" />
<rect x="270" y="642" width="1" height="2" fill="#1478e6" />
<rect x="266" y="648" width="1" height="2" fill="#6e0af0" />
<rect x="287" y="620" width="1" height="3" fill="#1414ff" />
<rect x="279" y="628" width="1" height="2" fill="#1478e6" />
<rect x="284" y="643" width="1" height="3" fill="#1414ff" />
<rect x="272" y="639" width="1" height="1" fill="#1414ff" />
<rect x="281" y="627" width="1" height="3" fill="#1446e6" />
<rect x="268" y="627" width="2" height="2" fill="#6e0af0" />
</g>
<circle cx="242.5" cy="464.5" r="7" fill="none" stroke="#ffa500" stroke-width="1" shape-rendering="auto"/>
<text x="243" y="478.5" font-size="6.5" fill="#ffa500" font-family="'Liberation Sans', sans-serif" textLength="23" lengthAdjust="spacingAndGlyphs" text-anchor="middle" >whoi-met</text>
<circle cx="271.5" cy="616.5" r="7.5" fill="none" stroke="#ffa500" stroke-width="1" shape-rendering="auto"/>
<text x="271.5" y="631" font-size="7" fill="#ffa500" font-family="'Liberation Sans', sans-serif" textLength="25" lengthAdjust="spacingAndGlyphs" text-anchor="middle" >bc-125-8</text>
<line x1="267" y1="463.5" x2="278" y2="463.5" stroke="#f0e68c" stroke-width="1" />
<line x1="272.5" y1="458" x2="272.5" y2="469" stroke="#f0e68c" stroke-width="1" />
<text x="41" y="463" font-size="5.5" fill="#f0e68c" font-family="'Liberation Sans', sans-serif" >10</text>
<text x="271" y="808.5" font-size="5.5" fill="#f0e68c" font-family="'Liberation Sans', sans-serif" text-anchor="middle" >-125</text>
<text x="15.9719" y="447.5" font-size="24" fill="#ffff00" font-family="'Liberation Sans', sans-serif" textLength="25.0559" lengthAdjust="spacing" >22</text>
<text transform="translate(42.4,447.5) scale(1.55,1)" font-size="24" fill="#ffff00" font-family="'Liberation Sans', sans-serif">-</text>
<text x="55.9858" y="447.5" font-size="24" fill="#ffff00" font-family="'Liberation Sans', sans-serif" textLength="38.1737" lengthAdjust="spacing" >aug</text>
<text transform="translate(95.6,447.5) scale(1.55,1)" font-size="24" fill="#ffff00" font-family="'Liberation Sans', sans-serif">-</text>
<text x="109.117" y="447.5" font-size="24" fill="#ffff00" font-family="'Liberation Sans', sans-serif" textLength="149.675" lengthAdjust="spacing" >1997,10:05:00</text>
<text x="273" y="447" font-size="24" fill="#fff" font-family="'Liberation Sans', sans-serif" textLength="122" lengthAdjust="spacing" >maxdz plot.</text>
<text x="409" y="447" font-size="24" fill="#fff" font-family="'Liberation Sans', sans-serif" textLength="122" lengthAdjust="spacing" >maxdz plot.</text>
<line x1="487" y1="458.5" x2="573" y2="458.5" stroke="#a0a0a0" stroke-width="1" />
<text x="490.5" y="471.5" font-size="17.5" fill="#fff" font-family="'Liberation Sans', sans-serif" textLength="51.5" lengthAdjust="spacing" >maxdz</text>
<rect x="490" y="485" width="10" height="8" fill="#f88080" />
<rect x="490" y="493" width="10" height="8" fill="#ff9696" />
<rect x="490" y="501" width="10" height="8" fill="#ffaa64" />
<rect x="490" y="509" width="10" height="8" fill="#ffdab4" />
<rect x="490" y="517" width="10" height="8" fill="#ffdc14" />
<rect x="490" y="525" width="10" height="8" fill="#eeb422" />
<rect x="490" y="533" width="10" height="8" fill="#d89030" />
<rect x="490" y="541" width="10" height="8" fill="#c8c8c8" />
<rect x="490" y="549" width="10" height="8" fill="#00704a" />
<rect x="490" y="557" width="10" height="8" fill="#00e896" />
<rect x="490" y="565" width="10" height="8" fill="#00b2e2" />
<rect x="490" y="573" width="10" height="8" fill="#1478e6" />
<rect x="490" y="581" width="10" height="8" fill="#1446e6" />
<rect x="490" y="589" width="10" height="8" fill="#4a1ee6" />
<rect x="490" y="597" width="10" height="8" fill="#6e0af0" />
<rect x="490" y="605" width="10" height="8" fill="#960af5" />
<text x="505" y="492.5" font-size="17.5" fill="#fff" font-family="'Liberation Sans', sans-serif" textLength="33.5" lengthAdjust="spacing" >65.0</text>
<text x="505" y="516.4" font-size="17.5" fill="#fff" font-family="'Liberation Sans', sans-serif" textLength="33.5" lengthAdjust="spacing" >50.0</text>
<text x="505" y="540.3" font-size="17.5" fill="#fff" font-family="'Liberation Sans', sans-serif" textLength="33.5" lengthAdjust="spacing" >35.0</text>
<text x="505" y="564.2" font-size="17.5" fill="#fff" font-family="'Liberation Sans', sans-serif" textLength="33.5" lengthAdjust="spacing" >20.0</text>
<text x="505" y="588.1" font-size="17.5" fill="#fff" font-family="'Liberation Sans', sans-serif" textLength="23.5" lengthAdjust="spacing" >5.0</text>
<text transform="translate(505.7,612) scale(1.51,1)" font-size="17.5" fill="#fff" font-family="'Liberation Sans', sans-serif">-</text>
<text x="515.22" y="612" font-size="17.5" fill="#fff" font-family="'Liberation Sans', sans-serif" textLength="34.28" lengthAdjust="spacing" >10.0</text>
<line x1="487" y1="639.5" x2="573" y2="639.5" stroke="#a0a0a0" stroke-width="1" />
<text x="490.5" y="652.5" font-size="17.5" fill="#fff" font-family="'Liberation Sans', sans-serif" textLength="51.5" lengthAdjust="spacing" >maxdz</text>
<rect x="490" y="666.5" width="10" height="8" fill="#f88080" />
<rect x="490" y="674.5" width="10" height="8" fill="#ff9696" />
<rect x="490" y="682.5" width="10" height="8" fill="#ffaa64" />
<rect x="490" y="690.5" width="10" height="8" fill="#ffdab4" />
<rect x="490" y="698.5" width="10" height="8" fill="#ffdc14" />
<rect x="490" y="706.5" width="10" height="8" fill="#eeb422" />
<rect x="490" y="714.5" width="10" height="8" fill="#d89030" />
<rect x="490" y="722.5" width="10" height="8" fill="#c8c8c8" />
<rect x="490" y="730.5" width="10" height="8" fill="#00704a" />
<rect x="490" y="738.5" width="10" height="8" fill="#00e896" />
<rect x="490" y="746.5" width="10" height="8" fill="#00b2e2" />
<rect x="490" y="754.5" width="10" height="8" fill="#1478e6" />
<rect x="490" y="762.5" width="10" height="8" fill="#1446e6" />
<rect x="490" y="770.5" width="10" height="8" fill="#4a1ee6" />
<rect x="490" y="778.5" width="10" height="8" fill="#6e0af0" />
<rect x="490" y="786.5" width="10" height="8" fill="#960af5" />
<text x="505" y="674" font-size="17.5" fill="#fff" font-family="'Liberation Sans', sans-serif" textLength="33.5" lengthAdjust="spacing" >65.0</text>
<text x="505" y="697.9" font-size="17.5" fill="#fff" font-family="'Liberation Sans', sans-serif" textLength="33.5" lengthAdjust="spacing" >50.0</text>
<text x="505" y="721.8" font-size="17.5" fill="#fff" font-family="'Liberation Sans', sans-serif" textLength="33.5" lengthAdjust="spacing" >35.0</text>
<text x="505" y="745.7" font-size="17.5" fill="#fff" font-family="'Liberation Sans', sans-serif" textLength="33.5" lengthAdjust="spacing" >20.0</text>
<text x="505" y="769.6" font-size="17.5" fill="#fff" font-family="'Liberation Sans', sans-serif" textLength="23.5" lengthAdjust="spacing" >5.0</text>
<text transform="translate(505.7,793.5) scale(1.51,1)" font-size="17.5" fill="#fff" font-family="'Liberation Sans', sans-serif">-</text>
<text x="515.22" y="793.5" font-size="17.5" fill="#fff" font-family="'Liberation Sans', sans-serif" textLength="34.28" lengthAdjust="spacing" >10.0</text>
<line x1="488" y1="820.5" x2="573" y2="820.5" stroke="#a0a0a0" stroke-width="1" />
<text x="381" y="860" font-size="24" fill="#fff" font-family="'Liberation Sans', sans-serif" textLength="181" lengthAdjust="spacing" >Alt: 0.50 km MSL</text>
<rect x="10" y="821" width="46" height="48" fill="#191970" />
<rect x="10.5" y="821.5" width="45" height="47" fill="none" stroke="#8c8c8c" stroke-width="1"/>
<g fill="none" stroke="#ffff00" stroke-linecap="round" stroke-linejoin="round" shape-rendering="auto">
<path d="M18.8,833.5 C21.1,828.8 26.6,827.2 31.2,829.5 C35.8,831.9 39.4,833.5 43.1,832.5 L46.6,830.4" stroke-width="2.1"/>
<path d="M46.6,830.4 C38.5,836.1 29.3,846.6 18.1,861.3" stroke-width="1.7"/>
<path d="M18.1,861.3 C22.0,857.5 26.6,857.0 31.2,859.2 C35.8,861.7 39.4,863.3 43.1,860.7 L47.5,856.5" stroke-width="2.1"/>
</g>
<rect x="57" y="821" width="46" height="48" fill="#696969" />
<rect x="57.5" y="821.5" width="45" height="47" fill="none" stroke="#8c8c8c" stroke-width="1"/>
<text x="59.5" y="834.5" font-size="13" fill="#dcdcdc" font-family="'Liberation Sans', sans-serif" textLength="31" lengthAdjust="spacingAndGlyphs" font-weight="bold" >GOES</text>
<clipPath id="gc57_821"><rect x="60" y="836" width="32" height="30"/></clipPath>
<g clip-path="url(#gc57_821)" shape-rendering="auto">
<circle cx="67" cy="855" r="15.5" fill="url(#stipG)"/>
<ellipse cx="77" cy="855" rx="4" ry="6.5" fill="#dcdcdc"/>
<path d="M60,866 v-8 h5 a6,6 0 0 1 5,8 z" fill="#dcdcdc"/>
</g>
<line x1="81" y1="851" x2="95" y2="844" stroke="#dcdcdc" stroke-width="1" stroke-dasharray="1 1" shape-rendering="auto"/>
<line x1="84" y1="856" x2="96" y2="846" stroke="#dcdcdc" stroke-width="1" stroke-dasharray="1 1" shape-rendering="auto"/>
<line x1="79" y1="847" x2="94" y2="842" stroke="#dcdcdc" stroke-width="1" stroke-dasharray="1 2" shape-rendering="auto"/>
<polygon points="97.0,839.0 100.0,842.0 97.0,845.0 94.0,842.0" fill="#dcdcdc" />
<rect x="77" y="838" width="1" height="1" fill="#dcdcdc" />
<rect x="85" y="840" width="1" height="1" fill="#dcdcdc" />
<rect x="90" y="838" width="1" height="1" fill="#dcdcdc" />
<rect x="95" y="851" width="1" height="1" fill="#dcdcdc" />
<rect x="93" y="857" width="1" height="1" fill="#dcdcdc" />
<rect x="82" y="863" width="1" height="1" fill="#dcdcdc" />
<text x="85" y="865" font-size="10" fill="#dcdcdc" font-family="'Liberation Sans', sans-serif" textLength="14" lengthAdjust="spacingAndGlyphs" >.IR</text>
<rect x="104" y="821" width="46" height="48" fill="#191970" />
<rect x="104.5" y="821.5" width="45" height="47" fill="none" stroke="#8c8c8c" stroke-width="1"/>
<path d="M109.0,829.0 C112.0,840.0 119.0,849.0 132.0,851.0" fill="none" stroke="#ffff00" stroke-width="2.0" shape-rendering="auto"/>
<polygon points="116.5,841.5 120.0,841.5 120.0,860.0 112.5,860.0 112.5,855.5 114.5,854.0" fill="#ffff00" />
<rect x="117.5" y="843" width="1.5" height="2.5" fill="#191970" />
<text x="139.5" y="837.5" font-size="14" fill="#ffff00" font-family="'Liberation Sans', sans-serif" textLength="7" lengthAdjust="spacingAndGlyphs" font-weight="normal" text-anchor="middle" >S</text>
<text x="139.5" y="849.7" font-size="14" fill="#ffff00" font-family="'Liberation Sans', sans-serif" textLength="7" lengthAdjust="spacingAndGlyphs" font-weight="normal" text-anchor="middle" >U</text>
<text x="139.5" y="861.9" font-size="14" fill="#ffff00" font-family="'Liberation Sans', sans-serif" textLength="7" lengthAdjust="spacingAndGlyphs" font-weight="normal" text-anchor="middle" >R</text>
<rect x="151" y="821" width="46" height="48" fill="#191970" />
<rect x="151.5" y="821.5" width="45" height="47" fill="none" stroke="#8c8c8c" stroke-width="1"/>
<g stroke="#ffff00" stroke-width="1" fill="none">
<line x1="156.5" y1="826" x2="156.5" y2="864"/>
<line x1="156" y1="826.5" x2="193" y2="826.5"/>
<line x1="165.5" y1="826" x2="165.5" y2="864"/>
<line x1="156" y1="835.9" x2="193" y2="835.9"/>
<line x1="174.5" y1="826" x2="174.5" y2="864"/>
<line x1="156" y1="845.3" x2="193" y2="845.3"/>
<line x1="183.5" y1="826" x2="183.5" y2="864"/>
<line x1="156" y1="854.7" x2="193" y2="854.7"/>
<line x1="192.5" y1="826" x2="192.5" y2="864"/>
<line x1="156" y1="864.1" x2="193" y2="864.1"/>
</g>
<path d="M161.0,828.0 C164.0,839.0 171.0,848.0 184.0,850.0" fill="none" stroke="#ffff00" stroke-width="2.0" shape-rendering="auto"/>
<polygon points="168.5,840.5 172.0,840.5 172.0,859.0 164.5,859.0 164.5,854.5 166.5,853.0" fill="#ffff00" />
<rect x="169.5" y="842" width="1.5" height="2.5" fill="#191970" />
<rect x="198" y="821" width="14" height="48" fill="#191970" />
<rect x="198.5" y="821.5" width="13" height="47" fill="none" stroke="#8c8c8c" stroke-width="1"/>
<text x="205" y="833" font-size="7.5" fill="#ffff00" font-family="'Liberation Sans', sans-serif" textLength="5" lengthAdjust="spacingAndGlyphs" font-weight="normal" text-anchor="middle" >B</text>
<text x="205" y="839.6" font-size="7.5" fill="#ffff00" font-family="'Liberation Sans', sans-serif" textLength="5" lengthAdjust="spacingAndGlyphs" font-weight="normal" text-anchor="middle" >O</text>
<text x="205" y="846.2" font-size="7.5" fill="#ffff00" font-family="'Liberation Sans', sans-serif" textLength="5" lengthAdjust="spacingAndGlyphs" font-weight="normal" text-anchor="middle" >U</text>
<text x="205" y="852.8" font-size="7.5" fill="#ffff00" font-family="'Liberation Sans', sans-serif" textLength="5" lengthAdjust="spacingAndGlyphs" font-weight="normal" text-anchor="middle" >N</text>
<text x="205" y="859.4" font-size="7.5" fill="#ffff00" font-family="'Liberation Sans', sans-serif" textLength="5" lengthAdjust="spacingAndGlyphs" font-weight="normal" text-anchor="middle" >D</text>
<text x="205" y="866" font-size="7.5" fill="#ffff00" font-family="'Liberation Sans', sans-serif" textLength="5" lengthAdjust="spacingAndGlyphs" font-weight="normal" text-anchor="middle" >S</text>
<rect x="213" y="845" width="22" height="24" fill="#191970" />
<rect x="213.5" y="845.5" width="21" height="23" fill="none" stroke="#8c8c8c" stroke-width="1"/>
<g stroke="#ffff00" stroke-width="1" fill="none">
<line x1="216.5" y1="849" x2="216.5" y2="865"/><line x1="216" y1="849.5" x2="232" y2="849.5"/>
<line x1="221.5" y1="849" x2="221.5" y2="865"/><line x1="216" y1="854.5" x2="232" y2="854.5"/>
<line x1="226.5" y1="849" x2="226.5" y2="865"/><line x1="216" y1="859.5" x2="232" y2="859.5"/>
<line x1="231.5" y1="849" x2="231.5" y2="865"/><line x1="216" y1="864.5" x2="232" y2="864.5"/>
</g>
<rect x="236" y="821" width="21" height="48" fill="#191970" />
<rect x="236.5" y="821.5" width="20" height="47" fill="none" stroke="#8c8c8c" stroke-width="1"/>
<polygon points="239.0,825.0 244.0,824.0 243.0,829.0 246.0,834.0 242.0,833.0 240.0,829.0" fill="#ffff00" />
<polygon points="247.0,826.0 254.0,824.0 251.0,829.0 254.0,833.0 250.0,835.0 248.0,830.0" fill="#ffff00" />
<text x="246.5" y="847.5" font-size="11" fill="#ffff00" font-family="'Liberation Sans', sans-serif" textLength="7" lengthAdjust="spacingAndGlyphs" font-weight="normal" text-anchor="middle" >M</text>
<text x="246.5" y="856.2" font-size="11" fill="#ffff00" font-family="'Liberation Sans', sans-serif" textLength="7" lengthAdjust="spacingAndGlyphs" font-weight="normal" text-anchor="middle" >A</text>
<text x="246.5" y="864.9" font-size="11" fill="#ffff00" font-family="'Liberation Sans', sans-serif" textLength="7" lengthAdjust="spacingAndGlyphs" font-weight="normal" text-anchor="middle" >P</text>
<rect x="258" y="821" width="21" height="48" fill="#191970" />
<rect x="258.5" y="821.5" width="20" height="47" fill="none" stroke="#8c8c8c" stroke-width="1"/>
<g fill="none" stroke="#ffff00" stroke-width="1">
<circle cx="268.5" cy="845" r="8"/><circle cx="268.5" cy="845" r="5.4"/><circle cx="268.5" cy="845" r="2.6"/>
<line x1="271.1" y1="845.0" x2="276.5" y2="845.0"/>
<line x1="270.3" y1="846.8" x2="274.2" y2="850.7"/>
<line x1="268.5" y1="847.6" x2="268.5" y2="853.0"/>
<line x1="266.7" y1="846.8" x2="262.8" y2="850.7"/>
<line x1="265.9" y1="845.0" x2="260.5" y2="845.0"/>
<line x1="266.7" y1="843.2" x2="262.8" y2="839.3"/>
<line x1="268.5" y1="842.4" x2="268.5" y2="837.0"/>
<line x1="270.3" y1="843.2" x2="274.2" y2="839.3"/>
</g>
<rect x="280" y="845" width="22" height="24" fill="#191970" />
<rect x="280.5" y="845.5" width="21" height="23" fill="none" stroke="#8c8c8c" stroke-width="1"/>
<circle cx="291" cy="857" r="6.5" fill="none" stroke="#ffff00" stroke-width="1" shape-rendering="auto"/>
<rect x="303" y="821" width="46" height="48" fill="#696969" />
<rect x="303.5" y="821.5" width="45" height="47" fill="none" stroke="#8c8c8c" stroke-width="1"/>
<g shape-rendering="auto">
<polygon points="310.5,852.5 344.0,852.5 341.5,858.0 313.5,858.0" fill="none" stroke="#dcdcdc" stroke-width="1"/>
<polygon points="313.0,852.5 313.0,844.5 317.5,844.5 319.0,852.5" fill="none" stroke="#dcdcdc" stroke-width="1"/>
<circle cx="326.5" cy="843.5" r="3.2" fill="none" stroke="#dcdcdc" stroke-width="1"/>
</g>
<line x1="325.5" y1="846.7" x2="325.5" y2="852.5" stroke="#dcdcdc" stroke-width="1" />
<line x1="327.5" y1="846.7" x2="327.5" y2="852.5" stroke="#dcdcdc" stroke-width="1" />
<line x1="338.5" y1="836" x2="338.5" y2="852.5" stroke="#dcdcdc" stroke-width="1" />
<polygon points="307.0,864.0 307.0,858.0 309.5,856.8 312.0,859.6 314.4,856.8 316.9,859.6 319.3,856.8 321.8,859.6 324.2,856.8 326.7,859.6 329.1,856.8 331.6,859.6 334.0,856.8 336.5,859.6 338.9,856.8 341.4,859.6 343.8,856.8 346.3,859.6 347.0,857.0 347.0,864.0" fill="#dcdcdc" />
<line x1="0" y1="426.5" x2="574" y2="426.5" stroke="#000" stroke-width="1" />
<line x1="0" y1="426.5" x2="574" y2="426.5" stroke="#fff" stroke-width="1" stroke-dasharray="1 1"/>
<line x1="573.5" y1="426" x2="573.5" y2="872" stroke="#000" stroke-width="1" />
<line x1="573.5" y1="426" x2="573.5" y2="872" stroke="#fff" stroke-width="1" stroke-dasharray="1 1"/>
<line x1="4" y1="871.5" x2="574" y2="871.5" stroke="#000" stroke-width="1" />
<line x1="4" y1="871.5" x2="574" y2="871.5" stroke="#fff" stroke-width="1" stroke-dasharray="1 1"/>
<line x1="4.5" y1="427" x2="4.5" y2="872" stroke="#000" stroke-width="1" />
<line x1="4.5" y1="427" x2="4.5" y2="872" stroke="#fff" stroke-width="1" stroke-dasharray="1 1"/>
<rect x="574" y="771" width="507" height="103" fill="#000" />
<rect x="1045" y="771" width="77" height="5" fill="#000" />
<line x1="1045" y1="775.5" x2="1122" y2="775.5" stroke="#000" stroke-width="1" />
<line x1="1045" y1="775.5" x2="1122" y2="775.5" stroke="#fff" stroke-width="1" stroke-dasharray="1 1"/>
<line x1="1045.5" y1="771" x2="1045.5" y2="776" stroke="#000" stroke-width="1" />
<line x1="1045.5" y1="771" x2="1045.5" y2="776" stroke="#fff" stroke-width="1" stroke-dasharray="1 1"/>
<line x1="1121.5" y1="771" x2="1121.5" y2="776" stroke="#000" stroke-width="1" />
<line x1="1121.5" y1="771" x2="1121.5" y2="776" stroke="#fff" stroke-width="1" stroke-dasharray="1 1"/>
<line x1="574" y1="873.5" x2="1081" y2="873.5" stroke="#000" stroke-width="1" />
<line x1="574" y1="873.5" x2="1081" y2="873.5" stroke="#fff" stroke-width="1" stroke-dasharray="1 1"/>
<line x1="1080.5" y1="776" x2="1080.5" y2="874" stroke="#000" stroke-width="1" />
<line x1="1080.5" y1="776" x2="1080.5" y2="874" stroke="#fff" stroke-width="1" stroke-dasharray="1 1"/>
<rect x="574" y="800" width="501" height="2" fill="#fff" />
<rect x="574" y="866" width="501" height="2" fill="#fff" />
<rect x="1073" y="800" width="2" height="68" fill="#fff" />
<rect x="577" y="776.5" width="44" height="21.5" fill="none" stroke="#fff" stroke-width="2"/>
<text x="581.5" y="792" font-size="12.5" fill="#fff" font-family="'Liberation Sans', sans-serif" textLength="34" lengthAdjust="spacingAndGlyphs" >Dismiss</text>
<text x="575" y="816.5" font-size="15" fill="#fff" font-family="'Liberation Mono', monospace" textLength="71" lengthAdjust="spacing" font-weight="bold" >PLATFORM</text>
<text x="674" y="816.5" font-size="15" fill="#fff" font-family="'Liberation Mono', monospace" textLength="44" lengthAdjust="spacing" font-weight="bold" >FIELD</text>
<text x="773" y="816.5" font-size="15" fill="#fff" font-family="'Liberation Mono', monospace" textLength="71" lengthAdjust="spacing" font-weight="bold" >ALTITUDE</text>
<text x="908" y="816.5" font-size="15" fill="#fff" font-family="'Liberation Mono', monospace" textLength="35" lengthAdjust="spacing" font-weight="bold" >TIME</text>
<text x="575" y="831.5" font-size="15" fill="#fff" font-family="'Liberation Mono', monospace" textLength="89" lengthAdjust="spacing" font-weight="bold" >rhb_lowprf</text>
<text x="674" y="831.5" font-size="15" fill="#fff" font-family="'Liberation Mono', monospace" textLength="44" lengthAdjust="spacing" font-weight="bold" >maxdz</text>
<text x="773" y="831.5" font-size="15" fill="#fff" font-family="'Liberation Mono', monospace" textLength="98" lengthAdjust="spacing" font-weight="bold" >0.50 km MSL</text>
<text x="908" y="831.5" font-size="15" fill="#fff" font-family="'Liberation Mono', monospace" textLength="161" lengthAdjust="spacing" font-weight="bold" >22-Aug-97,10:00:11</text>
<text x="575" y="846.5" font-size="15" fill="#fff" font-family="'Liberation Mono', monospace" textLength="53" lengthAdjust="spacing" font-weight="bold" >rhb_3d</text>
<text x="674" y="846.5" font-size="15" fill="#fff" font-family="'Liberation Mono', monospace" textLength="44" lengthAdjust="spacing" font-weight="bold" >maxdz</text>
<text x="773" y="846.5" font-size="15" fill="#fff" font-family="'Liberation Mono', monospace" textLength="98" lengthAdjust="spacing" font-weight="bold" >0.50 km MSL</text>
<text x="908" y="846.5" font-size="15" fill="#fff" font-family="'Liberation Mono', monospace" textLength="161" lengthAdjust="spacing" font-weight="bold" >22-Aug-97,10:01:11</text>
</svg></body></html>
